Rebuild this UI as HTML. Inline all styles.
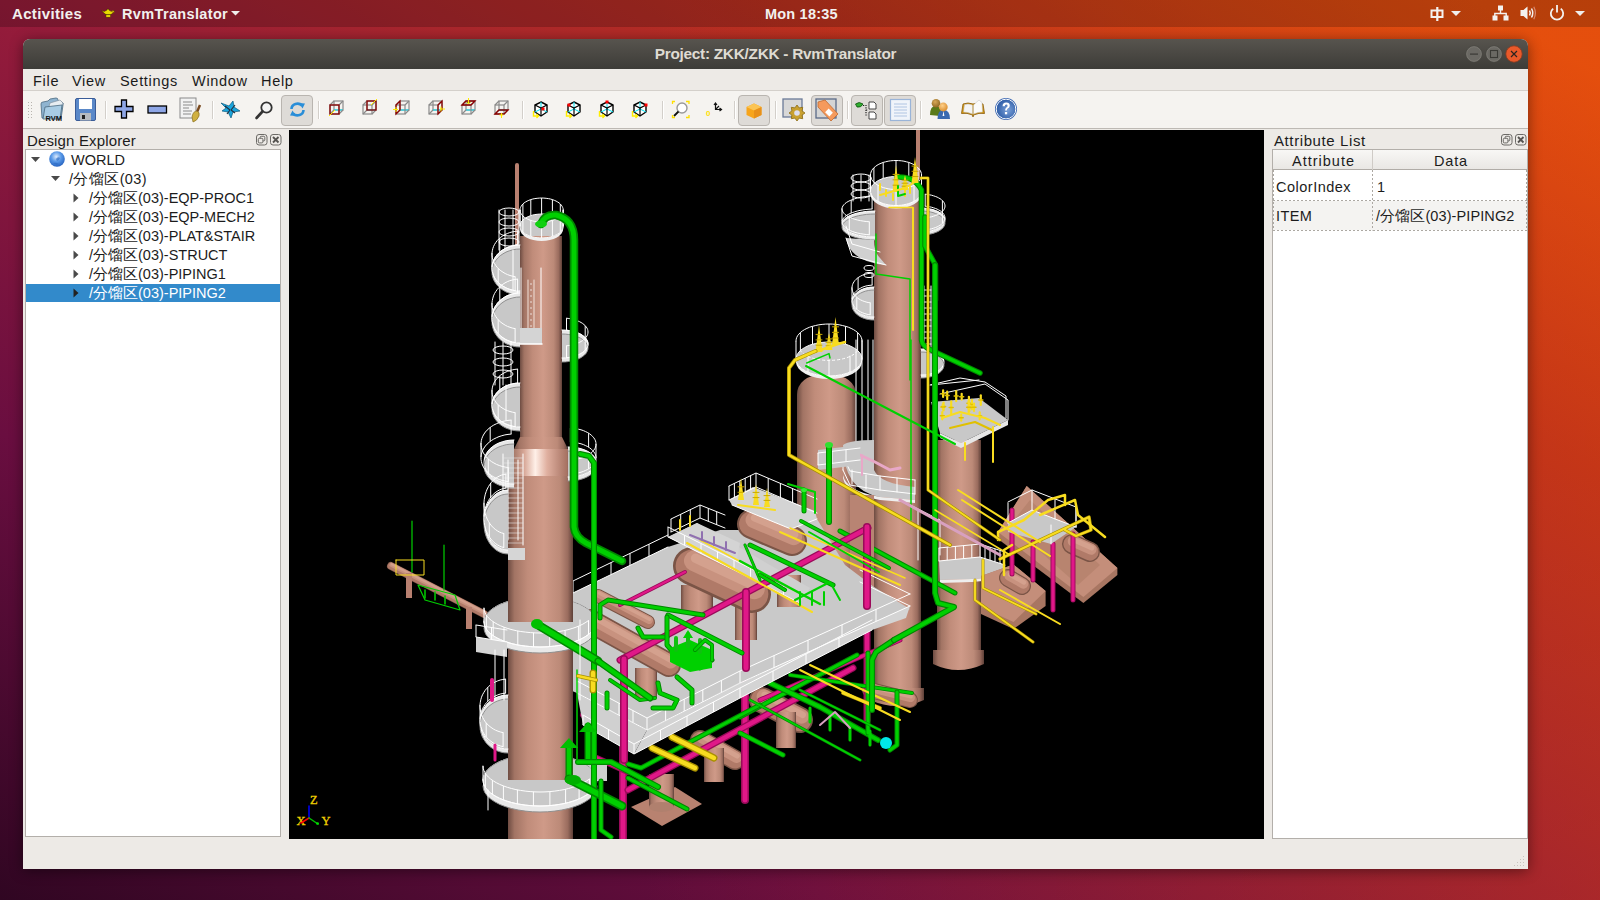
<!DOCTYPE html>
<html><head><meta charset="utf-8">
<style>
*{margin:0;padding:0;box-sizing:border-box}
html,body{width:1600px;height:900px;overflow:hidden}
body{position:relative;font-family:"Liberation Sans",sans-serif;background:#6a0e3e}
.a{position:absolute}
#bg{left:0;top:0;width:1600px;height:900px;background:linear-gradient(to right,rgba(220,70,0,0) 0%,rgba(220,70,0,0) 40%,rgba(220,70,0,0.28) 100%),linear-gradient(to top right,#300622 0%,#6a0e40 26%,#961c3a 50%,#bc3020 74%,#e85212 96%)}
#panel{left:0;top:0;width:1600px;height:27px;background:rgba(0,0,0,0.2)}
.pt{color:#f2f0ee;font-weight:bold;font-size:14.5px;top:6px;white-space:nowrap;line-height:17px}
#win{left:23px;top:39px;width:1505px;height:830px;background:#edeae6;border-radius:7px 7px 0 0;box-shadow:0 2px 14px rgba(0,0,0,0.45)}
#title{left:23px;top:39px;width:1505px;height:30px;border-radius:7px 7px 0 0;background:linear-gradient(#57544e,#3d3c38)}
.mi{font-size:14.5px;color:#1a1a1a;top:73px;white-space:nowrap;line-height:17px;letter-spacing:0.7px}
#toolbar{left:23px;top:90px;width:1505px;height:39px;background:#f5f3f0;border-top:1px solid #d4d0cb;border-bottom:1px solid #bdb9b4}
.sep{width:1px;height:18px;top:101px;background:#d3cfca;box-shadow:1px 0 0 #fff}
.tog{top:95px;height:31px;border:1px solid #b9b5b0;border-radius:4px;background:#dedbd7}
.dh{font-size:14.5px;color:#1c1c1c;white-space:nowrap;line-height:17px;letter-spacing:0.4px}
.tree{background:#fff;border:1px solid #b3afaa}
.ti{font-size:14.5px;color:#1c1c1c;white-space:nowrap;line-height:19px;height:19px}
.ic{position:absolute;overflow:visible}
</style></head><body>
<div id="bg" class="a"></div>
<div id="panel" class="a"></div>
<div class="a pt" style="left:12px;top:5px;letter-spacing:0.35px;font-size:15px">Activities</div>
<div class="a pt" style="left:122px;letter-spacing:0.35px">RvmTranslator</div>
<div class="a pt" style="left:765px;letter-spacing:0.2px">Mon 18:35</div>
<svg class="ic" style="left:1430px;top:7px" width="15" height="15" viewBox="0 0 15 15" ><rect x="1.5" y="3.5" width="11" height="6.5" fill="none" stroke="#f4f2f0" stroke-width="2"/><rect x="6.2" y="0" width="2.2" height="14" fill="#f4f2f0"/></svg>
<svg class="ic" style="left:1451px;top:11px" width="10" height="5" viewBox="0 0 10 5" ><path d="M0,0 L10,0 L5,5 Z" fill="#f0eeec"/></svg>
<svg class="ic" style="left:1575px;top:11px" width="10" height="5" viewBox="0 0 10 5" ><path d="M0,0 L10,0 L5,5 Z" fill="#f0eeec"/></svg>
<svg class="ic" style="left:1492px;top:5px" width="17" height="16" viewBox="0 0 17 16" ><rect x="6" y="0.5" width="5" height="5" fill="#f4f2f0"/><path d="M8.5,5 V8.5 M2.8,11 V8.5 H14.2 V11" stroke="#f4f2f0" stroke-width="1.4" fill="none"/><rect x="0.5" y="10.5" width="5" height="5" fill="#f4f2f0"/><rect x="11.5" y="10.5" width="5" height="5" fill="#f4f2f0"/></svg>
<svg class="ic" style="left:1520px;top:6px" width="17" height="14" viewBox="0 0 17 14" ><path d="M0.5,4 H3.5 L7.5,0.5 V13.5 L3.5,10 H0.5 Z" fill="#f4f2f0"/><path d="M9.5,4.5 Q11,7 9.5,9.5" stroke="#f4f2f0" stroke-width="1.5" fill="none"/><path d="M11.5,2.5 Q14,7 11.5,11.5" stroke="#f4f2f0" stroke-width="1.5" fill="none"/><path d="M13.8,0.8 Q17,7 13.8,13.2" stroke="#e6a898" stroke-width="1.2" fill="none" opacity="0.7"/></svg>
<svg class="ic" style="left:1549px;top:5px" width="16" height="16" viewBox="0 0 16 16" ><path d="M4.2,3.6 A6.2,6.2 0 1 0 11.8,3.6" stroke="#f4f2f0" stroke-width="1.8" fill="none"/><rect x="7.1" y="0" width="1.8" height="7.5" fill="#f4f2f0"/></svg>
<svg class="ic" style="left:100px;top:7px" width="16" height="12" viewBox="0 0 16 12" ><path d="M1.5,3.6 Q4,6.5 6,7.6 L10.5,7.6 Q12.5,7 13,5.8 Q14.6,5.6 14.4,4.4 Q14,3.2 12.2,3.6 L11,4.6 Q10,3.4 9,3 L8.6,2 L7.4,2 L7,3 Q5.5,3.6 4.5,4.6 Q3,4 1.5,3.6 Z" fill="#e8dc00" stroke="#3a2a00" stroke-width="0.5"/><path d="M12.5,4.4 Q13.6,4.2 13.4,5 Q13,5.6 12.2,5.4 Z" fill="#7a1a2e"/><rect x="6" y="7.6" width="4.5" height="2.6" fill="#e0d000" stroke="#3a2a00" stroke-width="0.4"/></svg>
<svg class="ic" style="left:231px;top:11px" width="9" height="5" viewBox="0 0 9 5" ><path d="M0,0 L9,0 L4.5,4.5 Z" fill="#f0eeec"/></svg>

<div id="win" class="a"></div>
<div id="title" class="a"></div>
<div class="a" style="left:23px;top:44.5px;width:1505px;text-align:center;color:#dfdbd2;font-weight:bold;font-size:15.4px;line-height:17px;letter-spacing:-0.28px">Project: ZKK/ZKK - RvmTranslator</div>
<svg class="ic" style="left:1465px;top:45px" width="18" height="18" viewBox="0 0 18 18" ><circle cx="9" cy="9" r="8.2" fill="#6b6964" stroke="#45443f" stroke-width="0.8"/><circle cx="9" cy="9" r="7.3" fill="none" stroke="#7c7a74" stroke-width="0.8"/><rect x="5" y="8.5" width="8" height="1.2" fill="#3a3935"/></svg>
<svg class="ic" style="left:1485px;top:45px" width="18" height="18" viewBox="0 0 18 18" ><circle cx="9" cy="9" r="8.2" fill="#6b6964" stroke="#45443f" stroke-width="0.8"/><circle cx="9" cy="9" r="7.3" fill="none" stroke="#7c7a74" stroke-width="0.8"/><rect x="5.5" y="5.5" width="7" height="7" fill="none" stroke="#3a3935" stroke-width="1.1"/></svg>
<svg class="ic" style="left:1505px;top:45px" width="18" height="18" viewBox="0 0 18 18" ><circle cx="9" cy="9" r="8.2" fill="#e9592a" stroke="#8a3a1e" stroke-width="0.8"/><path d="M6,6 L12,12 M12,6 L6,12" stroke="#2c2420" stroke-width="1.2"/></svg>
<div class="a" style="left:23px;top:69px;width:1505px;height:21px;background:#edeae6"></div>
<div class="a mi" style="left:33px">File</div>
<div class="a mi" style="left:72px">View</div>
<div class="a mi" style="left:120px">Settings</div>
<div class="a mi" style="left:192px">Window</div>
<div class="a mi" style="left:261px">Help</div>
<div id="toolbar" class="a"></div>
<svg class="ic" style="left:28px;top:102px" width="5" height="17" viewBox="0 0 5 17" ><rect x="0" y="0" width="1" height="1" fill="#b8b4ae"/><rect x="0" y="3" width="1" height="1" fill="#b8b4ae"/><rect x="0" y="6" width="1" height="1" fill="#b8b4ae"/><rect x="0" y="9" width="1" height="1" fill="#b8b4ae"/><rect x="0" y="12" width="1" height="1" fill="#b8b4ae"/><rect x="0" y="15" width="1" height="1" fill="#b8b4ae"/><rect x="3" y="0" width="1" height="1" fill="#b8b4ae"/><rect x="3" y="3" width="1" height="1" fill="#b8b4ae"/><rect x="3" y="6" width="1" height="1" fill="#b8b4ae"/><rect x="3" y="9" width="1" height="1" fill="#b8b4ae"/><rect x="3" y="12" width="1" height="1" fill="#b8b4ae"/><rect x="3" y="15" width="1" height="1" fill="#b8b4ae"/></svg>
<div class="a tog" style="left:281px;width:32px"></div>
<div class="a tog" style="left:738px;width:32px"></div>
<div class="a tog" style="left:811px;width:32px"></div>
<div class="a tog" style="left:851px;width:32px"></div>
<div class="a tog" style="left:884px;width:32px"></div>
<div class="a sep" style="left:105px"></div>
<div class="a sep" style="left:212px"></div>
<div class="a sep" style="left:318px"></div>
<div class="a sep" style="left:522px"></div>
<div class="a sep" style="left:662px"></div>
<div class="a sep" style="left:734px"></div>
<div class="a sep" style="left:775px"></div>
<div class="a sep" style="left:847px"></div>
<div class="a sep" style="left:920px"></div>
<svg class="ic" style="left:40px;top:97px" width="25" height="25" viewBox="0 0 25 25" ><path d="M2,21 L1,7 Q1,5 3,5 L8,4 L10,2 L16,1 Q18,1 18,3 L19,5 L22,5 Q24,6 23,8 L21,22 Z" fill="#8fb4d0" stroke="#4a6a80" stroke-width="0.8"/><path d="M6,20 L10,6 L20,3 L23,6 L17,20 Z" fill="#e8eef2" stroke="#7a8a98" stroke-width="0.6"/><path d="M3,22 L5,10 L22,8 L20,22 Z" fill="#a8cce4" stroke="#4a6a80" stroke-width="0.8"/><text x="5.5" y="23.5" font-family="Liberation Sans" font-weight="bold" font-size="7.5" fill="#111">RVM</text></svg>
<svg class="ic" style="left:75px;top:98px" width="21" height="23" viewBox="0 0 21 23" ><rect x="0.5" y="0.5" width="20" height="22" rx="1.5" fill="#5a88c8" stroke="#3a5c98" stroke-width="1"/><rect x="4" y="1" width="13" height="10" fill="#fff"/><rect x="5" y="15" width="11" height="7.5" fill="#b8bcc0"/><rect x="7" y="17" width="3" height="4" fill="#222"/></svg>
<svg class="ic" style="left:114px;top:99px" width="21" height="21" viewBox="0 0 21 21" ><path d="M7.5,1 H12.5 V7.5 H19 V12.5 H12.5 V19 H7.5 V12.5 H1 V7.5 H7.5 Z" fill="#8ea6e6" stroke="#000" stroke-width="1.3"/></svg>
<svg class="ic" style="left:147px;top:105px" width="21" height="10" viewBox="0 0 21 10" ><rect x="1" y="1" width="18.5" height="7" fill="#8ea6e6" stroke="#000" stroke-width="1.3"/></svg>
<svg class="ic" style="left:179px;top:97px" width="26" height="26" viewBox="0 0 26 26" ><rect x="1" y="1" width="16" height="20" fill="#f2f2f2" stroke="#8a8a8a" stroke-width="1"/><path d="M4,5 H13 M4,8 H14 M4,11 H10 M4,14 H13 M4,17 H12" stroke="#8a8a8a" stroke-width="1"/><path d="M21,8 L18,15" stroke="#7a4a20" stroke-width="2.5"/><path d="M13,20 Q14,14 18,14 Q21,15 20,19 Q18,24 14,25 Z" fill="#d0b040" stroke="#8a7020" stroke-width="0.7"/></svg>
<svg class="ic" style="left:221px;top:101px" width="20" height="17" viewBox="0 0 20 17" ><path d="M0,2 L8,5 L12,0 L13,6 L19,10 L12,11 L10,17 L7,11 L1,10 L5,7 Z" fill="#1aa4dc" stroke="#0a5a80" stroke-width="0.7"/><path d="M4,5 L9,9 M14,4 L10,9 M9,9 L6,13 M10,9 L14,12" stroke="#203040" stroke-width="1.2"/></svg>
<svg class="ic" style="left:255px;top:101px" width="18" height="19" viewBox="0 0 18 19" ><circle cx="11.5" cy="6.5" r="5.2" fill="#f4f4f4" stroke="#333" stroke-width="1.8"/><path d="M7.5,10.5 L1.5,17" stroke="#333" stroke-width="2.6" stroke-linecap="round"/></svg>
<svg class="ic" style="left:289px;top:102px" width="17" height="15" viewBox="0 0 17 15" ><path d="M2.5,7 A6,5.5 0 0 1 13,3.5" stroke="#2a8ed8" stroke-width="2.6" fill="none"/><path d="M10,1 L16,1.5 L13.5,6.5 Z" fill="#2a8ed8"/><path d="M14.5,8 A6,5.5 0 0 1 4,11.5" stroke="#2a8ed8" stroke-width="2.6" fill="none"/><path d="M7,14 L1,13.5 L3.5,8.5 Z" fill="#2a8ed8"/></svg>
<svg class="ic" style="left:329px;top:100px" width="18" height="18" viewBox="0 0 18 18" ><rect x="5" y="1" width="9" height="9" fill="none" stroke="#8a8a8a" stroke-width="1.2"/><path d="M5,10 V10" stroke="#00e8ff" stroke-width="1"/><path d="M5,10 H14" stroke="#00e8ff" stroke-width="1"/><path d="M1,5 L5,1 M10,5 L14,1 M10,14 L14,10 M1,14 L5,10" stroke="#8a8a8a" stroke-width="1.2"/><rect x="1" y="5" width="9" height="9" fill="none" stroke="#8a8a8a" stroke-width="1.2"/><rect x="1" y="5" width="9" height="9" fill="none" stroke="#8b0000" stroke-width="1.3"/><path d="M0,16 L6,10" stroke="#ffee00" stroke-width="1"/></svg>
<svg class="ic" style="left:362px;top:100px" width="18" height="18" viewBox="0 0 18 18" ><rect x="5" y="1" width="9" height="9" fill="none" stroke="#8a8a8a" stroke-width="1.2"/><path d="M5,10 V10" stroke="#00e8ff" stroke-width="1"/><path d="M5,10 H14" stroke="#00e8ff" stroke-width="1"/><path d="M1,5 L5,1 M10,5 L14,1 M10,14 L14,10 M1,14 L5,10" stroke="#8a8a8a" stroke-width="1.2"/><rect x="1" y="5" width="9" height="9" fill="none" stroke="#8a8a8a" stroke-width="1.2"/><rect x="5" y="1" width="9" height="9" fill="none" stroke="#8b0000" stroke-width="1.3"/><path d="M15,-1 L9,5" stroke="#ffee00" stroke-width="1"/></svg>
<svg class="ic" style="left:395px;top:100px" width="18" height="18" viewBox="0 0 18 18" ><rect x="5" y="1" width="9" height="9" fill="none" stroke="#8a8a8a" stroke-width="1.2"/><path d="M5,10 V10" stroke="#00e8ff" stroke-width="1"/><path d="M5,10 H14" stroke="#00e8ff" stroke-width="1"/><path d="M1,5 L5,1 M10,5 L14,1 M10,14 L14,10 M1,14 L5,10" stroke="#8a8a8a" stroke-width="1.2"/><rect x="1" y="5" width="9" height="9" fill="none" stroke="#8a8a8a" stroke-width="1.2"/><path d="M1,5 L5,1 V10 L1,14 Z" fill="none" stroke="#8b0000" stroke-width="1.3"/><path d="M-2,9.5 H3 M1,7 V12" stroke="#ffee00" stroke-width="1"/></svg>
<svg class="ic" style="left:428px;top:100px" width="18" height="18" viewBox="0 0 18 18" ><rect x="5" y="1" width="9" height="9" fill="none" stroke="#8a8a8a" stroke-width="1.2"/><path d="M5,10 V10" stroke="#00e8ff" stroke-width="1"/><path d="M5,10 H14" stroke="#00e8ff" stroke-width="1"/><path d="M1,5 L5,1 M10,5 L14,1 M10,14 L14,10 M1,14 L5,10" stroke="#8a8a8a" stroke-width="1.2"/><rect x="1" y="5" width="9" height="9" fill="none" stroke="#8a8a8a" stroke-width="1.2"/><path d="M10,5 L14,1 V10 L10,14 Z" fill="none" stroke="#8b0000" stroke-width="1.3"/><path d="M12,9 H17 M13,6.5 V11.5" stroke="#ffee00" stroke-width="1"/></svg>
<svg class="ic" style="left:461px;top:100px" width="18" height="18" viewBox="0 0 18 18" ><rect x="5" y="1" width="9" height="9" fill="none" stroke="#8a8a8a" stroke-width="1.2"/><path d="M5,10 V10" stroke="#00e8ff" stroke-width="1"/><path d="M5,10 H14" stroke="#00e8ff" stroke-width="1"/><path d="M1,5 L5,1 M10,5 L14,1 M10,14 L14,10 M1,14 L5,10" stroke="#8a8a8a" stroke-width="1.2"/><rect x="1" y="5" width="9" height="9" fill="none" stroke="#8a8a8a" stroke-width="1.2"/><path d="M1,5 L5,1 H14 L10,5 Z" fill="none" stroke="#8b0000" stroke-width="1.3"/><path d="M7.5,-2 V4 M5.5,2 L7.5,4 L9.5,2" stroke="#ffee00" stroke-width="1"/></svg>
<svg class="ic" style="left:494px;top:100px" width="18" height="18" viewBox="0 0 18 18" ><rect x="5" y="1" width="9" height="9" fill="none" stroke="#8a8a8a" stroke-width="1.2"/><path d="M5,10 V10" stroke="#00e8ff" stroke-width="1"/><path d="M5,10 H14" stroke="#00e8ff" stroke-width="1"/><path d="M1,5 L5,1 M10,5 L14,1 M10,14 L14,10 M1,14 L5,10" stroke="#8a8a8a" stroke-width="1.2"/><rect x="1" y="5" width="9" height="9" fill="none" stroke="#8a8a8a" stroke-width="1.2"/><path d="M1,14 L5,10 H14 L10,14 Z" fill="none" stroke="#8b0000" stroke-width="1.3"/><path d="M7.5,13 V18 M5.5,15 H9.5" stroke="#ffee00" stroke-width="1"/></svg>
<svg class="ic" style="left:533px;top:101px" width="18" height="18" viewBox="0 0 18 18" ><path d="M8,1 L14,4 L14,11 L8,15 L2,11 L2,4 Z" fill="#fff" stroke="#000" stroke-width="1.4"/><path d="M8,8 L8,1 M8,8 L2,11 M8,8 L14,11" stroke="#00e0f0" stroke-width="1"/><path d="M2,4 L8,7 L14,4 M8,7 V8,15" stroke="#000" stroke-width="1.2" fill="none"/><rect x="8.5" y="6.5" width="3" height="3" fill="#ff0000"/><path d="M0.5,10 V15 H5 M3.5,13 L5.5,15 L3.5,17" stroke="#ffee00" stroke-width="1.4" fill="none"/></svg>
<svg class="ic" style="left:566px;top:101px" width="18" height="18" viewBox="0 0 18 18" ><path d="M8,1 L14,4 L14,11 L8,15 L2,11 L2,4 Z" fill="#fff" stroke="#000" stroke-width="1.4"/><path d="M8,8 L8,1 M8,8 L2,11 M8,8 L14,11" stroke="#00e0f0" stroke-width="1"/><path d="M2,4 L8,7 L14,4 M8,7 V8,15" stroke="#000" stroke-width="1.2" fill="none"/><rect x="1.5" y="2.5" width="3" height="3" fill="#ff0000"/><path d="M0.5,10 V15 H5 M3.5,13 L5.5,15 L3.5,17" stroke="#ffee00" stroke-width="1.4" fill="none"/></svg>
<svg class="ic" style="left:599px;top:101px" width="18" height="18" viewBox="0 0 18 18" ><path d="M8,1 L14,4 L14,11 L8,15 L2,11 L2,4 Z" fill="#fff" stroke="#000" stroke-width="1.4"/><path d="M8,8 L8,1 M8,8 L2,11 M8,8 L14,11" stroke="#00e0f0" stroke-width="1"/><path d="M2,4 L8,7 L14,4 M8,7 V8,15" stroke="#000" stroke-width="1.2" fill="none"/><rect x="6.5" y="-0.5" width="3" height="3" fill="#ff0000"/><path d="M0.5,10 V15 H5 M3.5,13 L5.5,15 L3.5,17" stroke="#ffee00" stroke-width="1.4" fill="none"/></svg>
<svg class="ic" style="left:632px;top:101px" width="18" height="18" viewBox="0 0 18 18" ><path d="M8,1 L14,4 L14,11 L8,15 L2,11 L2,4 Z" fill="#fff" stroke="#000" stroke-width="1.4"/><path d="M8,8 L8,1 M8,8 L2,11 M8,8 L14,11" stroke="#00e0f0" stroke-width="1"/><path d="M2,4 L8,7 L14,4 M8,7 V8,15" stroke="#000" stroke-width="1.2" fill="none"/><rect x="12.5" y="2.5" width="3" height="3" fill="#ff0000"/><path d="M0.5,10 V15 H5 M3.5,13 L5.5,15 L3.5,17" stroke="#ffee00" stroke-width="1.4" fill="none"/></svg>
<svg class="ic" style="left:672px;top:101px" width="18" height="18" viewBox="0 0 18 18" ><circle cx="10" cy="7" r="5" fill="#fff" stroke="#999" stroke-width="1.4"/><path d="M6.5,10.5 L2,15" stroke="#111" stroke-width="1.8"/><path d="M0.5,3 V0.5 H3 M14,0.5 H17 V3 M17,14 V16.5 H14 M3,16.5 H0.5 V14" stroke="#ffe000" stroke-width="1.3" fill="none"/></svg>
<svg class="ic" style="left:706px;top:102px" width="16" height="15" viewBox="0 0 16 15" ><text x="0" y="14" font-family="Liberation Sans" font-weight="bold" font-size="8" fill="#ffe000">0</text><path d="M9.5,1 V7.5 H15.5 M8,3 L9.5,1 L11,3 M13.5,6 L15.5,7.5 L13.5,9 M9.5,7.5 L13,4" stroke="#111" stroke-width="1.2" fill="none"/></svg>
<svg class="ic" style="left:746px;top:103px" width="16" height="16" viewBox="0 0 16 16" ><path d="M8,0.5 L15.5,4 V12 L8,15.5 L0.5,12 V4 Z" fill="#f7a51c"/><path d="M8,0.5 L15.5,4 L8,7.5 L0.5,4 Z" fill="#fbc454"/><path d="M8,7.5 L15.5,4 V12 L8,15.5 Z" fill="#e8901a"/></svg>
<svg class="ic" style="left:782px;top:98px" width="25" height="25" viewBox="0 0 25 25" ><rect x="1" y="1" width="19" height="18" fill="#d8d8d8" stroke="#6a7a98" stroke-width="1.3"/><polygon points="23.0,15.0 20.1,17.1 20.7,20.7 17.1,20.1 15.0,23.0 12.9,20.1 9.3,20.7 9.9,17.1 7.0,15.0 9.9,12.9 9.3,9.3 12.9,9.9 15.0,7.0 17.1,9.9 20.7,9.3 20.1,12.9" fill="#c8a030" stroke="#8a6a10" stroke-width="0.8"/><circle cx="15" cy="15" r="2.8" fill="#dde"/></svg>
<svg class="ic" style="left:815px;top:98px" width="25" height="24" viewBox="0 0 25 24" ><rect x="1" y="1" width="20" height="19" fill="#d4d4d4" stroke="#5a6a88" stroke-width="1.3"/><path d="M3,4 L10,2 L23,16 L16,23 L3,9 Z" fill="#f59a5c" stroke="#c06a30" stroke-width="0.8"/><rect x="11" y="12" width="6" height="5" transform="rotate(45 14 14.5)" fill="#fff"/></svg>
<svg class="ic" style="left:855px;top:101px" width="23" height="19" viewBox="0 0 23 19" ><path d="M0.5,3 Q4,0 8,3 Q6,7 2,6 Z" fill="#30b030" stroke="#105010" stroke-width="0.8"/><path d="M8,4.5 H11 V14 H13 M11,9 H13" stroke="#222" stroke-width="1.2" stroke-dasharray="1.2,1.2" fill="none"/><path d="M14,1 H19 L21,3 V8 H14 Z" fill="#fff" stroke="#333" stroke-width="0.9"/><path d="M14,11 H19 L21,13 V18 H14 Z" fill="#fff" stroke="#333" stroke-width="0.9"/></svg>
<svg class="ic" style="left:890px;top:99px" width="21" height="22" viewBox="0 0 21 22" ><rect x="0.5" y="0.5" width="20" height="21" fill="#f0f4fa" stroke="#9ab4d8" stroke-width="1.2"/><path d="M4,5 H17 M4,8 H17 M4,11 H17 M4,14 H17 M4,17 H17" stroke="#a8c0e0" stroke-width="0.9"/></svg>
<svg class="ic" style="left:929px;top:98px" width="22" height="23" viewBox="0 0 22 23" ><defs><radialGradient id="hd1" cx="0.4" cy="0.35" r="0.7"><stop offset="0" stop-color="#d8a858"/><stop offset="1" stop-color="#8a6420"/></radialGradient><radialGradient id="hd2" cx="0.4" cy="0.35" r="0.7"><stop offset="0" stop-color="#ffd08a"/><stop offset="1" stop-color="#d88a2a"/></radialGradient></defs><path d="M1,17 Q1,8 6.5,8 Q12,8 12,14 L11,18 Z" fill="#5a7a1a"/><circle cx="7" cy="5.2" r="4.3" fill="url(#hd1)"/><path d="M8.5,21 Q8.5,12 14.5,12 Q21,12 21,21 Z" fill="#3a6ab0"/><path d="M14.5,13 L13.6,18 L15.4,18 Z" fill="#fff"/><circle cx="14.3" cy="9" r="4.4" fill="url(#hd2)"/></svg>
<svg class="ic" style="left:961px;top:99px" width="24" height="22" viewBox="0 0 24 22" ><path d="M0.5,14.5 L2,5 Q7,3 12,5 Q17,3 22,5 L23.5,14.5 Q18,13.5 12.5,16 L12,18 L11.5,16 Q6,13.5 0.5,14.5 Z" fill="#d49a18" stroke="#8a5a08" stroke-width="0.8"/><path d="M2.5,13 L3.5,5.5 Q7.5,4.5 11.5,6 L11.5,15 Q7,13 2.5,13 Z" fill="#f4f4f4" stroke="#b0b0b0" stroke-width="0.4"/><path d="M12.5,6 Q15,3.5 18,1 L21,3.5 L21.5,13 Q17,13 12.5,15 Z" fill="#fafafa" stroke="#b0b0b0" stroke-width="0.4"/></svg>
<svg class="ic" style="left:994px;top:97px" width="24" height="24" viewBox="0 0 24 24" ><defs><radialGradient id="hg" cx="0.6" cy="0.55" r="0.6"><stop offset="0" stop-color="#7aa0d8"/><stop offset="1" stop-color="#2f5ea8"/></radialGradient></defs><circle cx="12" cy="12" r="11" fill="#3a66b0"/><circle cx="12" cy="12" r="9.8" fill="none" stroke="#fff" stroke-width="1"/><circle cx="12" cy="12" r="9.2" fill="url(#hg)"/><path d="M8.6,9.2 Q8.6,5.6 12.2,5.6 Q15.8,5.6 15.8,8.8 Q15.8,10.8 13.5,11.8 Q12.9,12.2 12.9,13.6 L11.1,13.6 Q11.1,11.4 12.4,10.6 Q13.6,9.8 13.6,8.9 Q13.6,7.6 12.2,7.6 Q10.8,7.6 10.8,9.2 Z" fill="#fff"/><rect x="10.9" y="15" width="2.3" height="2.3" fill="#fff"/></svg>

<!-- Design Explorer -->
<div class="a dh" style="left:27px;top:132px;font-size:15px;letter-spacing:0.15px">Design Explorer</div>
<svg class="ic" style="left:256px;top:134px" width="12" height="12" viewBox="0 0 12 12" ><rect x="0.5" y="0.5" width="10.5" height="10.5" rx="2.5" fill="none" stroke="#6c6a66" stroke-width="1"/><rect x="4.2" y="2.3" width="4.6" height="4.6" rx="1" fill="none" stroke="#6c6a66" stroke-width="1"/><rect x="2.3" y="4.3" width="4.6" height="4.6" rx="1" fill="#edeae6" stroke="#6c6a66" stroke-width="1"/></svg><svg class="ic" style="left:270px;top:134px" width="12" height="12" viewBox="0 0 12 12" ><rect x="0.5" y="0.5" width="10.5" height="10.5" rx="2.5" fill="none" stroke="#6c6a66" stroke-width="1"/><path d="M3,3 L8.5,8.5 M8.5,3 L3,8.5" stroke="#555350" stroke-width="1.8"/></svg>
<div class="a tree" style="left:25px;top:149px;width:256px;height:688px"></div>
<div class="a" style="left:26px;top:284px;width:254px;height:18px;background:#328acb"></div>
<svg class="ic" style="left:31px;top:157px" width="10" height="6" viewBox="0 0 10 6" ><path d="M0,0 H9 L4.5,5 Z" fill="#4a4a4a"/></svg>
<svg class="ic" style="left:51px;top:176px" width="10" height="6" viewBox="0 0 10 6" ><path d="M0,0 H9 L4.5,5 Z" fill="#4a4a4a"/></svg>
<svg class="ic" style="left:73px;top:193px" width="6" height="10" viewBox="0 0 6 10" ><path d="M0.5,0.5 V9.5 L5.5,5 Z" fill="#4a4a4a"/></svg>
<svg class="ic" style="left:73px;top:212px" width="6" height="10" viewBox="0 0 6 10" ><path d="M0.5,0.5 V9.5 L5.5,5 Z" fill="#4a4a4a"/></svg>
<svg class="ic" style="left:73px;top:231px" width="6" height="10" viewBox="0 0 6 10" ><path d="M0.5,0.5 V9.5 L5.5,5 Z" fill="#4a4a4a"/></svg>
<svg class="ic" style="left:73px;top:250px" width="6" height="10" viewBox="0 0 6 10" ><path d="M0.5,0.5 V9.5 L5.5,5 Z" fill="#4a4a4a"/></svg>
<svg class="ic" style="left:73px;top:269px" width="6" height="10" viewBox="0 0 6 10" ><path d="M0.5,0.5 V9.5 L5.5,5 Z" fill="#4a4a4a"/></svg>
<svg class="ic" style="left:73px;top:288px" width="6" height="10" viewBox="0 0 6 10" ><path d="M0.5,0.5 V9.5 L5.5,5 Z" fill="#222"/></svg>
<svg class="ic" style="left:49px;top:151px" width="17" height="17" viewBox="0 0 17 17" ><defs><radialGradient id="gl" cx="0.45" cy="0.35" r="0.7"><stop offset="0" stop-color="#dbe9fb"/><stop offset="0.45" stop-color="#5a9ae8"/><stop offset="1" stop-color="#1e5aba"/></radialGradient></defs><circle cx="8" cy="8" r="7.8" fill="url(#gl)"/><path d="M7,8 Q9,5 11,7 Q10,10 8,10 Z M4,12 Q7,11 10,13 Q7,15 4,12 Z" fill="#2a68c0" opacity="0.6"/></svg>
<div class="a ti" style="left:71px;top:151px">WORLD</div>
<div class="a ti" style="left:69px;top:170px;letter-spacing:0.4px">/分馏区(03)</div>
<div class="a ti" style="left:89px;top:189px;color:#1c1c1c">/分馏区(03)-EQP-PROC1</div>
<div class="a ti" style="left:89px;top:208px;color:#1c1c1c">/分馏区(03)-EQP-MECH2</div>
<div class="a ti" style="left:89px;top:227px;color:#1c1c1c">/分馏区(03)-PLAT&amp;STAIR</div>
<div class="a ti" style="left:89px;top:246px;color:#1c1c1c">/分馏区(03)-STRUCT</div>
<div class="a ti" style="left:89px;top:265px;color:#1c1c1c">/分馏区(03)-PIPING1</div>
<div class="a ti" style="left:89px;top:284px;color:#fff">/分馏区(03)-PIPING2</div>

<!-- Attribute list -->
<div class="a dh" style="left:1274px;top:132px;font-size:15px;letter-spacing:0.6px">Attribute List</div>
<svg class="ic" style="left:1501px;top:134px" width="12" height="12" viewBox="0 0 12 12" ><rect x="0.5" y="0.5" width="10.5" height="10.5" rx="2.5" fill="none" stroke="#6c6a66" stroke-width="1"/><rect x="4.2" y="2.3" width="4.6" height="4.6" rx="1" fill="none" stroke="#6c6a66" stroke-width="1"/><rect x="2.3" y="4.3" width="4.6" height="4.6" rx="1" fill="#edeae6" stroke="#6c6a66" stroke-width="1"/></svg><svg class="ic" style="left:1515px;top:134px" width="12" height="12" viewBox="0 0 12 12" ><rect x="0.5" y="0.5" width="10.5" height="10.5" rx="2.5" fill="none" stroke="#6c6a66" stroke-width="1"/><path d="M3,3 L8.5,8.5 M8.5,3 L3,8.5" stroke="#555350" stroke-width="1.8"/></svg>
<div class="a tree" style="left:1272px;top:149px;width:256px;height:690px"></div>
<div class="a" style="left:1273px;top:150px;width:254px;height:20px;background:linear-gradient(#f8f7f5,#e9e7e4);border-bottom:1px solid #b0aca7"></div>
<div class="a" style="left:1372px;top:150px;width:1px;height:20px;background:#cfcbc6"></div>
<div class="a ti" style="left:1292px;top:152px;letter-spacing:1px">Attribute</div>
<div class="a ti" style="left:1434px;top:152px;letter-spacing:0.8px">Data</div>
<div class="a" style="left:1273px;top:201px;width:254px;height:29px;background:#f4f3f1"></div>
<svg class="ic" style="left:1273px;top:170px" width="255" height="61" viewBox="0 0 255 61" ><path d="M0.5,0 V60.5 M99.5,0 V60.5 M253.5,0 V60.5 M0,30.5 H254 M0,60.5 H254" stroke="#aca8a2" stroke-width="1" stroke-dasharray="2,2" fill="none"/></svg>
<div class="a ti" style="left:1276px;top:178px;letter-spacing:0.5px">ColorIndex</div>
<div class="a ti" style="left:1377px;top:178px">1</div>
<div class="a ti" style="left:1276px;top:207px;letter-spacing:0.4px">ITEM</div>
<div class="a ti" style="left:1376px;top:207px;letter-spacing:0.1px">/分馏区(03)-PIPING2</div>
<svg class="ic" style="left:1514px;top:856px" width="12" height="12" viewBox="0 0 12 12" ><rect x="9" y="0" width="1" height="1" fill="#c8c4be"/><rect x="6" y="3" width="1" height="1" fill="#c8c4be"/><rect x="9" y="3" width="1" height="1" fill="#c8c4be"/><rect x="3" y="6" width="1" height="1" fill="#c8c4be"/><rect x="6" y="6" width="1" height="1" fill="#c8c4be"/><rect x="9" y="6" width="1" height="1" fill="#c8c4be"/><rect x="0" y="9" width="1" height="1" fill="#c8c4be"/><rect x="3" y="9" width="1" height="1" fill="#c8c4be"/><rect x="6" y="9" width="1" height="1" fill="#c8c4be"/><rect x="9" y="9" width="1" height="1" fill="#c8c4be"/></svg>
<svg class="a" style="left:0;top:0" width="1600" height="900" viewBox="0 0 1600 900">
<defs>
<clipPath id="vpc"><rect x="289" y="130" width="975" height="709"/></clipPath>
<linearGradient id="col" x1="0" x2="1" y1="0" y2="0">
<stop offset="0" stop-color="#6e4c42"/><stop offset="0.1" stop-color="#a27464"/><stop offset="0.3" stop-color="#c08c7a"/><stop offset="0.55" stop-color="#cf9a88"/><stop offset="0.8" stop-color="#bc8a78"/><stop offset="0.92" stop-color="#9a6c5e"/><stop offset="1" stop-color="#5e4038"/>
</linearGradient>
<linearGradient id="cone" x1="0" x2="1" y1="0" y2="0">
<stop offset="0" stop-color="#8a6050"/><stop offset="0.25" stop-color="#d8a898"/><stop offset="0.42" stop-color="#fff0e8"/><stop offset="0.6" stop-color="#e0b0a0"/><stop offset="0.9" stop-color="#a87464"/><stop offset="1" stop-color="#6a4a40"/>
</linearGradient>
<linearGradient id="gpv" x1="0" x2="1" y1="0" y2="0"><stop offset="0" stop-color="#008a00"/><stop offset="0.45" stop-color="#00e000"/><stop offset="1" stop-color="#007a00"/></linearGradient>
</defs>
<g clip-path="url(#vpc)">
<rect x="289" y="130" width="975" height="709" fill="#000"/>
<polyline points="918.0,130.0 918.0,178.0" fill="none" stroke="#b88070" stroke-width="4" stroke-linecap="round" stroke-linejoin="round"/>
<rect x="874" y="200" width="47" height="500" fill="url(#col)"/>
<path d="M870,688 L924,688 L924,700 Q897,712 870,700 Z" fill="url(#col)" stroke="none" stroke-width="1" />
<rect x="937" y="440" width="44" height="215" fill="url(#col)"/>
<path d="M933,650 L984,650 L984,664 Q958,676 933,664 Z" fill="url(#col)" stroke="none" stroke-width="1" />
<path d="M797,600 L797,395 Q797,376 826,373 Q856,376 856,395 L856,600 Z" fill="url(#col)" stroke="none" stroke-width="1" />
<ellipse cx="896" cy="191" rx="25.5" ry="14.5" fill="#c8c8c8" stroke="none" stroke-width="1"/>
<path d="M870.5,191 A25.5,14.5 0 0 0 921.5,191 L921.5,194 A25.5,14.5 0 0 1 870.5,194 Z" fill="#f0f0f0" stroke="none" stroke-width="1" />
<polyline points="870.5,191.0 870.6,189.5 871.1,188.0 871.7,186.5 872.7,185.1 873.9,183.8 875.4,182.5 877.0,181.3 878.9,180.2 881.0,179.3 883.2,178.4 885.6,177.8 888.1,177.2 890.7,176.8 893.3,176.6 896.0,176.5 898.7,176.6 901.3,176.8 903.9,177.2 906.4,177.8 908.8,178.4 911.0,179.3 913.1,180.2 915.0,181.3 916.6,182.5 918.1,183.8 919.3,185.1 920.3,186.5 920.9,188.0 921.4,189.5 921.5,191.0" fill="none" stroke="#ffffff" stroke-width="1" stroke-linecap="round" stroke-linejoin="round"/>
<polyline points="870.5,175.0 870.6,173.5 871.1,172.0 871.7,170.5 872.7,169.1 873.9,167.8 875.4,166.5 877.0,165.3 878.9,164.2 881.0,163.3 883.2,162.4 885.6,161.8 888.1,161.2 890.7,160.8 893.3,160.6 896.0,160.5 898.7,160.6 901.3,160.8 903.9,161.2 906.4,161.8 908.8,162.4 911.0,163.3 913.1,164.2 915.0,165.3 916.6,166.5 918.1,167.8 919.3,169.1 920.3,170.5 920.9,172.0 921.4,173.5 921.5,175.0" fill="none" stroke="#ffffff" stroke-width="1" stroke-linecap="round" stroke-linejoin="round"/>
<line x1="870.5" y1="191.0" x2="870.5" y2="175.0" stroke="#ffffff" stroke-width="1"/>
<line x1="873.9" y1="183.8" x2="873.9" y2="167.8" stroke="#ffffff" stroke-width="1"/>
<line x1="883.2" y1="178.4" x2="883.2" y2="162.4" stroke="#ffffff" stroke-width="1"/>
<line x1="896.0" y1="176.5" x2="896.0" y2="160.5" stroke="#ffffff" stroke-width="1"/>
<line x1="908.8" y1="178.4" x2="908.8" y2="162.4" stroke="#ffffff" stroke-width="1"/>
<line x1="918.1" y1="183.8" x2="918.1" y2="167.8" stroke="#ffffff" stroke-width="1"/>
<line x1="921.5" y1="191.0" x2="921.5" y2="175.0" stroke="#ffffff" stroke-width="1"/>
<polyline points="921.5,191.0 921.4,192.5 920.9,194.0 920.3,195.5 919.3,196.9 918.1,198.2 916.6,199.5 915.0,200.7 913.1,201.8 911.0,202.7 908.8,203.6 906.4,204.2 903.9,204.8 901.3,205.2 898.7,205.4 896.0,205.5 893.3,205.4 890.7,205.2 888.1,204.8 885.6,204.2 883.2,203.6 881.0,202.7 878.9,201.8 877.0,200.7 875.4,199.5 873.9,198.2 872.7,196.9 871.7,195.5 871.1,194.0 870.6,192.5 870.5,191.0" fill="none" stroke="#ffffff" stroke-width="1" stroke-linecap="round" stroke-linejoin="round"/>
<polyline points="921.5,175.0 921.4,176.5 920.9,178.0 920.3,179.5 919.3,180.9 918.1,182.2 916.6,183.5 915.0,184.7 913.1,185.8 911.0,186.7 908.8,187.6 906.4,188.2 903.9,188.8 901.3,189.2 898.7,189.4 896.0,189.5 893.3,189.4 890.7,189.2 888.1,188.8 885.6,188.2 883.2,187.6 881.0,186.7 878.9,185.8 877.0,184.7 875.4,183.5 873.9,182.2 872.7,180.9 871.7,179.5 871.1,178.0 870.6,176.5 870.5,175.0" fill="none" stroke="#ffffff" stroke-width="1" stroke-linecap="round" stroke-linejoin="round"/>
<line x1="921.5" y1="191.0" x2="921.5" y2="175.0" stroke="#ffffff" stroke-width="1"/>
<line x1="914.0" y1="201.3" x2="914.0" y2="185.3" stroke="#ffffff" stroke-width="1"/>
<line x1="896.0" y1="205.5" x2="896.0" y2="189.5" stroke="#ffffff" stroke-width="1"/>
<line x1="878.0" y1="201.3" x2="878.0" y2="185.3" stroke="#ffffff" stroke-width="1"/>
<line x1="870.5" y1="191.0" x2="870.5" y2="175.0" stroke="#ffffff" stroke-width="1"/>
<ellipse cx="861" cy="178" rx="10" ry="4" fill="none" stroke="#fff" stroke-width="1"/>
<ellipse cx="861" cy="186" rx="10" ry="4" fill="none" stroke="#fff" stroke-width="1"/>
<ellipse cx="861" cy="194" rx="10" ry="4" fill="none" stroke="#fff" stroke-width="1"/>
<polyline points="853.0,175.0 853.0,201.0" fill="none" stroke="#ffffff" stroke-width="1" stroke-linecap="round" stroke-linejoin="round"/>
<polyline points="861.0,175.0 861.0,201.0" fill="none" stroke="#ffffff" stroke-width="1" stroke-linecap="round" stroke-linejoin="round"/>
<polyline points="869.0,175.0 869.0,201.0" fill="none" stroke="#ffffff" stroke-width="1" stroke-linecap="round" stroke-linejoin="round"/>
<polygon points="875.0,224.0 875.0,237.0 870.7,236.9 866.5,236.6 862.4,236.0 858.5,235.3 854.9,234.3 851.7,233.2 848.8,231.9 846.4,230.5 844.5,229.0 843.1,227.4 842.3,225.7 842.0,224.0 842.3,222.3 843.1,220.6 844.5,219.0 846.4,217.5 848.8,216.1 851.7,214.8 854.9,213.7 858.5,212.7 862.4,212.0 866.5,211.4 870.7,211.1 875.0,211.0" fill="#c8c8c8" stroke="none" stroke-width="1"/>
<polygon points="875.0,237.0 870.7,236.9 866.5,236.6 862.4,236.0 858.5,235.3 854.9,234.3 851.7,233.2 848.8,231.9 846.4,230.5 844.5,229.0 843.1,227.4 842.3,225.7 842.0,224.0 842.3,222.3 843.1,220.6 844.5,219.0 846.4,217.5 848.8,216.1 851.7,214.8 854.9,213.7 858.5,212.7 862.4,212.0 866.5,211.4 870.7,211.1 875.0,211.0 875.0,214.0 870.7,214.1 866.5,214.4 862.4,215.0 858.5,215.7 854.9,216.7 851.7,217.8 848.8,219.1 846.4,220.5 844.5,222.0 843.1,223.6 842.3,225.3 842.0,227.0 842.3,228.7 843.1,230.4 844.5,232.0 846.4,233.5 848.8,234.9 851.7,236.2 854.9,237.3 858.5,238.3 862.4,239.0 866.5,239.6 870.7,239.9 875.0,240.0" fill="#e8e8e8" stroke="none" stroke-width="1"/>
<polyline points="875.0,237.0 870.7,236.9 866.5,236.6 862.4,236.0 858.5,235.3 854.9,234.3 851.7,233.2 848.8,231.9 846.4,230.5 844.5,229.0 843.1,227.4 842.3,225.7 842.0,224.0 842.3,222.3 843.1,220.6 844.5,219.0 846.4,217.5 848.8,216.1 851.7,214.8 854.9,213.7 858.5,212.7 862.4,212.0 866.5,211.4 870.7,211.1 875.0,211.0" fill="none" stroke="#ffffff" stroke-width="1" stroke-linecap="round" stroke-linejoin="round"/>
<polyline points="875.0,240.0 870.7,239.9 866.5,239.6 862.4,239.0 858.5,238.3 854.9,237.3 851.7,236.2 848.8,234.9 846.4,233.5 844.5,232.0 843.1,230.4 842.3,228.7 842.0,227.0 842.3,225.3 843.1,223.6 844.5,222.0 846.4,220.5 848.8,219.1 851.7,217.8 854.9,216.7 858.5,215.7 862.4,215.0 866.5,214.4 870.7,214.1 875.0,214.0" fill="none" stroke="#909090" stroke-width="1" stroke-linecap="round" stroke-linejoin="round"/>
<polyline points="869.3,234.8 866.2,234.5 863.2,234.1 860.3,233.6 857.5,233.0 854.9,232.3 852.5,231.5 850.3,230.6 848.3,229.6 846.6,228.6 845.1,227.5 843.9,226.3 843.0,225.1 842.4,223.9 842.0,222.7 842.0,221.4 842.3,220.2 842.9,219.0 843.8,217.8 845.0,216.6 846.4,215.5 848.1,214.5 850.1,213.5 852.3,212.6 854.7,211.8 857.3,211.0 860.0,210.4 862.9,209.9 865.9,209.5 869.0,209.2 872.1,209.0" fill="none" stroke="#ffffff" stroke-width="1" stroke-linecap="round" stroke-linejoin="round"/>
<polyline points="869.3,221.8 866.2,221.5 863.2,221.1 860.3,220.6 857.5,220.0 854.9,219.3 852.5,218.5 850.3,217.6 848.3,216.6 846.6,215.6 845.1,214.5 843.9,213.3 843.0,212.1 842.4,210.9 842.0,209.7 842.0,208.4 842.3,207.2 842.9,206.0 843.8,204.8 845.0,203.6 846.4,202.5 848.1,201.5 850.1,200.5 852.3,199.6 854.7,198.8 857.3,198.0 860.0,197.4 862.9,196.9 865.9,196.5 869.0,196.2 872.1,196.0" fill="none" stroke="#ffffff" stroke-width="1" stroke-linecap="round" stroke-linejoin="round"/>
<line x1="869.3" y1="234.8" x2="869.3" y2="221.8" stroke="#ffffff" stroke-width="1"/>
<line x1="849.3" y1="230.1" x2="849.3" y2="217.1" stroke="#ffffff" stroke-width="1"/>
<line x1="842.0" y1="221.4" x2="842.0" y2="208.4" stroke="#ffffff" stroke-width="1"/>
<line x1="851.2" y1="213.0" x2="851.2" y2="200.0" stroke="#ffffff" stroke-width="1"/>
<line x1="872.1" y1="209.0" x2="872.1" y2="196.0" stroke="#ffffff" stroke-width="1"/>
<path d="M846,238 Q850,262 886,265 L880,258 Q874,252 874,240 Z" fill="#d0d0d0" stroke="none" stroke-width="1" />
<polyline points="846.0,238.0 852.0,256.0 886.0,265.0" fill="none" stroke="#ffffff" stroke-width="1" stroke-linecap="round" stroke-linejoin="round"/>
<polyline points="846.0,226.0 852.0,244.0 880.0,252.0" fill="none" stroke="#ffffff" stroke-width="1" stroke-linecap="round" stroke-linejoin="round"/>
<polygon points="921.0,220.0 921.0,208.0 924.1,208.1 927.2,208.4 930.2,208.9 933.0,209.6 935.6,210.5 938.0,211.5 940.0,212.7 941.8,214.0 943.2,215.4 944.2,216.9 944.8,218.4 945.0,220.0 944.8,221.6 944.2,223.1 943.2,224.6 941.8,226.0 940.0,227.3 938.0,228.5 935.6,229.5 933.0,230.4 930.2,231.1 927.2,231.6 924.1,231.9 921.0,232.0" fill="#c8c8c8" stroke="none" stroke-width="1"/>
<polygon points="921.0,208.0 924.1,208.1 927.2,208.4 930.2,208.9 933.0,209.6 935.6,210.5 938.0,211.5 940.0,212.7 941.8,214.0 943.2,215.4 944.2,216.9 944.8,218.4 945.0,220.0 944.8,221.6 944.2,223.1 943.2,224.6 941.8,226.0 940.0,227.3 938.0,228.5 935.6,229.5 933.0,230.4 930.2,231.1 927.2,231.6 924.1,231.9 921.0,232.0 921.0,235.0 924.1,234.9 927.2,234.6 930.2,234.1 933.0,233.4 935.6,232.5 938.0,231.5 940.0,230.3 941.8,229.0 943.2,227.6 944.2,226.1 944.8,224.6 945.0,223.0 944.8,221.4 944.2,219.9 943.2,218.4 941.8,217.0 940.0,215.7 938.0,214.5 935.6,213.5 933.0,212.6 930.2,211.9 927.2,211.4 924.1,211.1 921.0,211.0" fill="#e8e8e8" stroke="none" stroke-width="1"/>
<polyline points="921.0,208.0 924.1,208.1 927.2,208.4 930.2,208.9 933.0,209.6 935.6,210.5 938.0,211.5 940.0,212.7 941.8,214.0 943.2,215.4 944.2,216.9 944.8,218.4 945.0,220.0 944.8,221.6 944.2,223.1 943.2,224.6 941.8,226.0 940.0,227.3 938.0,228.5 935.6,229.5 933.0,230.4 930.2,231.1 927.2,231.6 924.1,231.9 921.0,232.0" fill="none" stroke="#ffffff" stroke-width="1" stroke-linecap="round" stroke-linejoin="round"/>
<polyline points="921.0,211.0 924.1,211.1 927.2,211.4 930.2,211.9 933.0,212.6 935.6,213.5 938.0,214.5 940.0,215.7 941.8,217.0 943.2,218.4 944.2,219.9 944.8,221.4 945.0,223.0 944.8,224.6 944.2,226.1 943.2,227.6 941.8,229.0 940.0,230.3 938.0,231.5 935.6,232.5 933.0,233.4 930.2,234.1 927.2,234.6 924.1,234.9 921.0,235.0" fill="none" stroke="#909090" stroke-width="1" stroke-linecap="round" stroke-linejoin="round"/>
<polyline points="925.2,206.2 927.3,206.4 929.5,206.8 931.5,207.2 933.5,207.8 935.3,208.4 937.1,209.1 938.6,209.9 940.1,210.7 941.4,211.6 942.4,212.6 943.4,213.6 944.1,214.7 944.6,215.8 944.9,216.9 945.0,218.0 944.9,219.1 944.6,220.2 944.1,221.3 943.4,222.4 942.4,223.4 941.4,224.4 940.1,225.3 938.6,226.1 937.1,226.9 935.3,227.6 933.5,228.2 931.5,228.8 929.5,229.2 927.3,229.6 925.2,229.8" fill="none" stroke="#ffffff" stroke-width="1" stroke-linecap="round" stroke-linejoin="round"/>
<polyline points="925.2,194.2 927.3,194.4 929.5,194.8 931.5,195.2 933.5,195.8 935.3,196.4 937.1,197.1 938.6,197.9 940.1,198.7 941.4,199.6 942.4,200.6 943.4,201.6 944.1,202.7 944.6,203.8 944.9,204.9 945.0,206.0 944.9,207.1 944.6,208.2 944.1,209.3 943.4,210.4 942.4,211.4 941.4,212.4 940.1,213.3 938.6,214.1 937.1,214.9 935.3,215.6 933.5,216.2 931.5,216.8 929.5,217.2 927.3,217.6 925.2,217.8" fill="none" stroke="#ffffff" stroke-width="1" stroke-linecap="round" stroke-linejoin="round"/>
<line x1="925.2" y1="206.2" x2="925.2" y2="194.2" stroke="#ffffff" stroke-width="1"/>
<line x1="942.4" y1="212.6" x2="942.4" y2="200.6" stroke="#ffffff" stroke-width="1"/>
<line x1="942.4" y1="223.4" x2="942.4" y2="211.4" stroke="#ffffff" stroke-width="1"/>
<line x1="925.2" y1="229.8" x2="925.2" y2="217.8" stroke="#ffffff" stroke-width="1"/>
<ellipse cx="869" cy="268" rx="5" ry="2.5" fill="none" stroke="#fff" stroke-width="1"/>
<ellipse cx="869" cy="275" rx="5" ry="2.5" fill="none" stroke="#fff" stroke-width="1"/>
<polyline points="924.0,286.0 924.0,350.0" fill="none" stroke="#ffffff" stroke-width="1" stroke-linecap="round" stroke-linejoin="round"/>
<polyline points="931.0,286.0 931.0,350.0" fill="none" stroke="#ffffff" stroke-width="1" stroke-linecap="round" stroke-linejoin="round"/>
<polyline points="924.0,290.0 931.0,290.0" fill="none" stroke="#ffffff" stroke-width="1" stroke-linecap="round" stroke-linejoin="round"/>
<polyline points="924.0,296.0 931.0,296.0" fill="none" stroke="#ffffff" stroke-width="1" stroke-linecap="round" stroke-linejoin="round"/>
<polyline points="924.0,302.0 931.0,302.0" fill="none" stroke="#ffffff" stroke-width="1" stroke-linecap="round" stroke-linejoin="round"/>
<polyline points="924.0,308.0 931.0,308.0" fill="none" stroke="#ffffff" stroke-width="1" stroke-linecap="round" stroke-linejoin="round"/>
<polyline points="924.0,314.0 931.0,314.0" fill="none" stroke="#ffffff" stroke-width="1" stroke-linecap="round" stroke-linejoin="round"/>
<polyline points="924.0,320.0 931.0,320.0" fill="none" stroke="#ffffff" stroke-width="1" stroke-linecap="round" stroke-linejoin="round"/>
<polyline points="924.0,326.0 931.0,326.0" fill="none" stroke="#ffffff" stroke-width="1" stroke-linecap="round" stroke-linejoin="round"/>
<polyline points="924.0,332.0 931.0,332.0" fill="none" stroke="#ffffff" stroke-width="1" stroke-linecap="round" stroke-linejoin="round"/>
<polyline points="924.0,338.0 931.0,338.0" fill="none" stroke="#ffffff" stroke-width="1" stroke-linecap="round" stroke-linejoin="round"/>
<polyline points="924.0,344.0 931.0,344.0" fill="none" stroke="#ffffff" stroke-width="1" stroke-linecap="round" stroke-linejoin="round"/>
<polygon points="874.0,302.0 874.0,317.0 871.1,316.9 868.3,316.5 865.6,315.9 863.0,315.0 860.6,313.9 858.4,312.6 856.5,311.1 854.9,309.5 853.7,307.7 852.7,305.9 852.2,304.0 852.0,302.0 852.2,300.0 852.7,298.1 853.7,296.3 854.9,294.5 856.5,292.9 858.4,291.4 860.6,290.1 863.0,289.0 865.6,288.1 868.3,287.5 871.1,287.1 874.0,287.0" fill="#c8c8c8" stroke="none" stroke-width="1"/>
<polygon points="874.0,317.0 871.1,316.9 868.3,316.5 865.6,315.9 863.0,315.0 860.6,313.9 858.4,312.6 856.5,311.1 854.9,309.5 853.7,307.7 852.7,305.9 852.2,304.0 852.0,302.0 852.2,300.0 852.7,298.1 853.7,296.3 854.9,294.5 856.5,292.9 858.4,291.4 860.6,290.1 863.0,289.0 865.6,288.1 868.3,287.5 871.1,287.1 874.0,287.0 874.0,290.0 871.1,290.1 868.3,290.5 865.6,291.1 863.0,292.0 860.6,293.1 858.4,294.4 856.5,295.9 854.9,297.5 853.7,299.3 852.7,301.1 852.2,303.0 852.0,305.0 852.2,307.0 852.7,308.9 853.7,310.7 854.9,312.5 856.5,314.1 858.4,315.6 860.6,316.9 863.0,318.0 865.6,318.9 868.3,319.5 871.1,319.9 874.0,320.0" fill="#e8e8e8" stroke="none" stroke-width="1"/>
<polyline points="874.0,317.0 871.1,316.9 868.3,316.5 865.6,315.9 863.0,315.0 860.6,313.9 858.4,312.6 856.5,311.1 854.9,309.5 853.7,307.7 852.7,305.9 852.2,304.0 852.0,302.0 852.2,300.0 852.7,298.1 853.7,296.3 854.9,294.5 856.5,292.9 858.4,291.4 860.6,290.1 863.0,289.0 865.6,288.1 868.3,287.5 871.1,287.1 874.0,287.0" fill="none" stroke="#ffffff" stroke-width="1" stroke-linecap="round" stroke-linejoin="round"/>
<polyline points="874.0,320.0 871.1,319.9 868.3,319.5 865.6,318.9 863.0,318.0 860.6,316.9 858.4,315.6 856.5,314.1 854.9,312.5 853.7,310.7 852.7,308.9 852.2,307.0 852.0,305.0 852.2,303.0 852.7,301.1 853.7,299.3 854.9,297.5 856.5,295.9 858.4,294.4 860.6,293.1 863.0,292.0 865.6,291.1 868.3,290.5 871.1,290.1 874.0,290.0" fill="none" stroke="#909090" stroke-width="1" stroke-linecap="round" stroke-linejoin="round"/>
<polyline points="870.2,314.8 868.1,314.5 866.1,314.0 864.2,313.4 862.3,312.7 860.6,311.9 859.0,311.0 857.5,309.9 856.2,308.8 855.0,307.6 854.1,306.3 853.3,305.0 852.7,303.6 852.2,302.2 852.0,300.8 852.0,299.3 852.2,297.9 852.6,296.5 853.2,295.1 854.0,293.8 854.9,292.5 856.1,291.3 857.4,290.2 858.9,289.1 860.5,288.2 862.2,287.3 864.0,286.6 865.9,286.0 867.9,285.6 870.0,285.3 872.1,285.1" fill="none" stroke="#ffffff" stroke-width="1" stroke-linecap="round" stroke-linejoin="round"/>
<polyline points="870.2,302.8 868.1,302.5 866.1,302.0 864.2,301.4 862.3,300.7 860.6,299.9 859.0,299.0 857.5,297.9 856.2,296.8 855.0,295.6 854.1,294.3 853.3,293.0 852.7,291.6 852.2,290.2 852.0,288.8 852.0,287.3 852.2,285.9 852.6,284.5 853.2,283.1 854.0,281.8 854.9,280.5 856.1,279.3 857.4,278.2 858.9,277.1 860.5,276.2 862.2,275.3 864.0,274.6 865.9,274.0 867.9,273.6 870.0,273.3 872.1,273.1" fill="none" stroke="#ffffff" stroke-width="1" stroke-linecap="round" stroke-linejoin="round"/>
<line x1="870.2" y1="314.8" x2="870.2" y2="302.8" stroke="#ffffff" stroke-width="1"/>
<line x1="856.8" y1="309.4" x2="856.8" y2="297.4" stroke="#ffffff" stroke-width="1"/>
<line x1="852.0" y1="299.3" x2="852.0" y2="287.3" stroke="#ffffff" stroke-width="1"/>
<line x1="858.1" y1="289.6" x2="858.1" y2="277.6" stroke="#ffffff" stroke-width="1"/>
<line x1="872.1" y1="285.1" x2="872.1" y2="273.1" stroke="#ffffff" stroke-width="1"/>
<polygon points="921.0,362.0 921.0,349.0 924.0,349.1 927.0,349.4 929.8,350.0 932.5,350.7 935.0,351.7 937.3,352.8 939.2,354.1 940.9,355.5 942.2,357.0 943.2,358.6 943.8,360.3 944.0,362.0 943.8,363.7 943.2,365.4 942.2,367.0 940.9,368.5 939.2,369.9 937.3,371.2 935.0,372.3 932.5,373.3 929.8,374.0 927.0,374.6 924.0,374.9 921.0,375.0" fill="#c8c8c8" stroke="none" stroke-width="1"/>
<polygon points="921.0,349.0 924.0,349.1 927.0,349.4 929.8,350.0 932.5,350.7 935.0,351.7 937.3,352.8 939.2,354.1 940.9,355.5 942.2,357.0 943.2,358.6 943.8,360.3 944.0,362.0 943.8,363.7 943.2,365.4 942.2,367.0 940.9,368.5 939.2,369.9 937.3,371.2 935.0,372.3 932.5,373.3 929.8,374.0 927.0,374.6 924.0,374.9 921.0,375.0 921.0,378.0 924.0,377.9 927.0,377.6 929.8,377.0 932.5,376.3 935.0,375.3 937.3,374.2 939.2,372.9 940.9,371.5 942.2,370.0 943.2,368.4 943.8,366.7 944.0,365.0 943.8,363.3 943.2,361.6 942.2,360.0 940.9,358.5 939.2,357.1 937.3,355.8 935.0,354.7 932.5,353.7 929.8,353.0 927.0,352.4 924.0,352.1 921.0,352.0" fill="#e8e8e8" stroke="none" stroke-width="1"/>
<polyline points="921.0,349.0 924.0,349.1 927.0,349.4 929.8,350.0 932.5,350.7 935.0,351.7 937.3,352.8 939.2,354.1 940.9,355.5 942.2,357.0 943.2,358.6 943.8,360.3 944.0,362.0 943.8,363.7 943.2,365.4 942.2,367.0 940.9,368.5 939.2,369.9 937.3,371.2 935.0,372.3 932.5,373.3 929.8,374.0 927.0,374.6 924.0,374.9 921.0,375.0" fill="none" stroke="#ffffff" stroke-width="1" stroke-linecap="round" stroke-linejoin="round"/>
<polyline points="921.0,352.0 924.0,352.1 927.0,352.4 929.8,353.0 932.5,353.7 935.0,354.7 937.3,355.8 939.2,357.1 940.9,358.5 942.2,360.0 943.2,361.6 943.8,363.3 944.0,365.0 943.8,366.7 943.2,368.4 942.2,370.0 940.9,371.5 939.2,372.9 937.3,374.2 935.0,375.3 932.5,376.3 929.8,377.0 927.0,377.6 924.0,377.9 921.0,378.0" fill="none" stroke="#909090" stroke-width="1" stroke-linecap="round" stroke-linejoin="round"/>
<ellipse cx="829" cy="359" rx="33" ry="17" fill="#c8c8c8" stroke="none" stroke-width="1"/>
<path d="M796,359 A33,17 0 0 0 862,359 L862,362 A33,17 0 0 1 796,362 Z" fill="#f0f0f0" stroke="none" stroke-width="1" />
<polyline points="796.0,359.0 796.2,357.2 796.7,355.5 797.6,353.7 798.9,352.1 800.4,350.5 802.3,349.0 804.5,347.6 806.9,346.4 809.6,345.2 812.5,344.3 815.6,343.5 818.8,342.8 822.1,342.4 825.6,342.1 829.0,342.0 832.4,342.1 835.9,342.4 839.2,342.8 842.4,343.5 845.5,344.3 848.4,345.2 851.1,346.4 853.5,347.6 855.7,349.0 857.6,350.5 859.1,352.1 860.4,353.7 861.3,355.5 861.8,357.2 862.0,359.0" fill="none" stroke="#ffffff" stroke-width="1" stroke-linecap="round" stroke-linejoin="round"/>
<polyline points="796.0,341.0 796.2,339.2 796.7,337.5 797.6,335.7 798.9,334.1 800.4,332.5 802.3,331.0 804.5,329.6 806.9,328.4 809.6,327.2 812.5,326.3 815.6,325.5 818.8,324.8 822.1,324.4 825.6,324.1 829.0,324.0 832.4,324.1 835.9,324.4 839.2,324.8 842.4,325.5 845.5,326.3 848.4,327.2 851.1,328.4 853.5,329.6 855.7,331.0 857.6,332.5 859.1,334.1 860.4,335.7 861.3,337.5 861.8,339.2 862.0,341.0" fill="none" stroke="#ffffff" stroke-width="1" stroke-linecap="round" stroke-linejoin="round"/>
<line x1="796.0" y1="359.0" x2="796.0" y2="341.0" stroke="#ffffff" stroke-width="1"/>
<line x1="800.4" y1="350.5" x2="800.4" y2="332.5" stroke="#ffffff" stroke-width="1"/>
<line x1="812.5" y1="344.3" x2="812.5" y2="326.3" stroke="#ffffff" stroke-width="1"/>
<line x1="829.0" y1="342.0" x2="829.0" y2="324.0" stroke="#ffffff" stroke-width="1"/>
<line x1="845.5" y1="344.3" x2="845.5" y2="326.3" stroke="#ffffff" stroke-width="1"/>
<line x1="857.6" y1="350.5" x2="857.6" y2="332.5" stroke="#ffffff" stroke-width="1"/>
<line x1="862.0" y1="359.0" x2="862.0" y2="341.0" stroke="#ffffff" stroke-width="1"/>
<path d="M796,359 A33,17 0 0 0 862,359" fill="none" stroke="#fff" stroke-width="1"/>
<path d="M800,350 A30,14 0 0 0 858,350" fill="none" stroke="#fff" stroke-width="1" stroke-dasharray="3,2"/>
<polyline points="808.0,372.0 808.0,356.0" fill="none" stroke="#ffffff" stroke-width="1" stroke-linecap="round" stroke-linejoin="round"/>
<polyline points="829.0,376.0 829.0,360.0" fill="none" stroke="#ffffff" stroke-width="1" stroke-linecap="round" stroke-linejoin="round"/>
<polyline points="850.0,372.0 850.0,356.0" fill="none" stroke="#ffffff" stroke-width="1" stroke-linecap="round" stroke-linejoin="round"/>
<polyline points="856.0,340.0 856.0,458.0" fill="none" stroke="#ffffff" stroke-width="1" stroke-linecap="round" stroke-linejoin="round"/>
<polyline points="862.0,340.0 862.0,458.0" fill="none" stroke="#ffffff" stroke-width="1" stroke-linecap="round" stroke-linejoin="round"/>
<polyline points="868.0,340.0 868.0,458.0" fill="none" stroke="#ffffff" stroke-width="1" stroke-linecap="round" stroke-linejoin="round"/>
<polyline points="873.0,340.0 873.0,458.0" fill="none" stroke="#ffffff" stroke-width="1" stroke-linecap="round" stroke-linejoin="round"/>
<path d="M856,346 Q864,351873,346" fill="none" stroke="#fff" stroke-width="1"/>
<path d="M856,354 Q864,359873,354" fill="none" stroke="#fff" stroke-width="1"/>
<path d="M856,362 Q864,367873,362" fill="none" stroke="#fff" stroke-width="1"/>
<path d="M856,370 Q864,375873,370" fill="none" stroke="#fff" stroke-width="1"/>
<path d="M856,378 Q864,383873,378" fill="none" stroke="#fff" stroke-width="1"/>
<path d="M856,386 Q864,391873,386" fill="none" stroke="#fff" stroke-width="1"/>
<path d="M856,394 Q864,399873,394" fill="none" stroke="#fff" stroke-width="1"/>
<path d="M856,402 Q864,407873,402" fill="none" stroke="#fff" stroke-width="1"/>
<path d="M856,410 Q864,415873,410" fill="none" stroke="#fff" stroke-width="1"/>
<path d="M856,418 Q864,423873,418" fill="none" stroke="#fff" stroke-width="1"/>
<path d="M856,426 Q864,431873,426" fill="none" stroke="#fff" stroke-width="1"/>
<path d="M856,434 Q864,439873,434" fill="none" stroke="#fff" stroke-width="1"/>
<path d="M856,442 Q864,447873,442" fill="none" stroke="#fff" stroke-width="1"/>
<path d="M856,450 Q864,455873,450" fill="none" stroke="#fff" stroke-width="1"/>
<polygon points="819.0,325.0 822.5,352.0 815.5,352.0" fill="#f8dc20" stroke="none" stroke-width="1"/>
<polyline points="816.0,334.4 822.0,334.4" fill="none" stroke="#c8a800" stroke-width="1" stroke-linecap="round" stroke-linejoin="round"/>
<polyline points="816.0,339.9 822.0,339.9" fill="none" stroke="#c8a800" stroke-width="1" stroke-linecap="round" stroke-linejoin="round"/>
<polyline points="816.0,345.2 822.0,345.2" fill="none" stroke="#c8a800" stroke-width="1" stroke-linecap="round" stroke-linejoin="round"/>
<polygon points="835.5,317.0 839.0,345.0 832.0,345.0" fill="#f8dc20" stroke="none" stroke-width="1"/>
<polyline points="832.5,326.8 838.5,326.8" fill="none" stroke="#c8a800" stroke-width="1" stroke-linecap="round" stroke-linejoin="round"/>
<polyline points="832.5,332.4 838.5,332.4" fill="none" stroke="#c8a800" stroke-width="1" stroke-linecap="round" stroke-linejoin="round"/>
<polyline points="832.5,338.0 838.5,338.0" fill="none" stroke="#c8a800" stroke-width="1" stroke-linecap="round" stroke-linejoin="round"/>
<polygon points="829.0,333.0 832.5,350.0 825.5,350.0" fill="#f8dc20" stroke="none" stroke-width="1"/>
<polyline points="826.0,338.9 832.0,338.9" fill="none" stroke="#c8a800" stroke-width="1" stroke-linecap="round" stroke-linejoin="round"/>
<polyline points="826.0,342.4 832.0,342.4" fill="none" stroke="#c8a800" stroke-width="1" stroke-linecap="round" stroke-linejoin="round"/>
<polyline points="826.0,345.8 832.0,345.8" fill="none" stroke="#c8a800" stroke-width="1" stroke-linecap="round" stroke-linejoin="round"/>
<polyline points="815.0,352.0 838.0,344.0 845.0,342.0" fill="none" stroke="#f8dc20" stroke-width="2.5" stroke-linecap="round" stroke-linejoin="round"/>
<polyline points="806.7,363.0 829.0,353.6 830.0,358.0" fill="none" stroke="#00d000" stroke-width="1.5" stroke-linecap="round" stroke-linejoin="round"/>
<polygon points="931.0,402.0 979.0,398.0 1008.0,420.0 961.0,443.0 940.0,433.0" fill="#c8c8c8" stroke="none" stroke-width="1"/>
<polygon points="940.0,433.0 961.0,443.0 1008.0,420.0 1008.0,425.0 961.0,448.0 940.0,438.0" fill="#e6e6e6" stroke="none" stroke-width="1"/>
<polyline points="940.0,394.0 985.0,384.0 1008.0,400.0 1008.0,420.0" fill="none" stroke="#ffffff" stroke-width="1" stroke-linecap="round" stroke-linejoin="round"/>
<polyline points="931.0,385.0 979.0,380.0" fill="none" stroke="#ffffff" stroke-width="1" stroke-linecap="round" stroke-linejoin="round"/>
<polyline points="956.2,401.2 956.2,391.0" fill="none" stroke="#f8dc20" stroke-width="2.2" stroke-linecap="round" stroke-linejoin="round"/>
<polyline points="954.2,396.1 958.2,396.1" fill="none" stroke="#e0c000" stroke-width="1.5" stroke-linecap="round" stroke-linejoin="round"/>
<polyline points="943.6,410.4 943.6,402.5" fill="none" stroke="#f8dc20" stroke-width="2.2" stroke-linecap="round" stroke-linejoin="round"/>
<polyline points="941.6,406.5 945.6,406.5" fill="none" stroke="#e0c000" stroke-width="1.5" stroke-linecap="round" stroke-linejoin="round"/>
<polyline points="942.9,409.6 942.9,404.3" fill="none" stroke="#f8dc20" stroke-width="2.2" stroke-linecap="round" stroke-linejoin="round"/>
<polyline points="940.9,406.9 944.9,406.9" fill="none" stroke="#e0c000" stroke-width="1.5" stroke-linecap="round" stroke-linejoin="round"/>
<polyline points="961.7,399.6 961.7,393.8" fill="none" stroke="#f8dc20" stroke-width="2.2" stroke-linecap="round" stroke-linejoin="round"/>
<polyline points="959.7,396.7 963.7,396.7" fill="none" stroke="#e0c000" stroke-width="1.5" stroke-linecap="round" stroke-linejoin="round"/>
<polyline points="961.2,420.7 961.2,414.7" fill="none" stroke="#f8dc20" stroke-width="2.2" stroke-linecap="round" stroke-linejoin="round"/>
<polyline points="959.2,417.7 963.2,417.7" fill="none" stroke="#e0c000" stroke-width="1.5" stroke-linecap="round" stroke-linejoin="round"/>
<polyline points="951.2,413.9 951.2,401.3" fill="none" stroke="#f8dc20" stroke-width="2.2" stroke-linecap="round" stroke-linejoin="round"/>
<polyline points="949.2,407.6 953.2,407.6" fill="none" stroke="#e0c000" stroke-width="1.5" stroke-linecap="round" stroke-linejoin="round"/>
<polyline points="968.9,409.6 968.9,396.8" fill="none" stroke="#f8dc20" stroke-width="2.2" stroke-linecap="round" stroke-linejoin="round"/>
<polyline points="966.9,403.2 970.9,403.2" fill="none" stroke="#e0c000" stroke-width="1.5" stroke-linecap="round" stroke-linejoin="round"/>
<polyline points="942.3,419.3 942.3,412.0" fill="none" stroke="#f8dc20" stroke-width="2.2" stroke-linecap="round" stroke-linejoin="round"/>
<polyline points="940.3,415.7 944.3,415.7" fill="none" stroke="#e0c000" stroke-width="1.5" stroke-linecap="round" stroke-linejoin="round"/>
<polyline points="947.2,399.2 947.2,391.7" fill="none" stroke="#f8dc20" stroke-width="2.2" stroke-linecap="round" stroke-linejoin="round"/>
<polyline points="945.2,395.4 949.2,395.4" fill="none" stroke="#e0c000" stroke-width="1.5" stroke-linecap="round" stroke-linejoin="round"/>
<polyline points="980.8,405.0 980.8,395.3" fill="none" stroke="#f8dc20" stroke-width="2.2" stroke-linecap="round" stroke-linejoin="round"/>
<polyline points="978.8,400.1 982.8,400.1" fill="none" stroke="#e0c000" stroke-width="1.5" stroke-linecap="round" stroke-linejoin="round"/>
<polyline points="971.9,409.3 971.9,399.9" fill="none" stroke="#f8dc20" stroke-width="2.2" stroke-linecap="round" stroke-linejoin="round"/>
<polyline points="969.9,404.6 973.9,404.6" fill="none" stroke="#e0c000" stroke-width="1.5" stroke-linecap="round" stroke-linejoin="round"/>
<polyline points="943.1,397.0 943.1,390.4" fill="none" stroke="#f8dc20" stroke-width="2.2" stroke-linecap="round" stroke-linejoin="round"/>
<polyline points="941.1,393.7 945.1,393.7" fill="none" stroke="#e0c000" stroke-width="1.5" stroke-linecap="round" stroke-linejoin="round"/>
<polyline points="974.0,411.1 974.0,403.5" fill="none" stroke="#f8dc20" stroke-width="2.2" stroke-linecap="round" stroke-linejoin="round"/>
<polyline points="972.0,407.3 976.0,407.3" fill="none" stroke="#e0c000" stroke-width="1.5" stroke-linecap="round" stroke-linejoin="round"/>
<polyline points="969.3,411.2 969.3,403.8" fill="none" stroke="#f8dc20" stroke-width="2.2" stroke-linecap="round" stroke-linejoin="round"/>
<polyline points="967.3,407.5 971.3,407.5" fill="none" stroke="#e0c000" stroke-width="1.5" stroke-linecap="round" stroke-linejoin="round"/>
<polyline points="979.7,419.3 979.7,412.4" fill="none" stroke="#f8dc20" stroke-width="2.2" stroke-linecap="round" stroke-linejoin="round"/>
<polyline points="977.7,415.9 981.7,415.9" fill="none" stroke="#e0c000" stroke-width="1.5" stroke-linecap="round" stroke-linejoin="round"/>
<polyline points="968.7,413.2 968.7,401.2" fill="none" stroke="#f8dc20" stroke-width="2.2" stroke-linecap="round" stroke-linejoin="round"/>
<polyline points="966.7,407.2 970.7,407.2" fill="none" stroke="#e0c000" stroke-width="1.5" stroke-linecap="round" stroke-linejoin="round"/>
<polyline points="942.0,418.0 960.0,412.0 985.0,418.0 1000.0,425.0" fill="none" stroke="#f8dc20" stroke-width="2" stroke-linecap="round" stroke-linejoin="round"/>
<polyline points="950.0,428.0 975.0,422.0 992.0,430.0" fill="none" stroke="#e0c000" stroke-width="2" stroke-linecap="round" stroke-linejoin="round"/>
<polyline points="965.0,443.0 965.0,460.0" fill="none" stroke="#f8dc20" stroke-width="2" stroke-linecap="round" stroke-linejoin="round"/>
<polyline points="993.0,427.0 993.0,462.0" fill="none" stroke="#f8dc20" stroke-width="2" stroke-linecap="round" stroke-linejoin="round"/>
<polyline points="930.0,385.0 960.0,378.0 985.0,382.0 1006.0,396.0 1006.0,418.0" fill="none" stroke="#ffffff" stroke-width="1" stroke-linecap="round" stroke-linejoin="round"/>
<path d="M843,445 Q843,490 880,497 L915,500 L915,487 Q880,484 874,470 L874,440 Q850,440 843,445 Z" fill="#c8c8c8" stroke="none" stroke-width="1" />
<path d="M843,478 Q846,494 880,500 L915,503 L915,500 L880,497 Q846,491 843,475 Z" fill="#eeeeee" stroke="none" stroke-width="1" />
<polyline points="843.0,470.0 850.0,485.0 880.0,490.0 915.0,494.0" fill="none" stroke="#ffffff" stroke-width="1" stroke-linecap="round" stroke-linejoin="round"/>
<polyline points="843.0,456.0 850.0,471.0 880.0,476.0 915.0,480.0" fill="none" stroke="#ffffff" stroke-width="1" stroke-linecap="round" stroke-linejoin="round"/>
<polyline points="843.0,470.0 843.0,456.0" fill="none" stroke="#ffffff" stroke-width="1" stroke-linecap="round" stroke-linejoin="round"/>
<polyline points="852.0,484.0 852.0,470.0" fill="none" stroke="#ffffff" stroke-width="1" stroke-linecap="round" stroke-linejoin="round"/>
<polyline points="866.0,489.0 866.0,475.0" fill="none" stroke="#ffffff" stroke-width="1" stroke-linecap="round" stroke-linejoin="round"/>
<polyline points="880.0,490.0 880.0,476.0" fill="none" stroke="#ffffff" stroke-width="1" stroke-linecap="round" stroke-linejoin="round"/>
<polyline points="897.0,492.0 897.0,478.0" fill="none" stroke="#ffffff" stroke-width="1" stroke-linecap="round" stroke-linejoin="round"/>
<polyline points="915.0,494.0 915.0,480.0" fill="none" stroke="#ffffff" stroke-width="1" stroke-linecap="round" stroke-linejoin="round"/>
<polyline points="860.0,455.0 875.0,462.0 890.0,470.0 900.0,468.0" fill="none" stroke="#e8a8c8" stroke-width="3" stroke-linecap="round" stroke-linejoin="round"/>
<polyline points="862.0,455.0 862.0,475.0" fill="none" stroke="#e8a8c8" stroke-width="2" stroke-linecap="round" stroke-linejoin="round"/>
<polygon points="818.0,450.0 860.0,445.0 860.0,465.0 818.0,470.0" fill="#c8c8c8" stroke="none" stroke-width="1"/>
<polyline points="818.0,465.0 860.0,460.0" fill="none" stroke="#ffffff" stroke-width="1" stroke-linecap="round" stroke-linejoin="round"/>
<polyline points="818.0,453.0 860.0,448.0" fill="none" stroke="#ffffff" stroke-width="1" stroke-linecap="round" stroke-linejoin="round"/>
<line x1="818.0" y1="465.0" x2="818.0" y2="453.0" stroke="#ffffff" stroke-width="1"/>
<line x1="832.0" y1="463.3" x2="832.0" y2="451.3" stroke="#ffffff" stroke-width="1"/>
<line x1="846.0" y1="461.7" x2="846.0" y2="449.7" stroke="#ffffff" stroke-width="1"/>
<polyline points="829.0,446.0 829.0,522.0" fill="none" stroke="#008800" stroke-width="6" stroke-linecap="round" stroke-linejoin="round"/>
<polyline points="829.0,446.0 829.0,522.0" fill="none" stroke="#00d000" stroke-width="3.7199999999999998" stroke-linecap="round" stroke-linejoin="round"/>
<ellipse cx="829" cy="445" rx="4" ry="3" fill="#30e030" stroke="none" stroke-width="1"/>
<polygon points="939.0,561.0 980.0,557.0 1005.0,565.0 1004.0,576.0 972.0,579.0 940.0,580.0" fill="#c8c8c8" stroke="none" stroke-width="1"/>
<polygon points="940.0,580.0 972.0,579.0 1004.0,576.0 1004.0,579.0 972.0,582.0 940.0,583.0" fill="#eeeeee" stroke="none" stroke-width="1"/>
<polyline points="939.0,561.0 980.0,557.0 1005.0,565.0" fill="none" stroke="#ffffff" stroke-width="1" stroke-linecap="round" stroke-linejoin="round"/>
<polyline points="939.0,548.0 980.0,544.0 1005.0,552.0" fill="none" stroke="#ffffff" stroke-width="1" stroke-linecap="round" stroke-linejoin="round"/>
<line x1="939.0" y1="561.0" x2="939.0" y2="548.0" stroke="#ffffff" stroke-width="1"/>
<line x1="947.2" y1="560.2" x2="947.2" y2="547.2" stroke="#ffffff" stroke-width="1"/>
<line x1="955.4" y1="559.4" x2="955.4" y2="546.4" stroke="#ffffff" stroke-width="1"/>
<line x1="963.6" y1="558.6" x2="963.6" y2="545.6" stroke="#ffffff" stroke-width="1"/>
<line x1="971.8" y1="557.8" x2="971.8" y2="544.8" stroke="#ffffff" stroke-width="1"/>
<line x1="980.0" y1="557.0" x2="980.0" y2="544.0" stroke="#ffffff" stroke-width="1"/>
<line x1="985.0" y1="558.6" x2="985.0" y2="545.6" stroke="#ffffff" stroke-width="1"/>
<line x1="990.0" y1="560.2" x2="990.0" y2="547.2" stroke="#ffffff" stroke-width="1"/>
<line x1="995.0" y1="561.8" x2="995.0" y2="548.8" stroke="#ffffff" stroke-width="1"/>
<line x1="1000.0" y1="563.4" x2="1000.0" y2="550.4" stroke="#ffffff" stroke-width="1"/>
<polyline points="910.0,505.0 940.0,520.0 940.0,555.0" fill="none" stroke="#ffffff" stroke-width="1" stroke-linecap="round" stroke-linejoin="round"/>
<polyline points="918.0,510.0 918.0,560.0" fill="none" stroke="#ffffff" stroke-width="1" stroke-linecap="round" stroke-linejoin="round"/>
<polygon points="998.0,532.0 1026.7,486.0 1117.4,568.0 1117.4,575.0 1083.4,603.0 998.0,539.0" fill="#a87662" stroke="none" stroke-width="1"/>
<polygon points="998.0,532.0 1026.7,486.0 1117.4,568.0 1083.4,597.0" fill="#c48e7a" stroke="none" stroke-width="1"/>
<polygon points="1010.0,525.0 1030.0,500.0 1100.0,565.0 1078.0,585.0" fill="#b8846f" stroke="none" stroke-width="1"/>
<polygon points="981.0,576.0 1013.5,564.5 1045.6,591.0 1045.6,606.0 1013.5,629.0 981.0,614.0" fill="#a87662" stroke="none" stroke-width="1"/>
<polygon points="981.0,576.0 1013.5,564.5 1045.6,591.0 1013.5,622.0 981.0,607.0" fill="#c48e7a" stroke="none" stroke-width="1"/>
<polyline points="1072.0,544.0 1090.0,552.0" fill="none" stroke="#7a5446" stroke-width="20" stroke-linecap="round" stroke-linejoin="round"/>
<polyline points="1072.0,544.0 1090.0,552.0" fill="none" stroke="#b07a68" stroke-width="17.2" stroke-linecap="round" stroke-linejoin="round"/>
<polyline points="1073.2,541.3 1091.2,549.3" fill="none" stroke="#c8927f" stroke-width="11.0" stroke-linecap="round" stroke-linejoin="round"/>
<polyline points="1073.8,539.9 1091.8,547.9" fill="none" stroke="#d4a18e" stroke-width="5.0" stroke-linecap="round" stroke-linejoin="round"/>
<polyline points="1008.0,578.0 1022.0,586.0" fill="none" stroke="#7a5446" stroke-width="18" stroke-linecap="round" stroke-linejoin="round"/>
<polyline points="1008.0,578.0 1022.0,586.0" fill="none" stroke="#b07a68" stroke-width="15.48" stroke-linecap="round" stroke-linejoin="round"/>
<polyline points="1009.3,575.7 1023.3,583.7" fill="none" stroke="#c8927f" stroke-width="9.9" stroke-linecap="round" stroke-linejoin="round"/>
<polyline points="1010.0,574.5 1024.0,582.5" fill="none" stroke="#d4a18e" stroke-width="4.5" stroke-linecap="round" stroke-linejoin="round"/>
<polyline points="1012.0,510.0 1012.0,574.0" fill="none" stroke="#9a0a5a" stroke-width="5" stroke-linecap="round" stroke-linejoin="round"/>
<polyline points="1012.0,510.0 1012.0,574.0" fill="none" stroke="#e01888" stroke-width="3.1" stroke-linecap="round" stroke-linejoin="round"/>
<polyline points="1033.0,542.0 1033.0,580.0" fill="none" stroke="#9a0a5a" stroke-width="5" stroke-linecap="round" stroke-linejoin="round"/>
<polyline points="1033.0,542.0 1033.0,580.0" fill="none" stroke="#e01888" stroke-width="3.1" stroke-linecap="round" stroke-linejoin="round"/>
<polyline points="1053.0,544.0 1053.0,610.0" fill="none" stroke="#9a0a5a" stroke-width="5" stroke-linecap="round" stroke-linejoin="round"/>
<polyline points="1053.0,544.0 1053.0,610.0" fill="none" stroke="#e01888" stroke-width="3.1" stroke-linecap="round" stroke-linejoin="round"/>
<polyline points="1073.0,534.0 1073.0,600.0" fill="none" stroke="#9a0a5a" stroke-width="5" stroke-linecap="round" stroke-linejoin="round"/>
<polyline points="1073.0,534.0 1073.0,600.0" fill="none" stroke="#e01888" stroke-width="3.1" stroke-linecap="round" stroke-linejoin="round"/>
<polygon points="1008.0,523.0 1032.0,510.0 1076.0,527.0 1051.0,544.0 1008.0,532.0" fill="#c8c8c8" stroke="none" stroke-width="1"/>
<polyline points="1008.0,523.0 1032.0,510.0 1076.0,527.0" fill="none" stroke="#ffffff" stroke-width="1" stroke-linecap="round" stroke-linejoin="round"/>
<polyline points="1008.0,502.0 1032.0,490.0 1076.0,507.0 1076.0,527.0" fill="none" stroke="#ffffff" stroke-width="1" stroke-linecap="round" stroke-linejoin="round"/>
<polyline points="1008.0,523.0 1008.0,503.0" fill="none" stroke="#ffffff" stroke-width="1" stroke-linecap="round" stroke-linejoin="round"/>
<polyline points="1032.0,510.0 1032.0,490.0" fill="none" stroke="#ffffff" stroke-width="1" stroke-linecap="round" stroke-linejoin="round"/>
<polyline points="1055.0,519.0 1055.0,499.0" fill="none" stroke="#ffffff" stroke-width="1" stroke-linecap="round" stroke-linejoin="round"/>
<polyline points="1076.0,527.0 1076.0,507.0" fill="none" stroke="#ffffff" stroke-width="1" stroke-linecap="round" stroke-linejoin="round"/>
<polyline points="1051.0,544.0 1051.0,525.0" fill="none" stroke="#ffffff" stroke-width="1" stroke-linecap="round" stroke-linejoin="round"/>
<polyline points="1000.0,559.0 1089.0,517.0 1091.0,530.0 1076.0,536.0 1065.0,530.0" fill="none" stroke="#a89000" stroke-width="3.5" stroke-linecap="round" stroke-linejoin="round"/>
<polyline points="1000.0,559.0 1089.0,517.0 1091.0,530.0 1076.0,536.0 1065.0,530.0" fill="none" stroke="#f8dc20" stroke-width="2.17" stroke-linecap="round" stroke-linejoin="round"/>
<polyline points="998.0,540.0 998.0,532.0 1024.0,520.0 1048.0,500.0 1065.0,495.0 1065.0,505.0" fill="none" stroke="#f8dc20" stroke-width="2.5" stroke-linecap="round" stroke-linejoin="round"/>
<polyline points="1040.0,515.0 1075.0,500.0 1078.0,515.0 1105.0,537.0" fill="none" stroke="#f8dc20" stroke-width="2.5" stroke-linecap="round" stroke-linejoin="round"/>
<polyline points="1004.0,575.0 1004.0,550.0 1012.0,545.0" fill="none" stroke="#f8dc20" stroke-width="2.5" stroke-linecap="round" stroke-linejoin="round"/>
<polyline points="975.0,580.0 975.0,600.0 1033.0,642.0" fill="none" stroke="#a89000" stroke-width="3" stroke-linecap="round" stroke-linejoin="round"/>
<polyline points="975.0,580.0 975.0,600.0 1033.0,642.0" fill="none" stroke="#f8dc20" stroke-width="1.8599999999999999" stroke-linecap="round" stroke-linejoin="round"/>
<polyline points="983.0,560.0 983.0,588.0 1036.0,614.0" fill="none" stroke="#a89000" stroke-width="3" stroke-linecap="round" stroke-linejoin="round"/>
<polyline points="983.0,560.0 983.0,588.0 1036.0,614.0" fill="none" stroke="#f8dc20" stroke-width="1.8599999999999999" stroke-linecap="round" stroke-linejoin="round"/>
<polyline points="1000.0,590.0 1060.0,624.0" fill="none" stroke="#f8dc20" stroke-width="2" stroke-linecap="round" stroke-linejoin="round"/>
<polygon points="631.0,807.0 675.0,787.0 702.0,804.0 662.0,826.0" fill="#b88270" stroke="none" stroke-width="1"/>
<rect x="649" y="774" width="25" height="33" fill="url(#col)"/>
<ellipse cx="661.5" cy="807" rx="12.5" ry="5" fill="#b0806e" stroke="none" stroke-width="1"/>
<polyline points="762.0,700.0 800.0,720.0" fill="none" stroke="#7a5446" stroke-width="26" stroke-linecap="round" stroke-linejoin="round"/>
<polyline points="762.0,700.0 800.0,720.0" fill="none" stroke="#b07a68" stroke-width="22.36" stroke-linecap="round" stroke-linejoin="round"/>
<polyline points="763.8,696.5 801.8,716.5" fill="none" stroke="#c8927f" stroke-width="14.3" stroke-linecap="round" stroke-linejoin="round"/>
<polyline points="764.7,694.8 802.7,714.8" fill="none" stroke="#d4a18e" stroke-width="6.5" stroke-linecap="round" stroke-linejoin="round"/>
<rect x="776" y="712" width="20" height="36" fill="url(#col)"/>
<polyline points="700.0,740.0 735.0,760.0" fill="none" stroke="#7a5446" stroke-width="20" stroke-linecap="round" stroke-linejoin="round"/>
<polyline points="700.0,740.0 735.0,760.0" fill="none" stroke="#b07a68" stroke-width="17.2" stroke-linecap="round" stroke-linejoin="round"/>
<polyline points="701.5,737.4 736.5,757.4" fill="none" stroke="#c8927f" stroke-width="11.0" stroke-linecap="round" stroke-linejoin="round"/>
<polyline points="702.2,736.1 737.2,756.1" fill="none" stroke="#d4a18e" stroke-width="5.0" stroke-linecap="round" stroke-linejoin="round"/>
<rect x="704" y="748" width="20" height="34" fill="url(#col)"/>
<polyline points="870.0,690.0 910.0,700.0" fill="none" stroke="#7a5446" stroke-width="16" stroke-linecap="round" stroke-linejoin="round"/>
<polyline points="870.0,690.0 910.0,700.0" fill="none" stroke="#b07a68" stroke-width="13.76" stroke-linecap="round" stroke-linejoin="round"/>
<polyline points="870.6,687.7 910.6,697.7" fill="none" stroke="#c8927f" stroke-width="8.8" stroke-linecap="round" stroke-linejoin="round"/>
<polyline points="870.9,686.5 910.9,696.5" fill="none" stroke="#d4a18e" stroke-width="4.0" stroke-linecap="round" stroke-linejoin="round"/>
<polyline points="623.0,660.0 623.0,839.0" fill="none" stroke="#9a0a5a" stroke-width="8" stroke-linecap="round" stroke-linejoin="round"/>
<polyline points="623.0,660.0 623.0,839.0" fill="none" stroke="#e01888" stroke-width="4.96" stroke-linecap="round" stroke-linejoin="round"/>
<polyline points="745.0,592.0 745.0,800.0" fill="none" stroke="#9a0a5a" stroke-width="8" stroke-linecap="round" stroke-linejoin="round"/>
<polyline points="745.0,592.0 745.0,800.0" fill="none" stroke="#e01888" stroke-width="4.96" stroke-linecap="round" stroke-linejoin="round"/>
<polyline points="867.0,527.0 867.0,720.0" fill="none" stroke="#9a0a5a" stroke-width="7" stroke-linecap="round" stroke-linejoin="round"/>
<polyline points="867.0,527.0 867.0,720.0" fill="none" stroke="#e01888" stroke-width="4.34" stroke-linecap="round" stroke-linejoin="round"/>
<polyline points="583.0,715.0 630.0,740.0" fill="none" stroke="#9a0a5a" stroke-width="6" stroke-linecap="round" stroke-linejoin="round"/>
<polyline points="583.0,715.0 630.0,740.0" fill="none" stroke="#e01888" stroke-width="3.7199999999999998" stroke-linecap="round" stroke-linejoin="round"/>
<polyline points="628.0,790.0 853.0,668.0" fill="none" stroke="#9a0a5a" stroke-width="7" stroke-linecap="round" stroke-linejoin="round"/>
<polyline points="628.0,790.0 853.0,668.0" fill="none" stroke="#e01888" stroke-width="4.34" stroke-linecap="round" stroke-linejoin="round"/>
<polyline points="590.0,755.0 628.0,772.0" fill="none" stroke="#9a0a5a" stroke-width="6" stroke-linecap="round" stroke-linejoin="round"/>
<polyline points="590.0,755.0 628.0,772.0" fill="none" stroke="#e01888" stroke-width="3.7199999999999998" stroke-linecap="round" stroke-linejoin="round"/>
<polyline points="760.0,700.0 900.0,640.0" fill="none" stroke="#9a0a5a" stroke-width="5" stroke-linecap="round" stroke-linejoin="round"/>
<polyline points="760.0,700.0 900.0,640.0" fill="none" stroke="#e01888" stroke-width="3.1" stroke-linecap="round" stroke-linejoin="round"/>
<polyline points="740.0,717.0 857.0,655.0" fill="none" stroke="#008800" stroke-width="5" stroke-linecap="round" stroke-linejoin="round"/>
<polyline points="740.0,717.0 857.0,655.0" fill="none" stroke="#00d000" stroke-width="3.1" stroke-linecap="round" stroke-linejoin="round"/>
<polyline points="770.0,683.0 820.0,707.0 878.0,740.0" fill="none" stroke="#008800" stroke-width="6" stroke-linecap="round" stroke-linejoin="round"/>
<polyline points="770.0,683.0 820.0,707.0 878.0,740.0" fill="none" stroke="#00d000" stroke-width="3.7199999999999998" stroke-linecap="round" stroke-linejoin="round"/>
<polyline points="790.0,675.0 912.0,693.0" fill="none" stroke="#008800" stroke-width="4" stroke-linecap="round" stroke-linejoin="round"/>
<polyline points="790.0,675.0 912.0,693.0" fill="none" stroke="#00d000" stroke-width="2.48" stroke-linecap="round" stroke-linejoin="round"/>
<polyline points="897.0,692.0 897.0,745.0 890.0,750.0" fill="none" stroke="#008800" stroke-width="5" stroke-linecap="round" stroke-linejoin="round"/>
<polyline points="897.0,692.0 897.0,745.0 890.0,750.0" fill="none" stroke="#00d000" stroke-width="3.1" stroke-linecap="round" stroke-linejoin="round"/>
<polyline points="868.0,653.0 868.0,733.0" fill="none" stroke="#008800" stroke-width="5" stroke-linecap="round" stroke-linejoin="round"/>
<polyline points="868.0,653.0 868.0,733.0" fill="none" stroke="#00d000" stroke-width="3.1" stroke-linecap="round" stroke-linejoin="round"/>
<polyline points="740.0,733.0 783.0,755.0" fill="none" stroke="#008800" stroke-width="5" stroke-linecap="round" stroke-linejoin="round"/>
<polyline points="740.0,733.0 783.0,755.0" fill="none" stroke="#00d000" stroke-width="3.1" stroke-linecap="round" stroke-linejoin="round"/>
<polyline points="628.0,764.0 641.0,768.0 669.0,753.0 760.0,705.0" fill="none" stroke="#008800" stroke-width="5" stroke-linecap="round" stroke-linejoin="round"/>
<polyline points="628.0,764.0 641.0,768.0 669.0,753.0 760.0,705.0" fill="none" stroke="#00d000" stroke-width="3.1" stroke-linecap="round" stroke-linejoin="round"/>
<polyline points="800.0,690.0 880.0,730.0" fill="none" stroke="#008800" stroke-width="3" stroke-linecap="round" stroke-linejoin="round"/>
<polyline points="800.0,690.0 880.0,730.0" fill="none" stroke="#00d000" stroke-width="1.8599999999999999" stroke-linecap="round" stroke-linejoin="round"/>
<polyline points="750.0,700.0 860.0,760.0" fill="none" stroke="#008800" stroke-width="3" stroke-linecap="round" stroke-linejoin="round"/>
<polyline points="750.0,700.0 860.0,760.0" fill="none" stroke="#00d000" stroke-width="1.8599999999999999" stroke-linecap="round" stroke-linejoin="round"/>
<polyline points="843.0,693.0 880.0,708.0" fill="none" stroke="#a89000" stroke-width="4" stroke-linecap="round" stroke-linejoin="round"/>
<polyline points="843.0,693.0 880.0,708.0" fill="none" stroke="#f8dc20" stroke-width="2.48" stroke-linecap="round" stroke-linejoin="round"/>
<polyline points="800.0,670.0 900.0,720.0" fill="none" stroke="#f8dc20" stroke-width="2" stroke-linecap="round" stroke-linejoin="round"/>
<polyline points="810.0,665.0 910.0,712.0" fill="none" stroke="#f8dc20" stroke-width="2" stroke-linecap="round" stroke-linejoin="round"/>
<polyline points="810.0,722.0 810.0,708.0" fill="none" stroke="#00d000" stroke-width="3" stroke-linecap="round" stroke-linejoin="round"/>
<polyline points="830.0,730.0 830.0,716.0" fill="none" stroke="#00d000" stroke-width="3" stroke-linecap="round" stroke-linejoin="round"/>
<polyline points="850.0,740.0 850.0,726.0" fill="none" stroke="#00d000" stroke-width="3" stroke-linecap="round" stroke-linejoin="round"/>
<polyline points="870.0,745.0 870.0,731.0" fill="none" stroke="#00d000" stroke-width="3" stroke-linecap="round" stroke-linejoin="round"/>
<polyline points="820.0,725.0 835.0,712.0 850.0,728.0" fill="none" stroke="#d8a0c0" stroke-width="2" stroke-linecap="round" stroke-linejoin="round"/>
<ellipse cx="886" cy="743" rx="6" ry="6" fill="#00e8e8" stroke="none" stroke-width="1"/>
<polyline points="652.0,748.0 695.0,768.0" fill="none" stroke="#a89000" stroke-width="7" stroke-linecap="round" stroke-linejoin="round"/>
<polyline points="652.0,748.0 695.0,768.0" fill="none" stroke="#f8dc20" stroke-width="4.34" stroke-linecap="round" stroke-linejoin="round"/>
<polyline points="672.0,737.0 714.0,758.0" fill="none" stroke="#a89000" stroke-width="7" stroke-linecap="round" stroke-linejoin="round"/>
<polyline points="672.0,737.0 714.0,758.0" fill="none" stroke="#f8dc20" stroke-width="4.34" stroke-linecap="round" stroke-linejoin="round"/>
<polyline points="894.0,640.0 876.0,652.0 872.0,660.0 872.0,710.0" fill="none" stroke="#008800" stroke-width="6" stroke-linecap="round" stroke-linejoin="round"/>
<polyline points="894.0,640.0 876.0,652.0 872.0,660.0 872.0,710.0" fill="none" stroke="#00d000" stroke-width="3.7199999999999998" stroke-linecap="round" stroke-linejoin="round"/>
<polyline points="840.0,531.0 955.0,593.0" fill="none" stroke="#008800" stroke-width="5" stroke-linecap="round" stroke-linejoin="round"/>
<polyline points="840.0,531.0 955.0,593.0" fill="none" stroke="#00d000" stroke-width="3.1" stroke-linecap="round" stroke-linejoin="round"/>
<rect x="850" y="495" width="24" height="95" fill="#b88473"/>
<polygon points="560.0,600.0 573.0,593.0 668.0,547.0 720.0,530.0 750.0,530.0 817.0,519.0 845.0,565.0 874.0,587.0 910.0,609.0 740.0,683.0 647.0,730.0 577.0,693.0 560.0,686.0" fill="#c9c9c9" stroke="none" stroke-width="1"/>
<polyline points="573.0,593.0 668.0,547.0" fill="none" stroke="#ffffff" stroke-width="1" stroke-linecap="round" stroke-linejoin="round"/>
<polyline points="573.0,581.0 668.0,535.0" fill="none" stroke="#ffffff" stroke-width="1" stroke-linecap="round" stroke-linejoin="round"/>
<line x1="573.0" y1="593.0" x2="573.0" y2="581.0" stroke="#ffffff" stroke-width="1"/>
<line x1="592.0" y1="583.8" x2="592.0" y2="571.8" stroke="#ffffff" stroke-width="1"/>
<line x1="611.0" y1="574.6" x2="611.0" y2="562.6" stroke="#ffffff" stroke-width="1"/>
<line x1="630.0" y1="565.4" x2="630.0" y2="553.4" stroke="#ffffff" stroke-width="1"/>
<line x1="649.0" y1="556.2" x2="649.0" y2="544.2" stroke="#ffffff" stroke-width="1"/>
<polygon points="647.0,730.0 740.0,683.0 910.0,606.0 906.0,618.0 872.0,630.0 740.0,698.0 634.0,754.0" fill="#d4d4d4" stroke="none" stroke-width="1"/>
<polygon points="577.0,693.0 647.0,730.0 634.0,754.0 583.0,725.0" fill="#d0d0d0" stroke="none" stroke-width="1"/>
<polygon points="578.0,759.0 607.0,759.0 607.0,781.0 578.0,781.0" fill="#cfcfcf" stroke="none" stroke-width="1"/>
<polyline points="583.0,725.0 634.0,754.0 740.0,698.0 872.0,630.0" fill="none" stroke="#ffffff" stroke-width="1" stroke-linecap="round" stroke-linejoin="round"/>
<polyline points="583.0,715.0 634.0,744.0 740.0,688.0 872.0,620.0" fill="none" stroke="#ffffff" stroke-width="1" stroke-linecap="round" stroke-linejoin="round"/>
<line x1="583.0" y1="725.0" x2="583.0" y2="715.0" stroke="#ffffff" stroke-width="1"/>
<line x1="595.8" y1="732.2" x2="595.8" y2="722.2" stroke="#ffffff" stroke-width="1"/>
<line x1="608.5" y1="739.5" x2="608.5" y2="729.5" stroke="#ffffff" stroke-width="1"/>
<line x1="621.2" y1="746.8" x2="621.2" y2="736.8" stroke="#ffffff" stroke-width="1"/>
<line x1="634.0" y1="754.0" x2="634.0" y2="744.0" stroke="#ffffff" stroke-width="1"/>
<line x1="660.5" y1="740.0" x2="660.5" y2="730.0" stroke="#ffffff" stroke-width="1"/>
<line x1="687.0" y1="726.0" x2="687.0" y2="716.0" stroke="#ffffff" stroke-width="1"/>
<line x1="713.5" y1="712.0" x2="713.5" y2="702.0" stroke="#ffffff" stroke-width="1"/>
<line x1="740.0" y1="698.0" x2="740.0" y2="688.0" stroke="#ffffff" stroke-width="1"/>
<line x1="773.0" y1="681.0" x2="773.0" y2="671.0" stroke="#ffffff" stroke-width="1"/>
<line x1="806.0" y1="664.0" x2="806.0" y2="654.0" stroke="#ffffff" stroke-width="1"/>
<line x1="839.0" y1="647.0" x2="839.0" y2="637.0" stroke="#ffffff" stroke-width="1"/>
<polyline points="577.0,693.0 647.0,730.0 740.0,683.0 910.0,606.0" fill="none" stroke="#ffffff" stroke-width="1" stroke-linecap="round" stroke-linejoin="round"/>
<polyline points="577.0,681.0 647.0,718.0 740.0,671.0 910.0,594.0" fill="none" stroke="#ffffff" stroke-width="1" stroke-linecap="round" stroke-linejoin="round"/>
<line x1="577.0" y1="693.0" x2="577.0" y2="681.0" stroke="#ffffff" stroke-width="1"/>
<line x1="591.0" y1="700.4" x2="591.0" y2="688.4" stroke="#ffffff" stroke-width="1"/>
<line x1="605.0" y1="707.8" x2="605.0" y2="695.8" stroke="#ffffff" stroke-width="1"/>
<line x1="619.0" y1="715.2" x2="619.0" y2="703.2" stroke="#ffffff" stroke-width="1"/>
<line x1="633.0" y1="722.6" x2="633.0" y2="710.6" stroke="#ffffff" stroke-width="1"/>
<line x1="647.0" y1="730.0" x2="647.0" y2="718.0" stroke="#ffffff" stroke-width="1"/>
<line x1="665.6" y1="720.6" x2="665.6" y2="708.6" stroke="#ffffff" stroke-width="1"/>
<line x1="684.2" y1="711.2" x2="684.2" y2="699.2" stroke="#ffffff" stroke-width="1"/>
<line x1="702.8" y1="701.8" x2="702.8" y2="689.8" stroke="#ffffff" stroke-width="1"/>
<line x1="721.4" y1="692.4" x2="721.4" y2="680.4" stroke="#ffffff" stroke-width="1"/>
<line x1="740.0" y1="683.0" x2="740.0" y2="671.0" stroke="#ffffff" stroke-width="1"/>
<line x1="774.0" y1="667.6" x2="774.0" y2="655.6" stroke="#ffffff" stroke-width="1"/>
<line x1="808.0" y1="652.2" x2="808.0" y2="640.2" stroke="#ffffff" stroke-width="1"/>
<line x1="842.0" y1="636.8" x2="842.0" y2="624.8" stroke="#ffffff" stroke-width="1"/>
<line x1="876.0" y1="621.4" x2="876.0" y2="609.4" stroke="#ffffff" stroke-width="1"/>
<polyline points="910.0,606.0 860.0,582.0" fill="none" stroke="#ffffff" stroke-width="1" stroke-linecap="round" stroke-linejoin="round"/>
<polyline points="910.0,594.0 860.0,570.0" fill="none" stroke="#ffffff" stroke-width="1" stroke-linecap="round" stroke-linejoin="round"/>
<rect x="681" y="585" width="32" height="27" fill="url(#col)"/>
<rect x="735" y="598" width="22" height="42" fill="url(#col)"/>
<rect x="777" y="575" width="24" height="32" fill="url(#col)"/>
<rect x="635" y="668" width="22" height="30" fill="url(#col)"/>
<polyline points="692.0,566.0 752.0,594.0" fill="none" stroke="#7a5446" stroke-width="38" stroke-linecap="round" stroke-linejoin="round"/>
<polyline points="692.0,566.0 752.0,594.0" fill="none" stroke="#b07a68" stroke-width="32.68" stroke-linecap="round" stroke-linejoin="round"/>
<polyline points="694.4,560.8 754.4,588.8" fill="none" stroke="#c8927f" stroke-width="20.900000000000002" stroke-linecap="round" stroke-linejoin="round"/>
<polyline points="695.6,558.3 755.6,586.3" fill="none" stroke="#d4a18e" stroke-width="9.5" stroke-linecap="round" stroke-linejoin="round"/>
<polyline points="752.0,524.0 792.0,541.0" fill="none" stroke="#7a5446" stroke-width="30" stroke-linecap="round" stroke-linejoin="round"/>
<polyline points="752.0,524.0 792.0,541.0" fill="none" stroke="#b07a68" stroke-width="25.8" stroke-linecap="round" stroke-linejoin="round"/>
<polyline points="753.8,519.9 793.8,536.9" fill="none" stroke="#c8927f" stroke-width="16.5" stroke-linecap="round" stroke-linejoin="round"/>
<polyline points="754.6,517.8 794.6,534.8" fill="none" stroke="#d4a18e" stroke-width="7.5" stroke-linecap="round" stroke-linejoin="round"/>
<polygon points="668.0,537.0 697.0,523.0 810.0,588.0 800.0,603.0" fill="#d0d0d0" stroke="none" stroke-width="1"/>
<polygon points="668.0,537.0 697.0,523.0 740.0,543.0 737.0,559.0 705.0,556.0" fill="#d4d4d4" stroke="none" stroke-width="1"/>
<polyline points="671.0,532.0 700.0,518.0 725.0,528.0" fill="none" stroke="#ffffff" stroke-width="1" stroke-linecap="round" stroke-linejoin="round"/>
<polyline points="671.0,519.0 700.0,505.0 725.0,515.0" fill="none" stroke="#ffffff" stroke-width="1" stroke-linecap="round" stroke-linejoin="round"/>
<line x1="671.0" y1="532.0" x2="671.0" y2="519.0" stroke="#ffffff" stroke-width="1"/>
<line x1="680.7" y1="527.3" x2="680.7" y2="514.3" stroke="#ffffff" stroke-width="1"/>
<line x1="690.3" y1="522.7" x2="690.3" y2="509.7" stroke="#ffffff" stroke-width="1"/>
<line x1="700.0" y1="518.0" x2="700.0" y2="505.0" stroke="#ffffff" stroke-width="1"/>
<line x1="708.3" y1="521.3" x2="708.3" y2="508.3" stroke="#ffffff" stroke-width="1"/>
<line x1="716.7" y1="524.7" x2="716.7" y2="511.7" stroke="#ffffff" stroke-width="1"/>
<polyline points="668.0,537.0 800.0,603.0" fill="none" stroke="#ffffff" stroke-width="1" stroke-linecap="round" stroke-linejoin="round"/>
<polyline points="668.0,527.0 800.0,593.0" fill="none" stroke="#ffffff" stroke-width="1" stroke-linecap="round" stroke-linejoin="round"/>
<line x1="668.0" y1="537.0" x2="668.0" y2="527.0" stroke="#ffffff" stroke-width="1"/>
<line x1="684.5" y1="545.2" x2="684.5" y2="535.2" stroke="#ffffff" stroke-width="1"/>
<line x1="701.0" y1="553.5" x2="701.0" y2="543.5" stroke="#ffffff" stroke-width="1"/>
<line x1="717.5" y1="561.8" x2="717.5" y2="551.8" stroke="#ffffff" stroke-width="1"/>
<line x1="734.0" y1="570.0" x2="734.0" y2="560.0" stroke="#ffffff" stroke-width="1"/>
<line x1="750.5" y1="578.2" x2="750.5" y2="568.2" stroke="#ffffff" stroke-width="1"/>
<line x1="767.0" y1="586.5" x2="767.0" y2="576.5" stroke="#ffffff" stroke-width="1"/>
<line x1="783.5" y1="594.8" x2="783.5" y2="584.8" stroke="#ffffff" stroke-width="1"/>
<polygon points="729.0,500.0 753.0,487.0 815.0,511.0 817.0,519.0 791.0,529.0 732.0,505.0" fill="#d4d4d4" stroke="none" stroke-width="1"/>
<polyline points="729.0,500.0 756.0,487.0 817.0,513.0" fill="none" stroke="#ffffff" stroke-width="1" stroke-linecap="round" stroke-linejoin="round"/>
<polyline points="729.0,486.0 756.0,473.0 817.0,499.0" fill="none" stroke="#ffffff" stroke-width="1" stroke-linecap="round" stroke-linejoin="round"/>
<line x1="729.0" y1="500.0" x2="729.0" y2="486.0" stroke="#ffffff" stroke-width="1"/>
<line x1="734.4" y1="497.4" x2="734.4" y2="483.4" stroke="#ffffff" stroke-width="1"/>
<line x1="739.8" y1="494.8" x2="739.8" y2="480.8" stroke="#ffffff" stroke-width="1"/>
<line x1="745.2" y1="492.2" x2="745.2" y2="478.2" stroke="#ffffff" stroke-width="1"/>
<line x1="750.6" y1="489.6" x2="750.6" y2="475.6" stroke="#ffffff" stroke-width="1"/>
<line x1="756.0" y1="487.0" x2="756.0" y2="473.0" stroke="#ffffff" stroke-width="1"/>
<line x1="768.2" y1="492.2" x2="768.2" y2="478.2" stroke="#ffffff" stroke-width="1"/>
<line x1="780.4" y1="497.4" x2="780.4" y2="483.4" stroke="#ffffff" stroke-width="1"/>
<line x1="792.6" y1="502.6" x2="792.6" y2="488.6" stroke="#ffffff" stroke-width="1"/>
<line x1="804.8" y1="507.8" x2="804.8" y2="493.8" stroke="#ffffff" stroke-width="1"/>
<polyline points="732.0,505.0 791.0,529.0 817.0,519.0" fill="none" stroke="#ffffff" stroke-width="1" stroke-linecap="round" stroke-linejoin="round"/>
<polyline points="598.0,596.0 648.0,622.0" fill="none" stroke="#7a5446" stroke-width="14" stroke-linecap="round" stroke-linejoin="round"/>
<polyline points="598.0,596.0 648.0,622.0" fill="none" stroke="#b07a68" stroke-width="12.04" stroke-linecap="round" stroke-linejoin="round"/>
<polyline points="599.0,594.1 649.0,620.1" fill="none" stroke="#c8927f" stroke-width="7.700000000000001" stroke-linecap="round" stroke-linejoin="round"/>
<polyline points="599.5,593.2 649.5,619.2" fill="none" stroke="#d4a18e" stroke-width="3.5" stroke-linecap="round" stroke-linejoin="round"/>
<polyline points="590.0,621.0 669.0,665.0" fill="none" stroke="#7a5446" stroke-width="24" stroke-linecap="round" stroke-linejoin="round"/>
<polyline points="590.0,621.0 669.0,665.0" fill="none" stroke="#b07a68" stroke-width="20.64" stroke-linecap="round" stroke-linejoin="round"/>
<polyline points="591.8,617.9 670.8,661.9" fill="none" stroke="#c8927f" stroke-width="13.200000000000001" stroke-linecap="round" stroke-linejoin="round"/>
<polyline points="592.6,616.3 671.6,660.3" fill="none" stroke="#d4a18e" stroke-width="6.0" stroke-linecap="round" stroke-linejoin="round"/>
<polyline points="620.0,660.0 868.0,528.0" fill="none" stroke="#9a0a5a" stroke-width="7" stroke-linecap="round" stroke-linejoin="round"/>
<polyline points="620.0,660.0 868.0,528.0" fill="none" stroke="#e01888" stroke-width="4.34" stroke-linecap="round" stroke-linejoin="round"/>
<polyline points="624.0,659.0 624.0,760.0" fill="none" stroke="#9a0a5a" stroke-width="8" stroke-linecap="round" stroke-linejoin="round"/>
<polyline points="624.0,659.0 624.0,760.0" fill="none" stroke="#e01888" stroke-width="4.96" stroke-linecap="round" stroke-linejoin="round"/>
<polyline points="746.0,592.0 746.0,668.0" fill="none" stroke="#9a0a5a" stroke-width="8" stroke-linecap="round" stroke-linejoin="round"/>
<polyline points="746.0,592.0 746.0,668.0" fill="none" stroke="#e01888" stroke-width="4.96" stroke-linecap="round" stroke-linejoin="round"/>
<polyline points="867.0,527.0 867.0,606.0" fill="none" stroke="#9a0a5a" stroke-width="8" stroke-linecap="round" stroke-linejoin="round"/>
<polyline points="867.0,527.0 867.0,606.0" fill="none" stroke="#e01888" stroke-width="4.96" stroke-linecap="round" stroke-linejoin="round"/>
<polyline points="620.0,605.0 685.0,572.0" fill="none" stroke="#9a0a5a" stroke-width="4" stroke-linecap="round" stroke-linejoin="round"/>
<polyline points="620.0,605.0 685.0,572.0" fill="none" stroke="#e01888" stroke-width="2.48" stroke-linecap="round" stroke-linejoin="round"/>
<polyline points="600.0,618.0 600.0,605.0 608.0,600.0 703.0,615.0" fill="none" stroke="#008800" stroke-width="5" stroke-linecap="round" stroke-linejoin="round"/>
<polyline points="600.0,618.0 600.0,605.0 608.0,600.0 703.0,615.0" fill="none" stroke="#00d000" stroke-width="3.1" stroke-linecap="round" stroke-linejoin="round"/>
<polyline points="668.0,615.0 742.0,653.0" fill="none" stroke="#008800" stroke-width="5" stroke-linecap="round" stroke-linejoin="round"/>
<polyline points="668.0,615.0 742.0,653.0" fill="none" stroke="#00d000" stroke-width="3.1" stroke-linecap="round" stroke-linejoin="round"/>
<polyline points="638.0,628.0 643.0,637.0 667.0,637.0" fill="none" stroke="#008800" stroke-width="5" stroke-linecap="round" stroke-linejoin="round"/>
<polyline points="638.0,628.0 643.0,637.0 667.0,637.0" fill="none" stroke="#00d000" stroke-width="3.1" stroke-linecap="round" stroke-linejoin="round"/>
<polyline points="658.0,683.0 660.0,693.0 677.0,700.0 673.0,708.0 653.0,708.0" fill="none" stroke="#008800" stroke-width="5" stroke-linecap="round" stroke-linejoin="round"/>
<polyline points="658.0,683.0 660.0,693.0 677.0,700.0 673.0,708.0 653.0,708.0" fill="none" stroke="#00d000" stroke-width="3.1" stroke-linecap="round" stroke-linejoin="round"/>
<polyline points="677.0,677.0 692.0,690.0 692.0,703.0" fill="none" stroke="#008800" stroke-width="5" stroke-linecap="round" stroke-linejoin="round"/>
<polyline points="677.0,677.0 692.0,690.0 692.0,703.0" fill="none" stroke="#00d000" stroke-width="3.1" stroke-linecap="round" stroke-linejoin="round"/>
<polyline points="607.0,693.0 607.0,708.0" fill="none" stroke="#008800" stroke-width="5" stroke-linecap="round" stroke-linejoin="round"/>
<polyline points="607.0,693.0 607.0,708.0" fill="none" stroke="#00d000" stroke-width="3.1" stroke-linecap="round" stroke-linejoin="round"/>
<polyline points="667.0,617.0 667.0,645.0 680.0,660.0 700.0,668.0 712.0,660.0" fill="none" stroke="#008800" stroke-width="5" stroke-linecap="round" stroke-linejoin="round"/>
<polyline points="667.0,617.0 667.0,645.0 680.0,660.0 700.0,668.0 712.0,660.0" fill="none" stroke="#00d000" stroke-width="3.1" stroke-linecap="round" stroke-linejoin="round"/>
<path d="M670,648 L690,640 L712,650 L712,668 L690,672 L670,662 Z" fill="#00d000" stroke="none" stroke-width="1" />
<polyline points="676.0,650.0 676.0,638.0" fill="none" stroke="#10c010" stroke-width="4" stroke-linecap="round" stroke-linejoin="round"/>
<polyline points="688.0,646.0 688.0,634.0" fill="none" stroke="#10c010" stroke-width="4" stroke-linecap="round" stroke-linejoin="round"/>
<polyline points="700.0,652.0 700.0,640.0" fill="none" stroke="#10c010" stroke-width="4" stroke-linecap="round" stroke-linejoin="round"/>
<path d="M683,638 L688,630 L693,638 Z" fill="#00d000" stroke="none" stroke-width="1" />
<polyline points="695.0,650.0 705.0,640.0 712.0,645.0 712.0,660.0" fill="none" stroke="#008800" stroke-width="4" stroke-linecap="round" stroke-linejoin="round"/>
<polyline points="695.0,650.0 705.0,640.0 712.0,645.0 712.0,660.0" fill="none" stroke="#00d000" stroke-width="2.48" stroke-linecap="round" stroke-linejoin="round"/>
<polyline points="610.0,680.0 640.0,700.0 655.0,698.0" fill="none" stroke="#008800" stroke-width="4" stroke-linecap="round" stroke-linejoin="round"/>
<polyline points="610.0,680.0 640.0,700.0 655.0,698.0" fill="none" stroke="#00d000" stroke-width="2.48" stroke-linecap="round" stroke-linejoin="round"/>
<polyline points="687.0,543.0 812.0,612.0" fill="none" stroke="#f8dc20" stroke-width="2" stroke-linecap="round" stroke-linejoin="round"/>
<polyline points="700.0,540.0 820.0,604.0" fill="none" stroke="#f8dc20" stroke-width="1.5" stroke-linecap="round" stroke-linejoin="round"/>
<polyline points="780.0,532.0 900.0,585.0" fill="none" stroke="#f8dc20" stroke-width="2" stroke-linecap="round" stroke-linejoin="round"/>
<polyline points="790.0,528.0 905.0,578.0" fill="none" stroke="#f8dc20" stroke-width="1.5" stroke-linecap="round" stroke-linejoin="round"/>
<polyline points="750.0,545.0 833.0,585.0" fill="none" stroke="#008800" stroke-width="5" stroke-linecap="round" stroke-linejoin="round"/>
<polyline points="750.0,545.0 833.0,585.0" fill="none" stroke="#00d000" stroke-width="3.1" stroke-linecap="round" stroke-linejoin="round"/>
<polyline points="740.0,561.0 820.0,604.0" fill="none" stroke="#00d000" stroke-width="2.5" stroke-linecap="round" stroke-linejoin="round"/>
<polyline points="801.0,521.0 889.0,568.0" fill="none" stroke="#008800" stroke-width="4" stroke-linecap="round" stroke-linejoin="round"/>
<polyline points="801.0,521.0 889.0,568.0" fill="none" stroke="#00d000" stroke-width="2.48" stroke-linecap="round" stroke-linejoin="round"/>
<polyline points="809.0,532.0 879.0,572.0" fill="none" stroke="#00d000" stroke-width="2" stroke-linecap="round" stroke-linejoin="round"/>
<polyline points="795.0,600.0 830.0,582.0 840.0,600.0" fill="none" stroke="#00d000" stroke-width="2" stroke-linecap="round" stroke-linejoin="round"/>
<polyline points="800.0,605.0 800.0,592.0" fill="none" stroke="#00d000" stroke-width="2" stroke-linecap="round" stroke-linejoin="round"/>
<polyline points="812.0,605.0 812.0,592.0" fill="none" stroke="#00d000" stroke-width="2" stroke-linecap="round" stroke-linejoin="round"/>
<polyline points="824.0,605.0 824.0,592.0" fill="none" stroke="#00d000" stroke-width="2" stroke-linecap="round" stroke-linejoin="round"/>
<polygon points="741.0,478.0 744.0,500.0 738.0,500.0" fill="#f8dc20" stroke="none" stroke-width="1"/>
<polyline points="738.0,486.8 744.0,486.8" fill="none" stroke="#c8a800" stroke-width="1" stroke-linecap="round" stroke-linejoin="round"/>
<polyline points="738.0,492.3 744.0,492.3" fill="none" stroke="#c8a800" stroke-width="1" stroke-linecap="round" stroke-linejoin="round"/>
<polygon points="756.0,484.0 759.0,505.0 753.0,505.0" fill="#f8dc20" stroke="none" stroke-width="1"/>
<polyline points="753.0,492.4 759.0,492.4" fill="none" stroke="#c8a800" stroke-width="1" stroke-linecap="round" stroke-linejoin="round"/>
<polyline points="753.0,497.6 759.0,497.6" fill="none" stroke="#c8a800" stroke-width="1" stroke-linecap="round" stroke-linejoin="round"/>
<polygon points="767.0,488.0 770.0,507.0 764.0,507.0" fill="#f8dc20" stroke="none" stroke-width="1"/>
<polyline points="764.0,495.6 770.0,495.6" fill="none" stroke="#c8a800" stroke-width="1" stroke-linecap="round" stroke-linejoin="round"/>
<polyline points="764.0,500.4 770.0,500.4" fill="none" stroke="#c8a800" stroke-width="1" stroke-linecap="round" stroke-linejoin="round"/>
<polyline points="738.0,505.0 775.0,510.0" fill="none" stroke="#f8dc20" stroke-width="2" stroke-linecap="round" stroke-linejoin="round"/>
<polyline points="788.0,484.0 815.0,492.0 815.0,513.0" fill="none" stroke="#00d000" stroke-width="2" stroke-linecap="round" stroke-linejoin="round"/>
<polyline points="804.0,511.0 804.0,490.0" fill="none" stroke="#008800" stroke-width="5" stroke-linecap="round" stroke-linejoin="round"/>
<polyline points="804.0,511.0 804.0,490.0" fill="none" stroke="#00d000" stroke-width="3.1" stroke-linecap="round" stroke-linejoin="round"/>
<ellipse cx="804" cy="490" rx="3" ry="2" fill="#30f030" stroke="none" stroke-width="1"/>
<polyline points="690.0,535.0 735.0,553.0" fill="none" stroke="#9070b0" stroke-width="2" stroke-linecap="round" stroke-linejoin="round"/>
<polyline points="702.0,540.0 702.0,532.0" fill="none" stroke="#9070b0" stroke-width="2" stroke-linecap="round" stroke-linejoin="round"/>
<polyline points="714.0,545.0 714.0,537.0" fill="none" stroke="#9070b0" stroke-width="2" stroke-linecap="round" stroke-linejoin="round"/>
<polyline points="726.0,550.0 726.0,542.0" fill="none" stroke="#9070b0" stroke-width="2" stroke-linecap="round" stroke-linejoin="round"/>
<polyline points="680.0,530.0 680.0,520.0" fill="none" stroke="#f8dc20" stroke-width="2" stroke-linecap="round" stroke-linejoin="round"/>
<polyline points="690.0,526.0 690.0,516.0" fill="none" stroke="#f8dc20" stroke-width="2" stroke-linecap="round" stroke-linejoin="round"/>
<polyline points="745.0,545.0 760.0,580.0" fill="none" stroke="#008800" stroke-width="3" stroke-linecap="round" stroke-linejoin="round"/>
<polyline points="745.0,545.0 760.0,580.0" fill="none" stroke="#00d000" stroke-width="1.8599999999999999" stroke-linecap="round" stroke-linejoin="round"/>
<polyline points="760.0,575.0 785.0,590.0" fill="none" stroke="#008800" stroke-width="4" stroke-linecap="round" stroke-linejoin="round"/>
<polyline points="760.0,575.0 785.0,590.0" fill="none" stroke="#00d000" stroke-width="2.48" stroke-linecap="round" stroke-linejoin="round"/>
<path d="M897,177 Q915,176 921.5,190 L921.5,340 Q922,346 931,350 L980,373" fill="none" stroke="#008800" stroke-width="5.5" stroke-linecap="round"/>
<path d="M897,177 Q915,176 921.5,190 L921.5,340 Q922,346 931,350 L980,373" fill="none" stroke="#00d000" stroke-width="3.4" stroke-linecap="round"/>
<polyline points="925.0,217.0 925.0,246.0 935.5,265.0 935.5,300.0" fill="none" stroke="#008800" stroke-width="5.5" stroke-linecap="round" stroke-linejoin="round"/>
<polyline points="925.0,217.0 925.0,246.0 935.5,265.0 935.5,300.0" fill="none" stroke="#00d000" stroke-width="3.41" stroke-linecap="round" stroke-linejoin="round"/>
<polygon points="896.0,165.0 899.5,192.0 892.5,192.0" fill="#f8dc20" stroke="none" stroke-width="1"/>
<polyline points="893.0,174.4 899.0,174.4" fill="none" stroke="#c8a800" stroke-width="1" stroke-linecap="round" stroke-linejoin="round"/>
<polyline points="893.0,179.8 899.0,179.8" fill="none" stroke="#c8a800" stroke-width="1" stroke-linecap="round" stroke-linejoin="round"/>
<polyline points="893.0,185.2 899.0,185.2" fill="none" stroke="#c8a800" stroke-width="1" stroke-linecap="round" stroke-linejoin="round"/>
<polygon points="915.0,157.0 918.5,183.0 911.5,183.0" fill="#f8dc20" stroke="none" stroke-width="1"/>
<polyline points="912.0,166.1 918.0,166.1" fill="none" stroke="#c8a800" stroke-width="1" stroke-linecap="round" stroke-linejoin="round"/>
<polyline points="912.0,171.3 918.0,171.3" fill="none" stroke="#c8a800" stroke-width="1" stroke-linecap="round" stroke-linejoin="round"/>
<polyline points="912.0,176.5 918.0,176.5" fill="none" stroke="#c8a800" stroke-width="1" stroke-linecap="round" stroke-linejoin="round"/>
<polygon points="905.0,175.0 908.5,190.0 901.5,190.0" fill="#f8dc20" stroke="none" stroke-width="1"/>
<polyline points="902.0,180.2 908.0,180.2" fill="none" stroke="#c8a800" stroke-width="1" stroke-linecap="round" stroke-linejoin="round"/>
<polyline points="902.0,183.2 908.0,183.2" fill="none" stroke="#c8a800" stroke-width="1" stroke-linecap="round" stroke-linejoin="round"/>
<polyline points="902.0,186.2 908.0,186.2" fill="none" stroke="#c8a800" stroke-width="1" stroke-linecap="round" stroke-linejoin="round"/>
<polyline points="880.0,190.0 880.0,184.0" fill="none" stroke="#f8dc20" stroke-width="2" stroke-linecap="round" stroke-linejoin="round"/>
<polyline points="886.0,196.0 886.0,190.0" fill="none" stroke="#f8dc20" stroke-width="2" stroke-linecap="round" stroke-linejoin="round"/>
<polyline points="893.0,200.0 893.0,194.0" fill="none" stroke="#f8dc20" stroke-width="2" stroke-linecap="round" stroke-linejoin="round"/>
<polyline points="905.0,196.0 905.0,190.0" fill="none" stroke="#f8dc20" stroke-width="2" stroke-linecap="round" stroke-linejoin="round"/>
<polyline points="910.0,193.0 910.0,187.0" fill="none" stroke="#f8dc20" stroke-width="2" stroke-linecap="round" stroke-linejoin="round"/>
<polyline points="898.0,186.0 898.0,196.0 905.0,194.0" fill="none" stroke="#00d000" stroke-width="2" stroke-linecap="round" stroke-linejoin="round"/>
<polyline points="880.0,195.0 905.0,188.0 915.0,182.0" fill="none" stroke="#f8dc20" stroke-width="2" stroke-linecap="round" stroke-linejoin="round"/>
<polyline points="889.0,207.5 913.0,207.5" fill="none" stroke="#f8dc20" stroke-width="1.5" stroke-linecap="round" stroke-linejoin="round"/>
<polyline points="935.0,265.0 935.0,593.0 938.0,603.0 954.0,607.0 894.0,640.0" fill="none" stroke="#008800" stroke-width="6" stroke-linecap="round" stroke-linejoin="round"/>
<polyline points="935.0,265.0 935.0,593.0 938.0,603.0 954.0,607.0 894.0,640.0" fill="none" stroke="#00d000" stroke-width="3.7199999999999998" stroke-linecap="round" stroke-linejoin="round"/>
<polyline points="921.0,178.0 928.0,178.0 928.0,490.0 1000.0,540.0" fill="none" stroke="#a89000" stroke-width="3" stroke-linecap="round" stroke-linejoin="round"/>
<polyline points="921.0,178.0 928.0,178.0 928.0,490.0 1000.0,540.0" fill="none" stroke="#f8dc20" stroke-width="1.8599999999999999" stroke-linecap="round" stroke-linejoin="round"/>
<polyline points="815.5,351.0 795.0,360.0 789.0,368.0 789.0,455.0 950.0,545.0" fill="none" stroke="#a89000" stroke-width="4" stroke-linecap="round" stroke-linejoin="round"/>
<polyline points="815.5,351.0 795.0,360.0 789.0,368.0 789.0,455.0 950.0,545.0" fill="none" stroke="#f8dc20" stroke-width="2.48" stroke-linecap="round" stroke-linejoin="round"/>
<polyline points="806.0,366.0 955.0,444.0" fill="none" stroke="#00d000" stroke-width="2" stroke-linecap="round" stroke-linejoin="round"/>
<polyline points="911.0,340.0 911.0,520.0" fill="none" stroke="#00d000" stroke-width="1.5" stroke-linecap="round" stroke-linejoin="round"/>
<polyline points="958.0,490.0 1040.0,542.0" fill="none" stroke="#f8dc20" stroke-width="2" stroke-linecap="round" stroke-linejoin="round"/>
<polyline points="962.0,500.0 1050.0,556.0" fill="none" stroke="#f8dc20" stroke-width="2" stroke-linecap="round" stroke-linejoin="round"/>
<polyline points="900.0,500.0 1000.0,555.0" fill="none" stroke="#d8a0c0" stroke-width="3" stroke-linecap="round" stroke-linejoin="round"/>
<polyline points="935.0,510.0 1010.0,555.0" fill="none" stroke="#f8dc20" stroke-width="1.5" stroke-linecap="round" stroke-linejoin="round"/>
<polyline points="876.0,234.0 876.0,274.0 910.0,279.0 910.0,380.0" fill="none" stroke="#00d000" stroke-width="1.5" stroke-linecap="round" stroke-linejoin="round"/>
<polyline points="913.0,208.0 913.0,330.0" fill="none" stroke="#f8dc20" stroke-width="2" stroke-linecap="round" stroke-linejoin="round"/>
<polyline points="391.0,566.0 484.0,614.0" fill="none" stroke="#7a5446" stroke-width="8" stroke-linecap="round" stroke-linejoin="round"/>
<polyline points="391.0,566.0 484.0,614.0" fill="none" stroke="#b07a68" stroke-width="6.88" stroke-linecap="round" stroke-linejoin="round"/>
<polyline points="391.6,564.9 484.6,612.9" fill="none" stroke="#c8927f" stroke-width="4.4" stroke-linecap="round" stroke-linejoin="round"/>
<polyline points="391.8,564.4 484.8,612.4" fill="none" stroke="#d4a18e" stroke-width="2.0" stroke-linecap="round" stroke-linejoin="round"/>
<rect x="406" y="573" width="6" height="25" fill="#b88070"/>
<rect x="466" y="607" width="6" height="22" fill="#b88070"/>
<polyline points="412.0,521.0 412.0,572.0" fill="none" stroke="#00d000" stroke-width="1.2" stroke-linecap="round" stroke-linejoin="round"/>
<polyline points="444.0,545.0 444.0,590.0" fill="none" stroke="#00d000" stroke-width="1.2" stroke-linecap="round" stroke-linejoin="round"/>
<polyline points="396.0,560.0 396.0,575.0 424.0,575.0 424.0,560.0 396.0,560.0" fill="none" stroke="#f8dc20" stroke-width="1" stroke-linecap="round" stroke-linejoin="round"/>
<polyline points="418.0,585.0 455.0,595.0 460.0,610.0 425.0,600.0 418.0,585.0" fill="none" stroke="#00d000" stroke-width="1.2" stroke-linecap="round" stroke-linejoin="round"/>
<polyline points="425.0,598.0 425.0,590.0" fill="none" stroke="#00d000" stroke-width="1.5" stroke-linecap="round" stroke-linejoin="round"/>
<polyline points="435.0,600.0 435.0,592.0" fill="none" stroke="#00d000" stroke-width="1.5" stroke-linecap="round" stroke-linejoin="round"/>
<polyline points="445.0,604.0 445.0,596.0" fill="none" stroke="#00d000" stroke-width="1.5" stroke-linecap="round" stroke-linejoin="round"/>
<polygon points="540.0,622.0 484.0,622.0 484.5,618.7 485.9,615.5 488.3,612.4 491.5,609.5 495.6,606.8 500.4,604.3 505.9,602.2 512.0,600.3 518.6,598.9 525.5,597.9 532.7,597.2 540.0,597.0 547.3,597.2 554.5,597.9 561.4,598.9 568.0,600.3 574.1,602.2 579.6,604.3 584.4,606.8 588.5,609.5 591.7,612.4 594.1,615.5 595.5,618.7 596.0,622.0" fill="#c8c8c8" stroke="none" stroke-width="1"/>
<polygon points="484.0,622.0 484.5,618.7 485.9,615.5 488.3,612.4 491.5,609.5 495.6,606.8 500.4,604.3 505.9,602.2 512.0,600.3 518.6,598.9 525.5,597.9 532.7,597.2 540.0,597.0 547.3,597.2 554.5,597.9 561.4,598.9 568.0,600.3 574.1,602.2 579.6,604.3 584.4,606.8 588.5,609.5 591.7,612.4 594.1,615.5 595.5,618.7 596.0,622.0 596.0,622.0 595.5,618.7 594.1,615.5 591.7,612.4 588.5,609.5 584.4,606.8 579.6,604.3 574.1,602.2 568.0,600.3 561.4,598.9 554.5,597.9 547.3,597.2 540.0,597.0 532.7,597.2 525.5,597.9 518.6,598.9 512.0,600.3 505.9,602.2 500.4,604.3 495.6,606.8 491.5,609.5 488.3,612.4 485.9,615.5 484.5,618.7 484.0,622.0" fill="#e8e8e8" stroke="none" stroke-width="1"/>
<polyline points="484.0,622.0 484.5,618.7 485.9,615.5 488.3,612.4 491.5,609.5 495.6,606.8 500.4,604.3 505.9,602.2 512.0,600.3 518.6,598.9 525.5,597.9 532.7,597.2 540.0,597.0 547.3,597.2 554.5,597.9 561.4,598.9 568.0,600.3 574.1,602.2 579.6,604.3 584.4,606.8 588.5,609.5 591.7,612.4 594.1,615.5 595.5,618.7 596.0,622.0" fill="none" stroke="#ffffff" stroke-width="1" stroke-linecap="round" stroke-linejoin="round"/>
<polyline points="484.0,622.0 484.5,618.7 485.9,615.5 488.3,612.4 491.5,609.5 495.6,606.8 500.4,604.3 505.9,602.2 512.0,600.3 518.6,598.9 525.5,597.9 532.7,597.2 540.0,597.0 547.3,597.2 554.5,597.9 561.4,598.9 568.0,600.3 574.1,602.2 579.6,604.3 584.4,606.8 588.5,609.5 591.7,612.4 594.1,615.5 595.5,618.7 596.0,622.0" fill="none" stroke="#909090" stroke-width="1" stroke-linecap="round" stroke-linejoin="round"/>
<polygon points="540.0,780.0 483.0,780.0 483.5,776.6 484.9,773.3 487.3,770.1 490.6,767.0 494.8,764.2 499.7,761.6 505.3,759.4 511.5,757.5 518.2,756.0 525.2,754.9 532.6,754.2 540.0,754.0 547.4,754.2 554.8,754.9 561.8,756.0 568.5,757.5 574.7,759.4 580.3,761.6 585.2,764.2 589.4,767.0 592.7,770.1 595.1,773.3 596.5,776.6 597.0,780.0" fill="#c8c8c8" stroke="none" stroke-width="1"/>
<polygon points="483.0,780.0 483.5,776.6 484.9,773.3 487.3,770.1 490.6,767.0 494.8,764.2 499.7,761.6 505.3,759.4 511.5,757.5 518.2,756.0 525.2,754.9 532.6,754.2 540.0,754.0 547.4,754.2 554.8,754.9 561.8,756.0 568.5,757.5 574.7,759.4 580.3,761.6 585.2,764.2 589.4,767.0 592.7,770.1 595.1,773.3 596.5,776.6 597.0,780.0 597.0,780.0 596.5,776.6 595.1,773.3 592.7,770.1 589.4,767.0 585.2,764.2 580.3,761.6 574.7,759.4 568.5,757.5 561.8,756.0 554.8,754.9 547.4,754.2 540.0,754.0 532.6,754.2 525.2,754.9 518.2,756.0 511.5,757.5 505.3,759.4 499.7,761.6 494.8,764.2 490.6,767.0 487.3,770.1 484.9,773.3 483.5,776.6 483.0,780.0" fill="#e8e8e8" stroke="none" stroke-width="1"/>
<polyline points="483.0,780.0 483.5,776.6 484.9,773.3 487.3,770.1 490.6,767.0 494.8,764.2 499.7,761.6 505.3,759.4 511.5,757.5 518.2,756.0 525.2,754.9 532.6,754.2 540.0,754.0 547.4,754.2 554.8,754.9 561.8,756.0 568.5,757.5 574.7,759.4 580.3,761.6 585.2,764.2 589.4,767.0 592.7,770.1 595.1,773.3 596.5,776.6 597.0,780.0" fill="none" stroke="#ffffff" stroke-width="1" stroke-linecap="round" stroke-linejoin="round"/>
<polyline points="483.0,780.0 483.5,776.6 484.9,773.3 487.3,770.1 490.6,767.0 494.8,764.2 499.7,761.6 505.3,759.4 511.5,757.5 518.2,756.0 525.2,754.9 532.6,754.2 540.0,754.0 547.4,754.2 554.8,754.9 561.8,756.0 568.5,757.5 574.7,759.4 580.3,761.6 585.2,764.2 589.4,767.0 592.7,770.1 595.1,773.3 596.5,776.6 597.0,780.0" fill="none" stroke="#909090" stroke-width="1" stroke-linecap="round" stroke-linejoin="round"/>
<polyline points="517.0,165.0 517.0,247.0" fill="none" stroke="#b88070" stroke-width="4" stroke-linecap="round" stroke-linejoin="round"/>
<ellipse cx="541.6" cy="226" rx="21.6" ry="12" fill="#c8c8c8" stroke="none" stroke-width="1"/>
<polyline points="520.0,226.0 520.1,224.7 520.5,223.5 521.1,222.3 521.9,221.1 522.9,220.0 524.1,218.9 525.5,218.0 527.1,217.1 528.9,216.3 530.8,215.6 532.8,215.0 534.9,214.6 537.1,214.3 539.3,214.1 541.6,214.0 543.9,214.1 546.1,214.3 548.3,214.6 550.4,215.0 552.4,215.6 554.3,216.3 556.1,217.1 557.7,218.0 559.1,218.9 560.3,220.0 561.3,221.1 562.1,222.3 562.7,223.5 563.1,224.7 563.2,226.0" fill="none" stroke="#ffffff" stroke-width="1" stroke-linecap="round" stroke-linejoin="round"/>
<polyline points="520.0,210.0 520.1,208.7 520.5,207.5 521.1,206.3 521.9,205.1 522.9,204.0 524.1,202.9 525.5,202.0 527.1,201.1 528.9,200.3 530.8,199.6 532.8,199.0 534.9,198.6 537.1,198.3 539.3,198.1 541.6,198.0 543.9,198.1 546.1,198.3 548.3,198.6 550.4,199.0 552.4,199.6 554.3,200.3 556.1,201.1 557.7,202.0 559.1,202.9 560.3,204.0 561.3,205.1 562.1,206.3 562.7,207.5 563.1,208.7 563.2,210.0" fill="none" stroke="#ffffff" stroke-width="1" stroke-linecap="round" stroke-linejoin="round"/>
<line x1="520.0" y1="226.0" x2="520.0" y2="210.0" stroke="#ffffff" stroke-width="1"/>
<line x1="522.9" y1="220.0" x2="522.9" y2="204.0" stroke="#ffffff" stroke-width="1"/>
<line x1="530.8" y1="215.6" x2="530.8" y2="199.6" stroke="#ffffff" stroke-width="1"/>
<line x1="541.6" y1="214.0" x2="541.6" y2="198.0" stroke="#ffffff" stroke-width="1"/>
<line x1="552.4" y1="215.6" x2="552.4" y2="199.6" stroke="#ffffff" stroke-width="1"/>
<line x1="560.3" y1="220.0" x2="560.3" y2="204.0" stroke="#ffffff" stroke-width="1"/>
<line x1="563.2" y1="226.0" x2="563.2" y2="210.0" stroke="#ffffff" stroke-width="1"/>
<rect x="520" y="236" width="42" height="204" fill="url(#col)"/>
<polyline points="563.2,226.0 563.1,227.3 562.7,228.5 562.1,229.7 561.3,230.9 560.3,232.0 559.1,233.1 557.7,234.0 556.1,234.9 554.3,235.7 552.4,236.4 550.4,237.0 548.3,237.4 546.1,237.7 543.9,237.9 541.6,238.0 539.3,237.9 537.1,237.7 534.9,237.4 532.8,237.0 530.8,236.4 528.9,235.7 527.1,234.9 525.5,234.0 524.1,233.1 522.9,232.0 521.9,230.9 521.1,229.7 520.5,228.5 520.1,227.3 520.0,226.0" fill="none" stroke="#ffffff" stroke-width="1" stroke-linecap="round" stroke-linejoin="round"/>
<polyline points="563.2,210.0 563.1,211.3 562.7,212.5 562.1,213.7 561.3,214.9 560.3,216.0 559.1,217.1 557.7,218.0 556.1,218.9 554.3,219.7 552.4,220.4 550.4,221.0 548.3,221.4 546.1,221.7 543.9,221.9 541.6,222.0 539.3,221.9 537.1,221.7 534.9,221.4 532.8,221.0 530.8,220.4 528.9,219.7 527.1,218.9 525.5,218.0 524.1,217.1 522.9,216.0 521.9,214.9 521.1,213.7 520.5,212.5 520.1,211.3 520.0,210.0" fill="none" stroke="#ffffff" stroke-width="1" stroke-linecap="round" stroke-linejoin="round"/>
<line x1="563.2" y1="226.0" x2="563.2" y2="210.0" stroke="#ffffff" stroke-width="1"/>
<line x1="560.3" y1="232.0" x2="560.3" y2="216.0" stroke="#ffffff" stroke-width="1"/>
<line x1="552.4" y1="236.4" x2="552.4" y2="220.4" stroke="#ffffff" stroke-width="1"/>
<line x1="541.6" y1="238.0" x2="541.6" y2="222.0" stroke="#ffffff" stroke-width="1"/>
<line x1="530.8" y1="236.4" x2="530.8" y2="220.4" stroke="#ffffff" stroke-width="1"/>
<line x1="522.9" y1="232.0" x2="522.9" y2="216.0" stroke="#ffffff" stroke-width="1"/>
<line x1="520.0" y1="226.0" x2="520.0" y2="210.0" stroke="#ffffff" stroke-width="1"/>
<path d="M520,226 A21.6,12 0 0 0 563.2,226 L563.2,229 A21.6,12 0 0 1 520,229 Z" fill="#f0f0f0" stroke="none" stroke-width="1" />
<path d="M520,437 L562,437 L568,449 L514,449 Z" fill="url(#col)" stroke="none" stroke-width="1" />
<path d="M514,449 L568,449 L573,477 L508,477 Z" fill="url(#cone)" stroke="none" stroke-width="1" />
<rect x="508" y="476" width="65" height="363" fill="url(#col)"/>
<ellipse cx="509" cy="212" rx="10" ry="4" fill="none" stroke="#fff" stroke-width="1"/>
<ellipse cx="509" cy="222" rx="10" ry="4" fill="none" stroke="#fff" stroke-width="1"/>
<ellipse cx="509" cy="232" rx="10" ry="4" fill="none" stroke="#fff" stroke-width="1"/>
<ellipse cx="509" cy="242" rx="10" ry="4" fill="none" stroke="#fff" stroke-width="1"/>
<polyline points="499.0,210.0 499.0,250.0" fill="none" stroke="#ffffff" stroke-width="1" stroke-linecap="round" stroke-linejoin="round"/>
<polyline points="505.0,210.0 505.0,250.0" fill="none" stroke="#ffffff" stroke-width="1" stroke-linecap="round" stroke-linejoin="round"/>
<polyline points="513.0,210.0 513.0,250.0" fill="none" stroke="#ffffff" stroke-width="1" stroke-linecap="round" stroke-linejoin="round"/>
<polyline points="519.0,210.0 519.0,250.0" fill="none" stroke="#ffffff" stroke-width="1" stroke-linecap="round" stroke-linejoin="round"/>
<polygon points="520.0,268.0 520.0,291.0 516.3,290.8 512.8,290.2 509.3,289.2 506.0,287.9 503.0,286.2 500.2,284.3 497.8,282.0 495.8,279.5 494.1,276.8 493.0,274.0 492.2,271.0 492.0,268.0 492.2,265.0 493.0,262.0 494.1,259.2 495.8,256.5 497.8,254.0 500.2,251.7 503.0,249.8 506.0,248.1 509.3,246.8 512.8,245.8 516.3,245.2 520.0,245.0" fill="#c8c8c8" stroke="none" stroke-width="1"/>
<polygon points="520.0,291.0 516.3,290.8 512.8,290.2 509.3,289.2 506.0,287.9 503.0,286.2 500.2,284.3 497.8,282.0 495.8,279.5 494.1,276.8 493.0,274.0 492.2,271.0 492.0,268.0 492.2,265.0 493.0,262.0 494.1,259.2 495.8,256.5 497.8,254.0 500.2,251.7 503.0,249.8 506.0,248.1 509.3,246.8 512.8,245.8 516.3,245.2 520.0,245.0 520.0,249.0 516.3,249.2 512.8,249.8 509.3,250.8 506.0,252.1 503.0,253.8 500.2,255.7 497.8,258.0 495.8,260.5 494.1,263.2 493.0,266.0 492.2,269.0 492.0,272.0 492.2,275.0 493.0,278.0 494.1,280.8 495.8,283.5 497.8,286.0 500.2,288.3 503.0,290.2 506.0,291.9 509.3,293.2 512.8,294.2 516.3,294.8 520.0,295.0" fill="#e8e8e8" stroke="none" stroke-width="1"/>
<polyline points="520.0,291.0 516.3,290.8 512.8,290.2 509.3,289.2 506.0,287.9 503.0,286.2 500.2,284.3 497.8,282.0 495.8,279.5 494.1,276.8 493.0,274.0 492.2,271.0 492.0,268.0 492.2,265.0 493.0,262.0 494.1,259.2 495.8,256.5 497.8,254.0 500.2,251.7 503.0,249.8 506.0,248.1 509.3,246.8 512.8,245.8 516.3,245.2 520.0,245.0" fill="none" stroke="#ffffff" stroke-width="1" stroke-linecap="round" stroke-linejoin="round"/>
<polyline points="520.0,295.0 516.3,294.8 512.8,294.2 509.3,293.2 506.0,291.9 503.0,290.2 500.2,288.3 497.8,286.0 495.8,283.5 494.1,280.8 493.0,278.0 492.2,275.0 492.0,272.0 492.2,269.0 493.0,266.0 494.1,263.2 495.8,260.5 497.8,258.0 500.2,255.7 503.0,253.8 506.0,252.1 509.3,250.8 512.8,249.8 516.3,249.2 520.0,249.0" fill="none" stroke="#909090" stroke-width="1" stroke-linecap="round" stroke-linejoin="round"/>
<polyline points="515.1,290.7 512.5,290.2 510.0,289.5 507.5,288.6 505.2,287.5 503.0,286.2 500.9,284.8 499.0,283.2 497.3,281.5 495.9,279.7 494.6,277.7 493.6,275.7 492.8,273.6 492.3,271.4 492.0,269.2 492.0,267.0 492.3,264.8 492.8,262.6 493.5,260.5 494.5,258.5 495.8,256.5 497.2,254.6 498.9,252.9 500.7,251.3 502.8,249.9 505.0,248.6 507.3,247.5 509.7,246.6 512.3,245.9 514.9,245.4 517.6,245.1" fill="none" stroke="#ffffff" stroke-width="1" stroke-linecap="round" stroke-linejoin="round"/>
<polyline points="515.1,276.7 512.5,276.2 510.0,275.5 507.5,274.6 505.2,273.5 503.0,272.2 500.9,270.8 499.0,269.2 497.3,267.5 495.9,265.7 494.6,263.7 493.6,261.7 492.8,259.6 492.3,257.4 492.0,255.2 492.0,253.0 492.3,250.8 492.8,248.6 493.5,246.5 494.5,244.5 495.8,242.5 497.2,240.6 498.9,238.9 500.7,237.3 502.8,235.9 505.0,234.6 507.3,233.5 509.7,232.6 512.3,231.9 514.9,231.4 517.6,231.1" fill="none" stroke="#ffffff" stroke-width="1" stroke-linecap="round" stroke-linejoin="round"/>
<line x1="515.1" y1="290.7" x2="515.1" y2="276.7" stroke="#ffffff" stroke-width="1"/>
<line x1="498.2" y1="282.4" x2="498.2" y2="268.4" stroke="#ffffff" stroke-width="1"/>
<line x1="492.0" y1="267.0" x2="492.0" y2="253.0" stroke="#ffffff" stroke-width="1"/>
<line x1="499.8" y1="252.1" x2="499.8" y2="238.1" stroke="#ffffff" stroke-width="1"/>
<line x1="517.6" y1="245.1" x2="517.6" y2="231.1" stroke="#ffffff" stroke-width="1"/>
<polyline points="513.0,250.0 513.0,290.0" fill="none" stroke="#ffffff" stroke-width="1" stroke-linecap="round" stroke-linejoin="round"/>
<polygon points="520.0,318.0 520.0,343.0 516.3,342.8 512.8,342.1 509.3,341.1 506.0,339.7 503.0,337.8 500.2,335.7 497.8,333.2 495.8,330.5 494.1,327.6 493.0,324.5 492.2,321.3 492.0,318.0 492.2,314.7 493.0,311.5 494.1,308.4 495.8,305.5 497.8,302.8 500.2,300.3 503.0,298.2 506.0,296.3 509.3,294.9 512.8,293.9 516.3,293.2 520.0,293.0" fill="#c8c8c8" stroke="none" stroke-width="1"/>
<polygon points="520.0,343.0 516.3,342.8 512.8,342.1 509.3,341.1 506.0,339.7 503.0,337.8 500.2,335.7 497.8,333.2 495.8,330.5 494.1,327.6 493.0,324.5 492.2,321.3 492.0,318.0 492.2,314.7 493.0,311.5 494.1,308.4 495.8,305.5 497.8,302.8 500.2,300.3 503.0,298.2 506.0,296.3 509.3,294.9 512.8,293.9 516.3,293.2 520.0,293.0 520.0,297.0 516.3,297.2 512.8,297.9 509.3,298.9 506.0,300.3 503.0,302.2 500.2,304.3 497.8,306.8 495.8,309.5 494.1,312.4 493.0,315.5 492.2,318.7 492.0,322.0 492.2,325.3 493.0,328.5 494.1,331.6 495.8,334.5 497.8,337.2 500.2,339.7 503.0,341.8 506.0,343.7 509.3,345.1 512.8,346.1 516.3,346.8 520.0,347.0" fill="#e8e8e8" stroke="none" stroke-width="1"/>
<polyline points="520.0,343.0 516.3,342.8 512.8,342.1 509.3,341.1 506.0,339.7 503.0,337.8 500.2,335.7 497.8,333.2 495.8,330.5 494.1,327.6 493.0,324.5 492.2,321.3 492.0,318.0 492.2,314.7 493.0,311.5 494.1,308.4 495.8,305.5 497.8,302.8 500.2,300.3 503.0,298.2 506.0,296.3 509.3,294.9 512.8,293.9 516.3,293.2 520.0,293.0" fill="none" stroke="#ffffff" stroke-width="1" stroke-linecap="round" stroke-linejoin="round"/>
<polyline points="520.0,347.0 516.3,346.8 512.8,346.1 509.3,345.1 506.0,343.7 503.0,341.8 500.2,339.7 497.8,337.2 495.8,334.5 494.1,331.6 493.0,328.5 492.2,325.3 492.0,322.0 492.2,318.7 493.0,315.5 494.1,312.4 495.8,309.5 497.8,306.8 500.2,304.3 503.0,302.2 506.0,300.3 509.3,298.9 512.8,297.9 516.3,297.2 520.0,297.0" fill="none" stroke="#909090" stroke-width="1" stroke-linecap="round" stroke-linejoin="round"/>
<polyline points="515.1,342.6 512.5,342.1 510.0,341.3 507.5,340.4 505.2,339.2 503.0,337.8 500.9,336.3 499.0,334.6 497.3,332.7 495.9,330.7 494.6,328.6 493.6,326.3 492.8,324.0 492.3,321.7 492.0,319.3 492.0,316.9 492.3,314.5 492.8,312.2 493.5,309.9 494.5,307.6 495.8,305.5 497.2,303.5 498.9,301.6 500.7,299.9 502.8,298.3 505.0,296.9 507.3,295.7 509.7,294.7 512.3,294.0 514.9,293.4 517.6,293.1" fill="none" stroke="#ffffff" stroke-width="1" stroke-linecap="round" stroke-linejoin="round"/>
<polyline points="515.1,328.6 512.5,328.1 510.0,327.3 507.5,326.4 505.2,325.2 503.0,323.8 500.9,322.3 499.0,320.6 497.3,318.7 495.9,316.7 494.6,314.6 493.6,312.3 492.8,310.0 492.3,307.7 492.0,305.3 492.0,302.9 492.3,300.5 492.8,298.2 493.5,295.9 494.5,293.6 495.8,291.5 497.2,289.5 498.9,287.6 500.7,285.9 502.8,284.3 505.0,282.9 507.3,281.7 509.7,280.7 512.3,280.0 514.9,279.4 517.6,279.1" fill="none" stroke="#ffffff" stroke-width="1" stroke-linecap="round" stroke-linejoin="round"/>
<line x1="515.1" y1="342.6" x2="515.1" y2="328.6" stroke="#ffffff" stroke-width="1"/>
<line x1="498.2" y1="333.6" x2="498.2" y2="319.6" stroke="#ffffff" stroke-width="1"/>
<line x1="492.0" y1="316.9" x2="492.0" y2="302.9" stroke="#ffffff" stroke-width="1"/>
<line x1="499.8" y1="300.7" x2="499.8" y2="286.7" stroke="#ffffff" stroke-width="1"/>
<line x1="517.6" y1="293.1" x2="517.6" y2="279.1" stroke="#ffffff" stroke-width="1"/>
<polyline points="521.0,268.0 521.0,340.0" fill="none" stroke="#ffffff" stroke-width="1" stroke-linecap="round" stroke-linejoin="round"/>
<polyline points="541.0,268.0 541.0,340.0" fill="none" stroke="#ffffff" stroke-width="1" stroke-linecap="round" stroke-linejoin="round"/>
<polyline points="528.0,280.0 528.0,332.0" fill="none" stroke="#f0e0d8" stroke-width="1" stroke-linecap="round" stroke-linejoin="round"/>
<polyline points="534.0,280.0 534.0,332.0" fill="none" stroke="#f0e0d8" stroke-width="1" stroke-linecap="round" stroke-linejoin="round"/>
<circle cx="531" cy="284" r="0.7" fill="#fff"/>
<circle cx="531" cy="290" r="0.7" fill="#fff"/>
<circle cx="531" cy="296" r="0.7" fill="#fff"/>
<circle cx="531" cy="302" r="0.7" fill="#fff"/>
<circle cx="531" cy="308" r="0.7" fill="#fff"/>
<circle cx="531" cy="314" r="0.7" fill="#fff"/>
<circle cx="531" cy="320" r="0.7" fill="#fff"/>
<circle cx="531" cy="326" r="0.7" fill="#fff"/>
<polygon points="520.0,328.0 542.0,328.0 542.0,344.0 520.0,344.0" fill="#d4d4d4" stroke="none" stroke-width="1"/>
<polyline points="520.0,344.0 542.0,344.0" fill="none" stroke="#ffffff" stroke-width="1.5" stroke-linecap="round" stroke-linejoin="round"/>
<polygon points="562.0,344.0 562.0,330.0 565.4,330.1 568.7,330.5 571.9,331.1 575.0,331.9 577.8,332.9 580.4,334.1 582.6,335.5 584.5,337.0 586.0,338.6 587.1,340.4 587.8,342.2 588.0,344.0 587.8,345.8 587.1,347.6 586.0,349.4 584.5,351.0 582.6,352.5 580.4,353.9 577.8,355.1 575.0,356.1 571.9,356.9 568.7,357.5 565.4,357.9 562.0,358.0" fill="#c8c8c8" stroke="none" stroke-width="1"/>
<polygon points="562.0,330.0 565.4,330.1 568.7,330.5 571.9,331.1 575.0,331.9 577.8,332.9 580.4,334.1 582.6,335.5 584.5,337.0 586.0,338.6 587.1,340.4 587.8,342.2 588.0,344.0 587.8,345.8 587.1,347.6 586.0,349.4 584.5,351.0 582.6,352.5 580.4,353.9 577.8,355.1 575.0,356.1 571.9,356.9 568.7,357.5 565.4,357.9 562.0,358.0 562.0,362.0 565.4,361.9 568.7,361.5 571.9,360.9 575.0,360.1 577.8,359.1 580.4,357.9 582.6,356.5 584.5,355.0 586.0,353.4 587.1,351.6 587.8,349.8 588.0,348.0 587.8,346.2 587.1,344.4 586.0,342.6 584.5,341.0 582.6,339.5 580.4,338.1 577.8,336.9 575.0,335.9 571.9,335.1 568.7,334.5 565.4,334.1 562.0,334.0" fill="#e8e8e8" stroke="none" stroke-width="1"/>
<polyline points="562.0,330.0 565.4,330.1 568.7,330.5 571.9,331.1 575.0,331.9 577.8,332.9 580.4,334.1 582.6,335.5 584.5,337.0 586.0,338.6 587.1,340.4 587.8,342.2 588.0,344.0 587.8,345.8 587.1,347.6 586.0,349.4 584.5,351.0 582.6,352.5 580.4,353.9 577.8,355.1 575.0,356.1 571.9,356.9 568.7,357.5 565.4,357.9 562.0,358.0" fill="none" stroke="#ffffff" stroke-width="1" stroke-linecap="round" stroke-linejoin="round"/>
<polyline points="562.0,334.0 565.4,334.1 568.7,334.5 571.9,335.1 575.0,335.9 577.8,336.9 580.4,338.1 582.6,339.5 584.5,341.0 586.0,342.6 587.1,344.4 587.8,346.2 588.0,348.0 587.8,349.8 587.1,351.6 586.0,353.4 584.5,355.0 582.6,356.5 580.4,357.9 577.8,359.1 575.0,360.1 571.9,360.9 568.7,361.5 565.4,361.9 562.0,362.0" fill="none" stroke="#909090" stroke-width="1" stroke-linecap="round" stroke-linejoin="round"/>
<polyline points="566.5,330.2 568.9,330.5 571.2,330.9 573.4,331.4 575.5,332.0 577.5,332.8 579.4,333.6 581.1,334.5 582.7,335.5 584.0,336.6 585.2,337.7 586.2,338.9 587.0,340.1 587.6,341.4 587.9,342.7 588.0,344.0 587.9,345.3 587.6,346.6 587.0,347.9 586.2,349.1 585.2,350.3 584.0,351.4 582.7,352.5 581.1,353.5 579.4,354.4 577.5,355.2 575.5,356.0 573.4,356.6 571.2,357.1 568.9,357.5 566.5,357.8" fill="none" stroke="#ffffff" stroke-width="1" stroke-linecap="round" stroke-linejoin="round"/>
<polyline points="566.5,318.2 568.9,318.5 571.2,318.9 573.4,319.4 575.5,320.0 577.5,320.8 579.4,321.6 581.1,322.5 582.7,323.5 584.0,324.6 585.2,325.7 586.2,326.9 587.0,328.1 587.6,329.4 587.9,330.7 588.0,332.0 587.9,333.3 587.6,334.6 587.0,335.9 586.2,337.1 585.2,338.3 584.0,339.4 582.7,340.5 581.1,341.5 579.4,342.4 577.5,343.2 575.5,344.0 573.4,344.6 571.2,345.1 568.9,345.5 566.5,345.8" fill="none" stroke="#ffffff" stroke-width="1" stroke-linecap="round" stroke-linejoin="round"/>
<line x1="566.5" y1="330.2" x2="566.5" y2="318.2" stroke="#ffffff" stroke-width="1"/>
<line x1="585.2" y1="337.7" x2="585.2" y2="325.7" stroke="#ffffff" stroke-width="1"/>
<line x1="585.2" y1="350.3" x2="585.2" y2="338.3" stroke="#ffffff" stroke-width="1"/>
<line x1="566.5" y1="357.8" x2="566.5" y2="345.8" stroke="#ffffff" stroke-width="1"/>
<ellipse cx="503" cy="350" rx="10" ry="4" fill="none" stroke="#fff" stroke-width="1"/>
<ellipse cx="503" cy="362" rx="10" ry="4" fill="none" stroke="#fff" stroke-width="1"/>
<ellipse cx="503" cy="374" rx="10" ry="4" fill="none" stroke="#fff" stroke-width="1"/>
<polyline points="495.0,342.0 495.0,385.0" fill="none" stroke="#ffffff" stroke-width="1" stroke-linecap="round" stroke-linejoin="round"/>
<polyline points="503.0,342.0 503.0,385.0" fill="none" stroke="#ffffff" stroke-width="1" stroke-linecap="round" stroke-linejoin="round"/>
<polyline points="511.0,342.0 511.0,385.0" fill="none" stroke="#ffffff" stroke-width="1" stroke-linecap="round" stroke-linejoin="round"/>
<polygon points="520.0,405.0 520.0,427.0 516.3,426.8 512.8,426.3 509.3,425.3 506.0,424.1 503.0,422.5 500.2,420.6 497.8,418.4 495.8,416.0 494.1,413.4 493.0,410.7 492.2,407.9 492.0,405.0 492.2,402.1 493.0,399.3 494.1,396.6 495.8,394.0 497.8,391.6 500.2,389.4 503.0,387.5 506.0,385.9 509.3,384.7 512.8,383.7 516.3,383.2 520.0,383.0" fill="#c8c8c8" stroke="none" stroke-width="1"/>
<polygon points="520.0,427.0 516.3,426.8 512.8,426.3 509.3,425.3 506.0,424.1 503.0,422.5 500.2,420.6 497.8,418.4 495.8,416.0 494.1,413.4 493.0,410.7 492.2,407.9 492.0,405.0 492.2,402.1 493.0,399.3 494.1,396.6 495.8,394.0 497.8,391.6 500.2,389.4 503.0,387.5 506.0,385.9 509.3,384.7 512.8,383.7 516.3,383.2 520.0,383.0 520.0,387.0 516.3,387.2 512.8,387.7 509.3,388.7 506.0,389.9 503.0,391.5 500.2,393.4 497.8,395.6 495.8,398.0 494.1,400.6 493.0,403.3 492.2,406.1 492.0,409.0 492.2,411.9 493.0,414.7 494.1,417.4 495.8,420.0 497.8,422.4 500.2,424.6 503.0,426.5 506.0,428.1 509.3,429.3 512.8,430.3 516.3,430.8 520.0,431.0" fill="#e8e8e8" stroke="none" stroke-width="1"/>
<polyline points="520.0,427.0 516.3,426.8 512.8,426.3 509.3,425.3 506.0,424.1 503.0,422.5 500.2,420.6 497.8,418.4 495.8,416.0 494.1,413.4 493.0,410.7 492.2,407.9 492.0,405.0 492.2,402.1 493.0,399.3 494.1,396.6 495.8,394.0 497.8,391.6 500.2,389.4 503.0,387.5 506.0,385.9 509.3,384.7 512.8,383.7 516.3,383.2 520.0,383.0" fill="none" stroke="#ffffff" stroke-width="1" stroke-linecap="round" stroke-linejoin="round"/>
<polyline points="520.0,431.0 516.3,430.8 512.8,430.3 509.3,429.3 506.0,428.1 503.0,426.5 500.2,424.6 497.8,422.4 495.8,420.0 494.1,417.4 493.0,414.7 492.2,411.9 492.0,409.0 492.2,406.1 493.0,403.3 494.1,400.6 495.8,398.0 497.8,395.6 500.2,393.4 503.0,391.5 506.0,389.9 509.3,388.7 512.8,387.7 516.3,387.2 520.0,387.0" fill="none" stroke="#909090" stroke-width="1" stroke-linecap="round" stroke-linejoin="round"/>
<polyline points="515.1,426.7 512.5,426.2 510.0,425.5 507.5,424.7 505.2,423.7 503.0,422.5 500.9,421.1 499.0,419.6 497.3,417.9 495.9,416.2 494.6,414.3 493.6,412.3 492.8,410.3 492.3,408.3 492.0,406.2 492.0,404.0 492.3,401.9 492.8,399.9 493.5,397.8 494.5,395.9 495.8,394.0 497.2,392.2 498.9,390.6 500.7,389.0 502.8,387.7 505.0,386.4 507.3,385.4 509.7,384.5 512.3,383.9 514.9,383.4 517.6,383.1" fill="none" stroke="#ffffff" stroke-width="1" stroke-linecap="round" stroke-linejoin="round"/>
<polyline points="515.1,412.7 512.5,412.2 510.0,411.5 507.5,410.7 505.2,409.7 503.0,408.5 500.9,407.1 499.0,405.6 497.3,403.9 495.9,402.2 494.6,400.3 493.6,398.3 492.8,396.3 492.3,394.3 492.0,392.2 492.0,390.0 492.3,387.9 492.8,385.9 493.5,383.8 494.5,381.9 495.8,380.0 497.2,378.2 498.9,376.6 500.7,375.0 502.8,373.7 505.0,372.4 507.3,371.4 509.7,370.5 512.3,369.9 514.9,369.4 517.6,369.1" fill="none" stroke="#ffffff" stroke-width="1" stroke-linecap="round" stroke-linejoin="round"/>
<line x1="515.1" y1="426.7" x2="515.1" y2="412.7" stroke="#ffffff" stroke-width="1"/>
<line x1="498.2" y1="418.8" x2="498.2" y2="404.8" stroke="#ffffff" stroke-width="1"/>
<line x1="492.0" y1="404.0" x2="492.0" y2="390.0" stroke="#ffffff" stroke-width="1"/>
<line x1="499.8" y1="389.8" x2="499.8" y2="375.8" stroke="#ffffff" stroke-width="1"/>
<line x1="517.6" y1="383.1" x2="517.6" y2="369.1" stroke="#ffffff" stroke-width="1"/>
<polyline points="506.0,385.0 506.0,420.0" fill="none" stroke="#ffffff" stroke-width="1" stroke-linecap="round" stroke-linejoin="round"/>
<polygon points="514.0,462.0 514.0,484.0 510.1,483.8 506.2,483.3 502.5,482.3 499.0,481.1 495.7,479.5 492.8,477.6 490.2,475.4 488.0,473.0 486.3,470.4 485.0,467.7 484.3,464.9 484.0,462.0 484.3,459.1 485.0,456.3 486.3,453.6 488.0,451.0 490.2,448.6 492.8,446.4 495.7,444.5 499.0,442.9 502.5,441.7 506.2,440.7 510.1,440.2 514.0,440.0" fill="#c8c8c8" stroke="none" stroke-width="1"/>
<polygon points="514.0,484.0 510.1,483.8 506.2,483.3 502.5,482.3 499.0,481.1 495.7,479.5 492.8,477.6 490.2,475.4 488.0,473.0 486.3,470.4 485.0,467.7 484.3,464.9 484.0,462.0 484.3,459.1 485.0,456.3 486.3,453.6 488.0,451.0 490.2,448.6 492.8,446.4 495.7,444.5 499.0,442.9 502.5,441.7 506.2,440.7 510.1,440.2 514.0,440.0 514.0,444.0 510.1,444.2 506.2,444.7 502.5,445.7 499.0,446.9 495.7,448.5 492.8,450.4 490.2,452.6 488.0,455.0 486.3,457.6 485.0,460.3 484.3,463.1 484.0,466.0 484.3,468.9 485.0,471.7 486.3,474.4 488.0,477.0 490.2,479.4 492.8,481.6 495.7,483.5 499.0,485.1 502.5,486.3 506.2,487.3 510.1,487.8 514.0,488.0" fill="#e8e8e8" stroke="none" stroke-width="1"/>
<polyline points="514.0,484.0 510.1,483.8 506.2,483.3 502.5,482.3 499.0,481.1 495.7,479.5 492.8,477.6 490.2,475.4 488.0,473.0 486.3,470.4 485.0,467.7 484.3,464.9 484.0,462.0 484.3,459.1 485.0,456.3 486.3,453.6 488.0,451.0 490.2,448.6 492.8,446.4 495.7,444.5 499.0,442.9 502.5,441.7 506.2,440.7 510.1,440.2 514.0,440.0" fill="none" stroke="#ffffff" stroke-width="1" stroke-linecap="round" stroke-linejoin="round"/>
<polyline points="514.0,488.0 510.1,487.8 506.2,487.3 502.5,486.3 499.0,485.1 495.7,483.5 492.8,481.6 490.2,479.4 488.0,477.0 486.3,474.4 485.0,471.7 484.3,468.9 484.0,466.0 484.3,463.1 485.0,460.3 486.3,457.6 488.0,455.0 490.2,452.6 492.8,450.4 495.7,448.5 499.0,446.9 502.5,445.7 506.2,444.7 510.1,444.2 514.0,444.0" fill="none" stroke="#909090" stroke-width="1" stroke-linecap="round" stroke-linejoin="round"/>
<polyline points="508.3,481.6 505.2,481.1 502.2,480.4 499.3,479.5 496.5,478.4 493.9,477.0 491.5,475.6 489.3,473.9 487.3,472.1 485.6,470.2 484.1,468.1 482.9,466.0 482.0,463.8 481.4,461.5 481.0,459.3 481.0,457.0 481.3,454.7 481.9,452.4 482.8,450.2 484.0,448.0 485.4,446.0 487.1,444.1 489.1,442.3 491.3,440.6 493.7,439.1 496.3,437.8 499.0,436.6 501.9,435.7 504.9,434.9 508.0,434.4 511.1,434.1" fill="none" stroke="#ffffff" stroke-width="1" stroke-linecap="round" stroke-linejoin="round"/>
<polyline points="508.3,467.6 505.2,467.1 502.2,466.4 499.3,465.5 496.5,464.4 493.9,463.0 491.5,461.6 489.3,459.9 487.3,458.1 485.6,456.2 484.1,454.1 482.9,452.0 482.0,449.8 481.4,447.5 481.0,445.3 481.0,443.0 481.3,440.7 481.9,438.4 482.8,436.2 484.0,434.0 485.4,432.0 487.1,430.1 489.1,428.3 491.3,426.6 493.7,425.1 496.3,423.8 499.0,422.6 501.9,421.7 504.9,420.9 508.0,420.4 511.1,420.1" fill="none" stroke="#ffffff" stroke-width="1" stroke-linecap="round" stroke-linejoin="round"/>
<line x1="508.3" y1="481.6" x2="508.3" y2="467.6" stroke="#ffffff" stroke-width="1"/>
<line x1="488.3" y1="473.0" x2="488.3" y2="459.0" stroke="#ffffff" stroke-width="1"/>
<line x1="481.0" y1="457.0" x2="481.0" y2="443.0" stroke="#ffffff" stroke-width="1"/>
<line x1="490.2" y1="441.4" x2="490.2" y2="427.4" stroke="#ffffff" stroke-width="1"/>
<line x1="511.1" y1="434.1" x2="511.1" y2="420.1" stroke="#ffffff" stroke-width="1"/>
<polygon points="568.0,462.0 568.0,447.0 571.7,447.1 575.2,447.5 578.7,448.1 582.0,449.0 585.0,450.1 587.8,451.4 590.2,452.9 592.2,454.5 593.9,456.3 595.0,458.1 595.8,460.0 596.0,462.0 595.8,464.0 595.0,465.9 593.9,467.7 592.2,469.5 590.2,471.1 587.8,472.6 585.0,473.9 582.0,475.0 578.7,475.9 575.2,476.5 571.7,476.9 568.0,477.0" fill="#c8c8c8" stroke="none" stroke-width="1"/>
<polygon points="568.0,447.0 571.7,447.1 575.2,447.5 578.7,448.1 582.0,449.0 585.0,450.1 587.8,451.4 590.2,452.9 592.2,454.5 593.9,456.3 595.0,458.1 595.8,460.0 596.0,462.0 595.8,464.0 595.0,465.9 593.9,467.7 592.2,469.5 590.2,471.1 587.8,472.6 585.0,473.9 582.0,475.0 578.7,475.9 575.2,476.5 571.7,476.9 568.0,477.0 568.0,481.0 571.7,480.9 575.2,480.5 578.7,479.9 582.0,479.0 585.0,477.9 587.8,476.6 590.2,475.1 592.2,473.5 593.9,471.7 595.0,469.9 595.8,468.0 596.0,466.0 595.8,464.0 595.0,462.1 593.9,460.3 592.2,458.5 590.2,456.9 587.8,455.4 585.0,454.1 582.0,453.0 578.7,452.1 575.2,451.5 571.7,451.1 568.0,451.0" fill="#e8e8e8" stroke="none" stroke-width="1"/>
<polyline points="568.0,447.0 571.7,447.1 575.2,447.5 578.7,448.1 582.0,449.0 585.0,450.1 587.8,451.4 590.2,452.9 592.2,454.5 593.9,456.3 595.0,458.1 595.8,460.0 596.0,462.0 595.8,464.0 595.0,465.9 593.9,467.7 592.2,469.5 590.2,471.1 587.8,472.6 585.0,473.9 582.0,475.0 578.7,475.9 575.2,476.5 571.7,476.9 568.0,477.0" fill="none" stroke="#ffffff" stroke-width="1" stroke-linecap="round" stroke-linejoin="round"/>
<polyline points="568.0,451.0 571.7,451.1 575.2,451.5 578.7,452.1 582.0,453.0 585.0,454.1 587.8,455.4 590.2,456.9 592.2,458.5 593.9,460.3 595.0,462.1 595.8,464.0 596.0,466.0 595.8,468.0 595.0,469.9 593.9,471.7 592.2,473.5 590.2,475.1 587.8,476.6 585.0,477.9 582.0,479.0 578.7,479.9 575.2,480.5 571.7,480.9 568.0,481.0" fill="none" stroke="#909090" stroke-width="1" stroke-linecap="round" stroke-linejoin="round"/>
<polyline points="570.4,442.1 573.2,442.3 575.9,442.6 578.5,443.2 581.0,443.8 583.4,444.6 585.6,445.6 587.7,446.6 589.6,447.8 591.2,449.1 592.6,450.4 593.8,451.8 594.8,453.3 595.5,454.9 595.9,456.4 596.0,458.0 595.9,459.6 595.5,461.1 594.8,462.7 593.8,464.2 592.6,465.6 591.2,466.9 589.6,468.2 587.7,469.4 585.6,470.4 583.4,471.4 581.0,472.2 578.5,472.8 575.9,473.4 573.2,473.7 570.4,473.9" fill="none" stroke="#ffffff" stroke-width="1" stroke-linecap="round" stroke-linejoin="round"/>
<polyline points="570.4,428.1 573.2,428.3 575.9,428.6 578.5,429.2 581.0,429.8 583.4,430.6 585.6,431.6 587.7,432.6 589.6,433.8 591.2,435.1 592.6,436.4 593.8,437.8 594.8,439.3 595.5,440.9 595.9,442.4 596.0,444.0 595.9,445.6 595.5,447.1 594.8,448.7 593.8,450.2 592.6,451.6 591.2,452.9 589.6,454.2 587.7,455.4 585.6,456.4 583.4,457.4 581.0,458.2 578.5,458.8 575.9,459.4 573.2,459.7 570.4,459.9" fill="none" stroke="#ffffff" stroke-width="1" stroke-linecap="round" stroke-linejoin="round"/>
<line x1="570.4" y1="442.1" x2="570.4" y2="428.1" stroke="#ffffff" stroke-width="1"/>
<line x1="588.6" y1="447.2" x2="588.6" y2="433.2" stroke="#ffffff" stroke-width="1"/>
<line x1="596.0" y1="458.0" x2="596.0" y2="444.0" stroke="#ffffff" stroke-width="1"/>
<line x1="588.6" y1="468.8" x2="588.6" y2="454.8" stroke="#ffffff" stroke-width="1"/>
<line x1="570.4" y1="473.9" x2="570.4" y2="459.9" stroke="#ffffff" stroke-width="1"/>
<polyline points="503.0,454.0 503.0,545.0" fill="none" stroke="#ffffff" stroke-width="1" stroke-linecap="round" stroke-linejoin="round"/>
<polyline points="523.0,454.0 523.0,545.0" fill="none" stroke="#ffffff" stroke-width="1" stroke-linecap="round" stroke-linejoin="round"/>
<polyline points="503.0,458.0 523.0,458.0" fill="none" stroke="#e8e8e8" stroke-width="0.6" stroke-linecap="round" stroke-linejoin="round"/>
<polyline points="503.0,463.0 523.0,463.0" fill="none" stroke="#e8e8e8" stroke-width="0.6" stroke-linecap="round" stroke-linejoin="round"/>
<polyline points="503.0,468.0 523.0,468.0" fill="none" stroke="#e8e8e8" stroke-width="0.6" stroke-linecap="round" stroke-linejoin="round"/>
<polyline points="503.0,473.0 523.0,473.0" fill="none" stroke="#e8e8e8" stroke-width="0.6" stroke-linecap="round" stroke-linejoin="round"/>
<polyline points="503.0,478.0 523.0,478.0" fill="none" stroke="#e8e8e8" stroke-width="0.6" stroke-linecap="round" stroke-linejoin="round"/>
<polyline points="503.0,483.0 523.0,483.0" fill="none" stroke="#e8e8e8" stroke-width="0.6" stroke-linecap="round" stroke-linejoin="round"/>
<polyline points="503.0,488.0 523.0,488.0" fill="none" stroke="#e8e8e8" stroke-width="0.6" stroke-linecap="round" stroke-linejoin="round"/>
<polyline points="503.0,493.0 523.0,493.0" fill="none" stroke="#e8e8e8" stroke-width="0.6" stroke-linecap="round" stroke-linejoin="round"/>
<polyline points="503.0,498.0 523.0,498.0" fill="none" stroke="#e8e8e8" stroke-width="0.6" stroke-linecap="round" stroke-linejoin="round"/>
<polyline points="503.0,503.0 523.0,503.0" fill="none" stroke="#e8e8e8" stroke-width="0.6" stroke-linecap="round" stroke-linejoin="round"/>
<polyline points="503.0,508.0 523.0,508.0" fill="none" stroke="#e8e8e8" stroke-width="0.6" stroke-linecap="round" stroke-linejoin="round"/>
<polyline points="503.0,513.0 523.0,513.0" fill="none" stroke="#e8e8e8" stroke-width="0.6" stroke-linecap="round" stroke-linejoin="round"/>
<polyline points="503.0,518.0 523.0,518.0" fill="none" stroke="#e8e8e8" stroke-width="0.6" stroke-linecap="round" stroke-linejoin="round"/>
<polyline points="503.0,523.0 523.0,523.0" fill="none" stroke="#e8e8e8" stroke-width="0.6" stroke-linecap="round" stroke-linejoin="round"/>
<polyline points="503.0,528.0 523.0,528.0" fill="none" stroke="#e8e8e8" stroke-width="0.6" stroke-linecap="round" stroke-linejoin="round"/>
<polyline points="503.0,533.0 523.0,533.0" fill="none" stroke="#e8e8e8" stroke-width="0.6" stroke-linecap="round" stroke-linejoin="round"/>
<polyline points="503.0,538.0 523.0,538.0" fill="none" stroke="#e8e8e8" stroke-width="0.6" stroke-linecap="round" stroke-linejoin="round"/>
<polyline points="503.0,543.0 523.0,543.0" fill="none" stroke="#e8e8e8" stroke-width="0.6" stroke-linecap="round" stroke-linejoin="round"/>
<polyline points="508.0,460.0 508.0,540.0" fill="none" stroke="#ffffff" stroke-width="1" stroke-linecap="round" stroke-linejoin="round"/>
<polyline points="518.0,460.0 518.0,540.0" fill="none" stroke="#ffffff" stroke-width="1" stroke-linecap="round" stroke-linejoin="round"/>
<polygon points="508.0,520.0 508.0,550.0 504.9,549.7 501.8,549.0 498.8,547.7 496.0,546.0 493.4,543.8 491.0,541.2 489.0,538.3 487.2,535.0 485.8,531.5 484.8,527.8 484.2,523.9 484.0,520.0 484.2,516.1 484.8,512.2 485.8,508.5 487.2,505.0 489.0,501.7 491.0,498.8 493.4,496.2 496.0,494.0 498.8,492.3 501.8,491.0 504.9,490.3 508.0,490.0" fill="#c8c8c8" stroke="none" stroke-width="1"/>
<polygon points="508.0,550.0 504.9,549.7 501.8,549.0 498.8,547.7 496.0,546.0 493.4,543.8 491.0,541.2 489.0,538.3 487.2,535.0 485.8,531.5 484.8,527.8 484.2,523.9 484.0,520.0 484.2,516.1 484.8,512.2 485.8,508.5 487.2,505.0 489.0,501.7 491.0,498.8 493.4,496.2 496.0,494.0 498.8,492.3 501.8,491.0 504.9,490.3 508.0,490.0 508.0,494.0 504.9,494.3 501.8,495.0 498.8,496.3 496.0,498.0 493.4,500.2 491.0,502.8 489.0,505.7 487.2,509.0 485.8,512.5 484.8,516.2 484.2,520.1 484.0,524.0 484.2,527.9 484.8,531.8 485.8,535.5 487.2,539.0 489.0,542.3 491.0,545.2 493.4,547.8 496.0,550.0 498.8,551.7 501.8,553.0 504.9,553.7 508.0,554.0" fill="#e8e8e8" stroke="none" stroke-width="1"/>
<polyline points="508.0,550.0 504.9,549.7 501.8,549.0 498.8,547.7 496.0,546.0 493.4,543.8 491.0,541.2 489.0,538.3 487.2,535.0 485.8,531.5 484.8,527.8 484.2,523.9 484.0,520.0 484.2,516.1 484.8,512.2 485.8,508.5 487.2,505.0 489.0,501.7 491.0,498.8 493.4,496.2 496.0,494.0 498.8,492.3 501.8,491.0 504.9,490.3 508.0,490.0" fill="none" stroke="#ffffff" stroke-width="1" stroke-linecap="round" stroke-linejoin="round"/>
<polyline points="508.0,554.0 504.9,553.7 501.8,553.0 498.8,551.7 496.0,550.0 493.4,547.8 491.0,545.2 489.0,542.3 487.2,539.0 485.8,535.5 484.8,531.8 484.2,527.9 484.0,524.0 484.2,520.1 484.8,516.2 485.8,512.5 487.2,509.0 489.0,505.7 491.0,502.8 493.4,500.2 496.0,498.0 498.8,496.3 501.8,495.0 504.9,494.3 508.0,494.0" fill="none" stroke="#909090" stroke-width="1" stroke-linecap="round" stroke-linejoin="round"/>
<polyline points="503.8,547.5 501.6,546.9 499.4,546.0 497.3,544.8 495.3,543.4 493.4,541.8 491.6,539.9 490.0,537.9 488.6,535.6 487.3,533.2 486.2,530.7 485.4,528.0 484.7,525.3 484.3,522.4 484.0,519.6 484.0,516.7 484.2,513.8 484.7,511.0 485.3,508.2 486.2,505.6 487.2,503.0 488.5,500.6 489.9,498.3 491.5,496.2 493.2,494.4 495.1,492.7 497.1,491.3 499.2,490.1 501.4,489.2 503.6,488.5 505.9,488.1" fill="none" stroke="#ffffff" stroke-width="1" stroke-linecap="round" stroke-linejoin="round"/>
<polyline points="503.8,533.5 501.6,532.9 499.4,532.0 497.3,530.8 495.3,529.4 493.4,527.8 491.6,525.9 490.0,523.9 488.6,521.6 487.3,519.2 486.2,516.7 485.4,514.0 484.7,511.3 484.3,508.4 484.0,505.6 484.0,502.7 484.2,499.8 484.7,497.0 485.3,494.2 486.2,491.6 487.2,489.0 488.5,486.6 489.9,484.3 491.5,482.2 493.2,480.4 495.1,478.7 497.1,477.3 499.2,476.1 501.4,475.2 503.6,474.5 505.9,474.1" fill="none" stroke="#ffffff" stroke-width="1" stroke-linecap="round" stroke-linejoin="round"/>
<line x1="503.8" y1="547.5" x2="503.8" y2="533.5" stroke="#ffffff" stroke-width="1"/>
<line x1="489.3" y1="536.8" x2="489.3" y2="522.8" stroke="#ffffff" stroke-width="1"/>
<line x1="484.0" y1="516.7" x2="484.0" y2="502.7" stroke="#ffffff" stroke-width="1"/>
<line x1="490.7" y1="497.3" x2="490.7" y2="483.3" stroke="#ffffff" stroke-width="1"/>
<line x1="505.9" y1="488.1" x2="505.9" y2="474.1" stroke="#ffffff" stroke-width="1"/>
<polygon points="508.0,548.0 525.0,548.0 525.0,560.0 508.0,560.0" fill="#d6d6d6" stroke="none" stroke-width="1"/>
<polygon points="540.0,622.0 596.0,622.0 595.5,625.3 594.1,628.5 591.7,631.6 588.5,634.5 584.4,637.2 579.6,639.7 574.1,641.8 568.0,643.7 561.4,645.1 554.5,646.1 547.3,646.8 540.0,647.0 532.7,646.8 525.5,646.1 518.6,645.1 512.0,643.7 505.9,641.8 500.4,639.7 495.6,637.2 491.5,634.5 488.3,631.6 485.9,628.5 484.5,625.3 484.0,622.0" fill="#c8c8c8" stroke="none" stroke-width="1"/>
<polygon points="596.0,622.0 595.5,625.3 594.1,628.5 591.7,631.6 588.5,634.5 584.4,637.2 579.6,639.7 574.1,641.8 568.0,643.7 561.4,645.1 554.5,646.1 547.3,646.8 540.0,647.0 532.7,646.8 525.5,646.1 518.6,645.1 512.0,643.7 505.9,641.8 500.4,639.7 495.6,637.2 491.5,634.5 488.3,631.6 485.9,628.5 484.5,625.3 484.0,622.0 484.0,628.0 484.5,631.3 485.9,634.5 488.3,637.6 491.5,640.5 495.6,643.2 500.4,645.7 505.9,647.8 512.0,649.7 518.6,651.1 525.5,652.1 532.7,652.8 540.0,653.0 547.3,652.8 554.5,652.1 561.4,651.1 568.0,649.7 574.1,647.8 579.6,645.7 584.4,643.2 588.5,640.5 591.7,637.6 594.1,634.5 595.5,631.3 596.0,628.0" fill="#e8e8e8" stroke="none" stroke-width="1"/>
<polyline points="596.0,622.0 595.5,625.3 594.1,628.5 591.7,631.6 588.5,634.5 584.4,637.2 579.6,639.7 574.1,641.8 568.0,643.7 561.4,645.1 554.5,646.1 547.3,646.8 540.0,647.0 532.7,646.8 525.5,646.1 518.6,645.1 512.0,643.7 505.9,641.8 500.4,639.7 495.6,637.2 491.5,634.5 488.3,631.6 485.9,628.5 484.5,625.3 484.0,622.0" fill="none" stroke="#ffffff" stroke-width="1" stroke-linecap="round" stroke-linejoin="round"/>
<polyline points="596.0,628.0 595.5,631.3 594.1,634.5 591.7,637.6 588.5,640.5 584.4,643.2 579.6,645.7 574.1,647.8 568.0,649.7 561.4,651.1 554.5,652.1 547.3,652.8 540.0,653.0 532.7,652.8 525.5,652.1 518.6,651.1 512.0,649.7 505.9,647.8 500.4,645.7 495.6,643.2 491.5,640.5 488.3,637.6 485.9,634.5 484.5,631.3 484.0,628.0" fill="none" stroke="#909090" stroke-width="1" stroke-linecap="round" stroke-linejoin="round"/>
<polyline points="588.5,634.5 585.9,636.3 582.9,638.1 579.6,639.7 576.0,641.2 572.1,642.5 568.0,643.7 563.7,644.7 559.2,645.5 554.5,646.1 549.7,646.6 544.9,646.9 540.0,647.0 535.1,646.9 530.3,646.6 525.5,646.1 520.8,645.5 516.3,644.7 512.0,643.7 507.9,642.5 504.0,641.2 500.4,639.7 497.1,638.1 494.1,636.3 491.5,634.5 489.2,632.6 487.4,630.6 485.9,628.5 484.9,626.3 484.2,624.2 484.0,622.0" fill="none" stroke="#ffffff" stroke-width="1" stroke-linecap="round" stroke-linejoin="round"/>
<polyline points="588.5,620.5 585.9,622.3 582.9,624.1 579.6,625.7 576.0,627.2 572.1,628.5 568.0,629.7 563.7,630.7 559.2,631.5 554.5,632.1 549.7,632.6 544.9,632.9 540.0,633.0 535.1,632.9 530.3,632.6 525.5,632.1 520.8,631.5 516.3,630.7 512.0,629.7 507.9,628.5 504.0,627.2 500.4,625.7 497.1,624.1 494.1,622.3 491.5,620.5 489.2,618.6 487.4,616.6 485.9,614.5 484.9,612.3 484.2,610.2 484.0,608.0" fill="none" stroke="#ffffff" stroke-width="1" stroke-linecap="round" stroke-linejoin="round"/>
<line x1="588.5" y1="634.5" x2="588.5" y2="620.5" stroke="#ffffff" stroke-width="1"/>
<line x1="578.4" y1="640.2" x2="578.4" y2="626.2" stroke="#ffffff" stroke-width="1"/>
<line x1="565.1" y1="644.3" x2="565.1" y2="630.3" stroke="#ffffff" stroke-width="1"/>
<line x1="549.7" y1="646.6" x2="549.7" y2="632.6" stroke="#ffffff" stroke-width="1"/>
<line x1="533.5" y1="646.8" x2="533.5" y2="632.8" stroke="#ffffff" stroke-width="1"/>
<line x1="517.8" y1="645.0" x2="517.8" y2="631.0" stroke="#ffffff" stroke-width="1"/>
<line x1="504.0" y1="641.2" x2="504.0" y2="627.2" stroke="#ffffff" stroke-width="1"/>
<line x1="493.2" y1="635.7" x2="493.2" y2="621.7" stroke="#ffffff" stroke-width="1"/>
<line x1="486.4" y1="629.2" x2="486.4" y2="615.2" stroke="#ffffff" stroke-width="1"/>
<line x1="484.0" y1="622.0" x2="484.0" y2="608.0" stroke="#ffffff" stroke-width="1"/>
<rect x="508" y="597" width="65" height="25" fill="url(#col)"/>
<polygon points="476.0,637.0 507.0,642.0 507.0,657.0 476.0,652.0" fill="#d4d4d4" stroke="none" stroke-width="1"/>
<polyline points="476.0,637.0 507.0,642.0" fill="none" stroke="#ffffff" stroke-width="1" stroke-linecap="round" stroke-linejoin="round"/>
<polyline points="476.0,625.0 507.0,630.0" fill="none" stroke="#ffffff" stroke-width="1" stroke-linecap="round" stroke-linejoin="round"/>
<line x1="476.0" y1="637.0" x2="476.0" y2="625.0" stroke="#ffffff" stroke-width="1"/>
<line x1="491.5" y1="639.5" x2="491.5" y2="627.5" stroke="#ffffff" stroke-width="1"/>
<polygon points="508.0,722.0 508.0,749.0 504.3,748.8 500.8,748.1 497.3,746.9 494.0,745.4 491.0,743.4 488.2,741.1 485.8,738.4 483.8,735.5 482.1,732.3 481.0,729.0 480.2,725.5 480.0,722.0 480.2,718.5 481.0,715.0 482.1,711.7 483.8,708.5 485.8,705.6 488.2,702.9 491.0,700.6 494.0,698.6 497.3,697.1 500.8,695.9 504.3,695.2 508.0,695.0" fill="#c8c8c8" stroke="none" stroke-width="1"/>
<polygon points="508.0,749.0 504.3,748.8 500.8,748.1 497.3,746.9 494.0,745.4 491.0,743.4 488.2,741.1 485.8,738.4 483.8,735.5 482.1,732.3 481.0,729.0 480.2,725.5 480.0,722.0 480.2,718.5 481.0,715.0 482.1,711.7 483.8,708.5 485.8,705.6 488.2,702.9 491.0,700.6 494.0,698.6 497.3,697.1 500.8,695.9 504.3,695.2 508.0,695.0 508.0,699.0 504.3,699.2 500.8,699.9 497.3,701.1 494.0,702.6 491.0,704.6 488.2,706.9 485.8,709.6 483.8,712.5 482.1,715.7 481.0,719.0 480.2,722.5 480.0,726.0 480.2,729.5 481.0,733.0 482.1,736.3 483.8,739.5 485.8,742.4 488.2,745.1 491.0,747.4 494.0,749.4 497.3,750.9 500.8,752.1 504.3,752.8 508.0,753.0" fill="#e8e8e8" stroke="none" stroke-width="1"/>
<polyline points="508.0,749.0 504.3,748.8 500.8,748.1 497.3,746.9 494.0,745.4 491.0,743.4 488.2,741.1 485.8,738.4 483.8,735.5 482.1,732.3 481.0,729.0 480.2,725.5 480.0,722.0 480.2,718.5 481.0,715.0 482.1,711.7 483.8,708.5 485.8,705.6 488.2,702.9 491.0,700.6 494.0,698.6 497.3,697.1 500.8,695.9 504.3,695.2 508.0,695.0" fill="none" stroke="#ffffff" stroke-width="1" stroke-linecap="round" stroke-linejoin="round"/>
<polyline points="508.0,753.0 504.3,752.8 500.8,752.1 497.3,750.9 494.0,749.4 491.0,747.4 488.2,745.1 485.8,742.4 483.8,739.5 482.1,736.3 481.0,733.0 480.2,729.5 480.0,726.0 480.2,722.5 481.0,719.0 482.1,715.7 483.8,712.5 485.8,709.6 488.2,706.9 491.0,704.6 494.0,702.6 497.3,701.1 500.8,699.9 504.3,699.2 508.0,699.0" fill="none" stroke="#909090" stroke-width="1" stroke-linecap="round" stroke-linejoin="round"/>
<polyline points="503.1,746.6 500.5,746.0 498.0,745.2 495.5,744.2 493.2,742.9 491.0,741.4 488.9,739.7 487.0,737.9 485.3,735.9 483.9,733.7 482.6,731.4 481.6,729.0 480.8,726.5 480.3,724.0 480.0,721.4 480.0,718.8 480.3,716.2 480.8,713.7 481.5,711.2 482.5,708.8 483.8,706.5 485.2,704.3 486.9,702.3 488.7,700.4 490.8,698.7 493.0,697.2 495.3,695.9 497.7,694.9 500.3,694.0 502.9,693.5 505.6,693.1" fill="none" stroke="#ffffff" stroke-width="1" stroke-linecap="round" stroke-linejoin="round"/>
<polyline points="503.1,732.6 500.5,732.0 498.0,731.2 495.5,730.2 493.2,728.9 491.0,727.4 488.9,725.7 487.0,723.9 485.3,721.9 483.9,719.7 482.6,717.4 481.6,715.0 480.8,712.5 480.3,710.0 480.0,707.4 480.0,704.8 480.3,702.2 480.8,699.7 481.5,697.2 482.5,694.8 483.8,692.5 485.2,690.3 486.9,688.3 488.7,686.4 490.8,684.7 493.0,683.2 495.3,681.9 497.7,680.9 500.3,680.0 502.9,679.5 505.6,679.1" fill="none" stroke="#ffffff" stroke-width="1" stroke-linecap="round" stroke-linejoin="round"/>
<line x1="503.1" y1="746.6" x2="503.1" y2="732.6" stroke="#ffffff" stroke-width="1"/>
<line x1="486.2" y1="736.9" x2="486.2" y2="722.9" stroke="#ffffff" stroke-width="1"/>
<line x1="480.0" y1="718.8" x2="480.0" y2="704.8" stroke="#ffffff" stroke-width="1"/>
<line x1="487.8" y1="701.3" x2="487.8" y2="687.3" stroke="#ffffff" stroke-width="1"/>
<line x1="505.6" y1="693.1" x2="505.6" y2="679.1" stroke="#ffffff" stroke-width="1"/>
<polyline points="495.0,650.0 495.0,700.0" fill="none" stroke="#ffffff" stroke-width="1" stroke-linecap="round" stroke-linejoin="round"/>
<polyline points="504.0,650.0 504.0,700.0" fill="none" stroke="#ffffff" stroke-width="1" stroke-linecap="round" stroke-linejoin="round"/>
<polygon points="540.0,780.0 597.0,780.0 596.5,783.4 595.1,786.7 592.7,789.9 589.4,793.0 585.2,795.8 580.3,798.4 574.7,800.6 568.5,802.5 561.8,804.0 554.8,805.1 547.4,805.8 540.0,806.0 532.6,805.8 525.2,805.1 518.2,804.0 511.5,802.5 505.3,800.6 499.7,798.4 494.8,795.8 490.6,793.0 487.3,789.9 484.9,786.7 483.5,783.4 483.0,780.0" fill="#c8c8c8" stroke="none" stroke-width="1"/>
<polygon points="597.0,780.0 596.5,783.4 595.1,786.7 592.7,789.9 589.4,793.0 585.2,795.8 580.3,798.4 574.7,800.6 568.5,802.5 561.8,804.0 554.8,805.1 547.4,805.8 540.0,806.0 532.6,805.8 525.2,805.1 518.2,804.0 511.5,802.5 505.3,800.6 499.7,798.4 494.8,795.8 490.6,793.0 487.3,789.9 484.9,786.7 483.5,783.4 483.0,780.0 483.0,786.0 483.5,789.4 484.9,792.7 487.3,795.9 490.6,799.0 494.8,801.8 499.7,804.4 505.3,806.6 511.5,808.5 518.2,810.0 525.2,811.1 532.6,811.8 540.0,812.0 547.4,811.8 554.8,811.1 561.8,810.0 568.5,808.5 574.7,806.6 580.3,804.4 585.2,801.8 589.4,799.0 592.7,795.9 595.1,792.7 596.5,789.4 597.0,786.0" fill="#e8e8e8" stroke="none" stroke-width="1"/>
<polyline points="597.0,780.0 596.5,783.4 595.1,786.7 592.7,789.9 589.4,793.0 585.2,795.8 580.3,798.4 574.7,800.6 568.5,802.5 561.8,804.0 554.8,805.1 547.4,805.8 540.0,806.0 532.6,805.8 525.2,805.1 518.2,804.0 511.5,802.5 505.3,800.6 499.7,798.4 494.8,795.8 490.6,793.0 487.3,789.9 484.9,786.7 483.5,783.4 483.0,780.0" fill="none" stroke="#ffffff" stroke-width="1" stroke-linecap="round" stroke-linejoin="round"/>
<polyline points="597.0,786.0 596.5,789.4 595.1,792.7 592.7,795.9 589.4,799.0 585.2,801.8 580.3,804.4 574.7,806.6 568.5,808.5 561.8,810.0 554.8,811.1 547.4,811.8 540.0,812.0 532.6,811.8 525.2,811.1 518.2,810.0 511.5,808.5 505.3,806.6 499.7,804.4 494.8,801.8 490.6,799.0 487.3,795.9 484.9,792.7 483.5,789.4 483.0,786.0" fill="none" stroke="#909090" stroke-width="1" stroke-linecap="round" stroke-linejoin="round"/>
<polyline points="589.4,793.0 586.7,794.9 583.7,796.7 580.3,798.4 576.6,799.9 572.7,801.3 568.5,802.5 564.1,803.6 559.5,804.4 554.8,805.1 549.9,805.6 545.0,805.9 540.0,806.0 535.0,805.9 530.1,805.6 525.2,805.1 520.5,804.4 515.9,803.6 511.5,802.5 507.3,801.3 503.4,799.9 499.7,798.4 496.3,796.7 493.3,794.9 490.6,793.0 488.3,791.0 486.4,788.9 484.9,786.7 483.9,784.5 483.2,782.3 483.0,780.0" fill="none" stroke="#ffffff" stroke-width="1" stroke-linecap="round" stroke-linejoin="round"/>
<polyline points="589.4,779.0 586.7,780.9 583.7,782.7 580.3,784.4 576.6,785.9 572.7,787.3 568.5,788.5 564.1,789.6 559.5,790.4 554.8,791.1 549.9,791.6 545.0,791.9 540.0,792.0 535.0,791.9 530.1,791.6 525.2,791.1 520.5,790.4 515.9,789.6 511.5,788.5 507.3,787.3 503.4,785.9 499.7,784.4 496.3,782.7 493.3,780.9 490.6,779.0 488.3,777.0 486.4,774.9 484.9,772.7 483.9,770.5 483.2,768.3 483.0,766.0" fill="none" stroke="#ffffff" stroke-width="1" stroke-linecap="round" stroke-linejoin="round"/>
<line x1="589.4" y1="793.0" x2="589.4" y2="779.0" stroke="#ffffff" stroke-width="1"/>
<line x1="579.1" y1="798.9" x2="579.1" y2="784.9" stroke="#ffffff" stroke-width="1"/>
<line x1="565.6" y1="803.2" x2="565.6" y2="789.2" stroke="#ffffff" stroke-width="1"/>
<line x1="549.9" y1="805.6" x2="549.9" y2="791.6" stroke="#ffffff" stroke-width="1"/>
<line x1="533.4" y1="805.8" x2="533.4" y2="791.8" stroke="#ffffff" stroke-width="1"/>
<line x1="517.4" y1="803.9" x2="517.4" y2="789.9" stroke="#ffffff" stroke-width="1"/>
<line x1="503.4" y1="799.9" x2="503.4" y2="785.9" stroke="#ffffff" stroke-width="1"/>
<line x1="492.4" y1="794.3" x2="492.4" y2="780.3" stroke="#ffffff" stroke-width="1"/>
<line x1="485.4" y1="787.5" x2="485.4" y2="773.5" stroke="#ffffff" stroke-width="1"/>
<line x1="483.0" y1="780.0" x2="483.0" y2="766.0" stroke="#ffffff" stroke-width="1"/>
<rect x="508" y="754" width="65" height="26" fill="url(#col)"/>
<polyline points="488.0,790.0 488.0,810.0" fill="none" stroke="#ffffff" stroke-width="1" stroke-linecap="round" stroke-linejoin="round"/>
<polyline points="492.0,680.0 492.0,700.0" fill="none" stroke="#e01888" stroke-width="4" stroke-linecap="round" stroke-linejoin="round"/>
<polyline points="495.0,745.0 495.0,760.0" fill="none" stroke="#e01888" stroke-width="3" stroke-linecap="round" stroke-linejoin="round"/>
<path d="M541,224 Q545,214 556,215 Q574,219 574,240 L574,527 Q575,537 586,543 L622,561" fill="none" stroke="#008800" stroke-width="8.5" stroke-linecap="round"/>
<path d="M541,224 Q545,214 556,215 Q574,219 574,240 L574,527 Q575,537 586,543 L622,561" fill="none" stroke="#00d000" stroke-width="5" stroke-linecap="round"/>
<ellipse cx="541" cy="224" rx="6" ry="3.5" fill="#10d010" stroke="none" stroke-width="1"/>
<polyline points="580.0,454.0 589.0,456.0 594.0,463.0 594.0,839.0" fill="none" stroke="#008800" stroke-width="6" stroke-linecap="round" stroke-linejoin="round"/>
<polyline points="580.0,454.0 589.0,456.0 594.0,463.0 594.0,839.0" fill="none" stroke="#00d000" stroke-width="3.7199999999999998" stroke-linecap="round" stroke-linejoin="round"/>
<polyline points="538.0,625.0 598.0,661.0" fill="none" stroke="#008800" stroke-width="9" stroke-linecap="round" stroke-linejoin="round"/>
<polyline points="538.0,625.0 598.0,661.0" fill="none" stroke="#00d000" stroke-width="5.58" stroke-linecap="round" stroke-linejoin="round"/>
<ellipse cx="537" cy="624" rx="6" ry="5" fill="#00c000" stroke="none" stroke-width="1"/>
<polyline points="598.0,661.0 650.0,698.0" fill="none" stroke="#008800" stroke-width="7" stroke-linecap="round" stroke-linejoin="round"/>
<polyline points="598.0,661.0 650.0,698.0" fill="none" stroke="#00d000" stroke-width="4.34" stroke-linecap="round" stroke-linejoin="round"/>
<polyline points="577.0,670.0 577.0,760.0" fill="none" stroke="#00d000" stroke-width="1.5" stroke-linecap="round" stroke-linejoin="round"/>
<polyline points="580.0,620.0 580.0,700.0" fill="none" stroke="#ffffff" stroke-width="1" stroke-linecap="round" stroke-linejoin="round"/>
<polyline points="593.0,673.0 593.0,690.0" fill="none" stroke="#a89000" stroke-width="7" stroke-linecap="round" stroke-linejoin="round"/>
<polyline points="593.0,673.0 593.0,690.0" fill="none" stroke="#f8dc20" stroke-width="4.34" stroke-linecap="round" stroke-linejoin="round"/>
<polyline points="578.0,676.0 596.0,680.0" fill="none" stroke="#a89000" stroke-width="4" stroke-linecap="round" stroke-linejoin="round"/>
<polyline points="578.0,676.0 596.0,680.0" fill="none" stroke="#f8dc20" stroke-width="2.48" stroke-linecap="round" stroke-linejoin="round"/>
<polyline points="569.0,745.0 569.0,778.0" fill="none" stroke="#008800" stroke-width="7" stroke-linecap="round" stroke-linejoin="round"/>
<polyline points="569.0,745.0 569.0,778.0" fill="none" stroke="#00d000" stroke-width="4.34" stroke-linecap="round" stroke-linejoin="round"/>
<path d="M560,748 L569,738 L578,748 Z" fill="#00c000" stroke="none" stroke-width="1" />
<polyline points="588.0,726.0 588.0,759.0" fill="none" stroke="#008800" stroke-width="7" stroke-linecap="round" stroke-linejoin="round"/>
<polyline points="588.0,726.0 588.0,759.0" fill="none" stroke="#00d000" stroke-width="4.34" stroke-linecap="round" stroke-linejoin="round"/>
<path d="M579,732 L588,722 L597,732 Z" fill="#00c000" stroke="none" stroke-width="1" />
<polyline points="578.0,762.0 611.0,762.0 658.0,787.0" fill="none" stroke="#008800" stroke-width="6" stroke-linecap="round" stroke-linejoin="round"/>
<polyline points="578.0,762.0 611.0,762.0 658.0,787.0" fill="none" stroke="#00d000" stroke-width="3.7199999999999998" stroke-linecap="round" stroke-linejoin="round"/>
<polyline points="569.0,779.0 622.0,806.0" fill="none" stroke="#008800" stroke-width="9" stroke-linecap="round" stroke-linejoin="round"/>
<polyline points="569.0,779.0 622.0,806.0" fill="none" stroke="#00d000" stroke-width="5.58" stroke-linecap="round" stroke-linejoin="round"/>
<polyline points="628.0,778.0 687.0,809.0" fill="none" stroke="#008800" stroke-width="5" stroke-linecap="round" stroke-linejoin="round"/>
<polyline points="628.0,778.0 687.0,809.0" fill="none" stroke="#00d000" stroke-width="3.1" stroke-linecap="round" stroke-linejoin="round"/>
<polyline points="601.0,781.0 601.0,830.0 611.0,837.0" fill="none" stroke="#008800" stroke-width="5" stroke-linecap="round" stroke-linejoin="round"/>
<polyline points="601.0,781.0 601.0,830.0 611.0,837.0" fill="none" stroke="#00d000" stroke-width="3.1" stroke-linecap="round" stroke-linejoin="round"/>
<ellipse cx="573" cy="780" rx="8" ry="5" fill="#00b000" stroke="none" stroke-width="1"/>
<text x="310" y="804" font-family="Liberation Serif" font-size="12.5" fill="#f0d000" stroke="#f0d000" stroke-width="0.3">Z</text>
<text x="296.5" y="825" font-family="Liberation Serif" font-size="12.5" fill="#f0d000" stroke="#f0d000" stroke-width="0.3">X</text>
<text x="321.5" y="825" font-family="Liberation Serif" font-size="12.5" fill="#f0d000" stroke="#f0d000" stroke-width="0.3">Y</text>
<polyline points="309.0,806.0 309.0,818.0" fill="none" stroke="#0000ff" stroke-width="1.5" stroke-linecap="round" stroke-linejoin="round"/>
<polyline points="309.0,818.0 301.0,823.0" fill="none" stroke="#ff0000" stroke-width="1.5" stroke-linecap="round" stroke-linejoin="round"/>
<polyline points="309.0,818.0 318.0,824.0" fill="none" stroke="#00c000" stroke-width="1.5" stroke-linecap="round" stroke-linejoin="round"/>
<ellipse cx="317.5" cy="823.5" rx="1.5" ry="1.2" fill="#00e000" stroke="none" stroke-width="1"/>
</g>
</svg>
</body></html>
